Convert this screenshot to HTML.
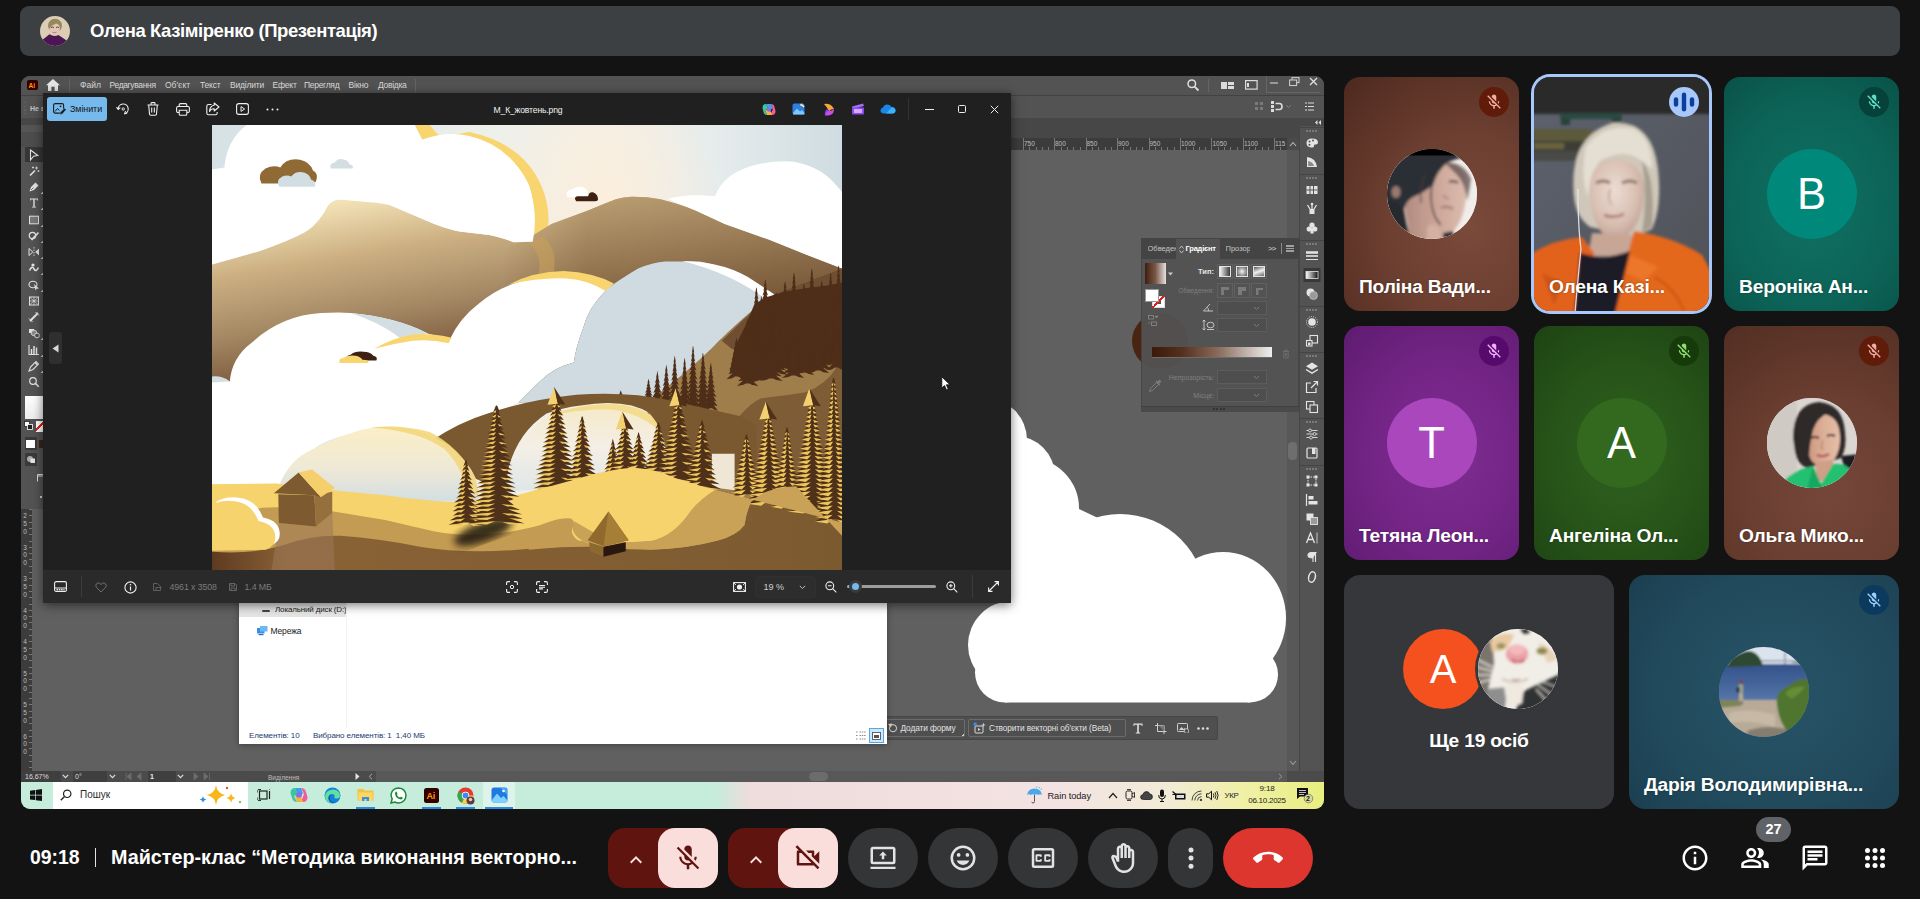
<!DOCTYPE html>
<html lang="uk">
<head>
<meta charset="utf-8">
<title>Meet</title>
<style>
*{box-sizing:border-box;margin:0;padding:0}
html,body{width:1920px;height:899px;overflow:hidden;background:#131314}
body{position:relative;font-family:"Liberation Sans",sans-serif;color:#fff}
.abs{position:absolute}
/* top bar */
#topbar{position:absolute;left:20px;top:6px;width:1880px;height:50px;background:#3c4043;border-radius:9px}
#topbar .ava{position:absolute;left:20px;top:10px;width:30px;height:30px;border-radius:50%;overflow:hidden}
#topbar .ttl{position:absolute;left:70px;top:0;line-height:50px;font-weight:bold;font-size:18.5px;letter-spacing:-0.42px;white-space:nowrap;color:#fff}
/* presentation frame */
#pres{position:absolute;left:21px;top:76px;width:1303px;height:733px;border-radius:9px;overflow:hidden;background:#606060}
/* tiles */
.tile{position:absolute;border-radius:16px;overflow:hidden}
.tile .nm{position:absolute;left:15px;bottom:12px;font-weight:bold;font-size:19.2px;letter-spacing:-0.2px;white-space:nowrap;color:#fff;line-height:24px;text-shadow:0 0 2px rgba(0,0,0,.35)}
.tile .av{position:absolute;left:50%;top:50%;width:90px;height:90px;margin:-45px 0 0 -45px;border-radius:50%;overflow:hidden;text-align:center;line-height:90px;font-size:43.500px;color:#fff}
.mic{position:absolute;right:10px;top:10px;width:30px;height:30px;border-radius:50%}
.mic svg{position:absolute;left:6px;top:6px;width:18px;height:18px}
/* bottom bar */
#bb{position:absolute;left:0;top:815px;width:1920px;height:84px}
.btn{position:absolute;top:13px;height:60px;background:#333537;border-radius:30px}
.btn svg{position:absolute;left:50%;top:50%;width:30px;height:30px;margin:-15px 0 0 -15px}
</style>
</head>
<body>

<!-- TOPBAR -->
<div id="topbar">
  <div class="ava"><svg width="30" height="30" viewBox="0 0 30 30"><defs><filter id="b0"><feGaussianBlur stdDeviation=".45"/></filter></defs><rect width="30" height="30" fill="#dccdb6"/><g filter="url(#b0)"><ellipse cx="15" cy="9.800" rx="7" ry="7" fill="#96885e"/><ellipse cx="14.600" cy="12.800" rx="5.300" ry="6.200" fill="#e2c6b3"/><path d="M9 7.500 Q14 3.500 20.500 8 Q17 7 14 8.500 Q11 9.500 9.500 13 Q8 10 9 7.500Z" fill="#96885e"/><path d="M11 11.500 q1.500 -.8 3 0 M16 11.500 q1.500 -.8 3 0" stroke="#4a3a34" stroke-width=".9" fill="none"/><path d="M12.500 16.200 q2 1 4 0" stroke="#a86a66" stroke-width=".8" fill="none"/><path d="M1 25 L9.500 18.300 Q14 21.500 18.500 19 L28 25.500 L31 31 L-1 31Z" fill="#4b1552"/></g></svg></div>
  <div class="ttl">Олена Казіміренко (Презентація)</div>
</div>

<!-- PRESENTATION -->
<div id="pres">
<div id="pw" style="position:absolute;left:-21px;top:-76px;width:1920px;height:899px;font-size:8.5px;color:#d6d6d6">
<style>
#pw div,#pw svg{position:absolute}
#pw .t{white-space:nowrap;line-height:12px}
</style>
<!-- ILLUSTRATOR chrome -->
<div style="left:21px;top:76px;width:1303px;height:19px;background:#535353"></div>
<div style="left:21px;top:95px;width:1303px;height:1px;background:#424242"></div>
<div style="left:21px;top:96px;width:1303px;height:22px;background:#535353"></div>
<div style="left:21px;top:118px;width:1303px;height:20px;background:#474747"></div>
<div style="left:21px;top:124.500px;width:22px;height:7px;background:#555"></div><div style="left:21px;top:131.500px;width:22px;height:7px;background:#4d4d4d"></div>
<!-- ruler top -->
<div style="left:32px;top:138px;width:1255px;height:12px;background:#3c3c3c"></div>
<!-- canvas -->
<div style="left:32px;top:150px;width:1255px;height:621px;background:#606060"></div>
<!-- Ai logo -->
<div style="left:27px;top:80px;width:11px;height:10px;background:#330000;border-radius:2px"></div>
<div class="t" style="left:28.5px;top:79.5px;font-size:6.5px;font-weight:bold;color:#ff9a00">Ai</div>
<svg style="left:46px;top:79px" width="14" height="12" viewBox="0 0 14 12"><path d="M7 0 L14 6.200 L12 6.200 L12 12 L8.600 12 L8.600 7.800 L5.400 7.800 L5.400 12 L2 12 L2 6.200 L0 6.200Z" fill="#e4e4e4"/></svg>
<div style="left:69px;top:79px;width:1px;height:13px;background:#646464"></div>
<div class="t" style="left:80px;top:79px;color:#dadada">Файл</div>
<div class="t" style="left:109.500px;top:79px;color:#dadada;letter-spacing:-.35px">Редагування</div>
<div class="t" style="left:165px;top:79px;color:#dadada">Об'єкт</div>
<div class="t" style="left:200px;top:79px;color:#dadada;letter-spacing:-.2px">Текст</div>
<div class="t" style="left:230px;top:79px;color:#dadada;letter-spacing:-.2px">Виділити</div>
<div class="t" style="left:272.500px;top:79px;color:#dadada;letter-spacing:-.2px">Ефект</div>
<div class="t" style="left:304px;top:79px;color:#dadada;letter-spacing:-.3px">Перегляд</div>
<div class="t" style="left:348.500px;top:79px;color:#dadada;letter-spacing:-.2px">Вікно</div>
<div class="t" style="left:378px;top:79px;color:#dadada;letter-spacing:-.3px">Довідка</div>
<div style="left:415px;top:79px;width:1px;height:13px;background:#646464"></div>
<!-- top-right of AI -->
<svg style="left:1186px;top:78px" width="14" height="14" viewBox="0 0 14 14"><circle cx="5.800" cy="5.800" r="3.800" fill="none" stroke="#e0e0e0" stroke-width="1.500"/><path d="M8.600 8.600 L12.500 12.500" stroke="#e0e0e0" stroke-width="1.800"/></svg>
<div style="left:1208px;top:79px;width:1px;height:13px;background:#646464"></div>
<svg style="left:1221px;top:81px" width="14" height="9" viewBox="0 0 14 9"><rect x="0" y="1" width="6" height="7" fill="#dcdcdc"/><rect x="7" y="1" width="6" height="3" fill="#dcdcdc"/><rect x="7" y="5" width="6" height="3" fill="#dcdcdc"/></svg>
<svg style="left:1245px;top:80px" width="13" height="10" viewBox="0 0 13 10"><rect x=".6" y=".6" width="11.500" height="8.500" fill="none" stroke="#dcdcdc" stroke-width="1.200"/><rect x="2" y="3" width="2" height="4" fill="#dcdcdc"/></svg>
<div style="left:1266px;top:76px;width:54px;height:17px;border-bottom:1px solid #666;border-left:1px solid #666"></div>
<div style="left:1270px;top:82px;width:8px;height:2px;background:#9a9a9a"></div>
<svg style="left:1289px;top:77px" width="12" height="10" viewBox="0 0 12 10"><rect x="3" y=".6" width="7" height="5" fill="none" stroke="#c8c8c8" stroke-width="1.100"/><rect x=".6" y="3" width="7" height="5.500" fill="#535353" stroke="#c8c8c8" stroke-width="1.100"/></svg>
<svg style="left:1309px;top:77px" width="9" height="9" viewBox="0 0 9 9"><path d="M1 1 L8 8 M8 1 L1 8" stroke="#dedede" stroke-width="1.400"/></svg>
<!-- control bar right icons -->
<svg style="left:1255px;top:102px" width="9" height="9" viewBox="0 0 9 9"><rect x="0" y="0" width="3" height="3" fill="#7a7a7a"/><rect x="5" y="0" width="3" height="3" fill="#7a7a7a"/><rect x="0" y="5" width="3" height="3" fill="#7a7a7a"/><rect x="5" y="5" width="3" height="3" fill="#7a7a7a"/></svg>
<svg style="left:1271px;top:101px" width="22" height="12" viewBox="0 0 22 12"><rect x="0" y="0" width="3" height="3" fill="#dcdcdc"/><rect x="0" y="4" width="3" height="3" fill="#dcdcdc"/><rect x="0" y="8" width="3" height="3" fill="#dcdcdc"/><path d="M4.500 2.500 H8.500 Q11 2.500 11 5.500 Q11 8.500 8.500 8.500 H4.500" fill="none" stroke="#dcdcdc" stroke-width="1.600"/><path d="M15.500 4.500 L17.500 6.500 L19.500 4.500" fill="none" stroke="#8a8a8a" stroke-width="1"/></svg>
<svg style="left:1305px;top:102px" width="9" height="9" viewBox="0 0 9 9"><path d="M0 1 H2 M3 1 H9 M0 4.500 H2 M3 4.500 H9 M0 8 H2 M3 8 H9" stroke="#dcdcdc" stroke-width="1.200"/></svg>
<div class="t" style="left:30px;top:102.500px;font-size:7px;color:#c4c4c4;font-weight:bold">Не в</div>
<div style="left:23.500px;top:101.500px;width:2px;height:13px;background:repeating-linear-gradient(#6a5a6a 0 1.500px,transparent 1.500px 3.600px)"></div>
<!-- left toolbar -->
<div style="left:21px;top:138px;width:22px;height:371px;background:#535353"></div><div style="left:21px;top:138px;width:22px;height:9px;background:#4d4d4d"></div>
<div style="left:21px;top:509px;width:11px;height:262px;background:#3c3c3c"></div>
<div style="left:25px;top:147px;width:18px;height:15px;background:#363636"></div>
<svg style="left:26px;top:147.5px" width="16" height="14" viewBox="-8 -7 16 14"><path d="M-3.500 -5 L3.800 .5 L-.5 1.200 L-3.500 5Z" fill="none" stroke="#e2e2e2" stroke-width="1.100"/></svg>
<svg style="left:26px;top:164.0px" width="16" height="14" viewBox="-8 -7 16 14"><path d="M-4 4.500 L1 -.5" stroke="#e2e2e2" stroke-width="1.600"/><path d="M2.500 -4.500 v3 M1 -3 h3 M4.500 -1 v2 M3.500 0 h2 M-1 -4.500 v2 M-2 -3.500 h2" stroke="#e2e2e2" stroke-width=".8"/></svg>
<svg style="left:26px;top:180.0px" width="16" height="14" viewBox="-8 -7 16 14"><path d="M-4.500 4.500 L-3 0 L1.500 -4.500 L4.500 -1.500 L0 3Z" fill="#e2e2e2"/><path d="M-3 3 L-.5 .5" stroke="#535353" stroke-width=".8"/></svg>
<div style="left:40.500px;top:192.0px;width:2px;height:2px;background:linear-gradient(135deg,transparent 50%,#cfcfcf 50%)"></div>
<svg style="left:26px;top:196.0px" width="16" height="14" viewBox="-8 -7 16 14"><path d="M-4 -4.500 H4 V-2.500 H3.300 V-3.500 H.7 V3.700 H2 V4.500 H-2 V3.700 H-.7 V-3.500 H-3.300 V-2.500 H-4Z" fill="#e2e2e2"/></svg>
<div style="left:40.500px;top:208.0px;width:2px;height:2px;background:linear-gradient(135deg,transparent 50%,#cfcfcf 50%)"></div>
<svg style="left:26px;top:212.5px" width="16" height="14" viewBox="-8 -7 16 14"><rect x="-4.500" y="-3.800" width="9" height="7.600" fill="#777" stroke="#e2e2e2" stroke-width="1"/></svg>
<div style="left:40.500px;top:224.5px;width:2px;height:2px;background:linear-gradient(135deg,transparent 50%,#cfcfcf 50%)"></div>
<svg style="left:26px;top:229.0px" width="16" height="14" viewBox="-8 -7 16 14"><circle cx="-1.500" cy="-.5" r="3.200" fill="none" stroke="#e2e2e2" stroke-width="1.200"/><path d="M-2.500 4 L4.500 -3.500" stroke="#e2e2e2" stroke-width="1.800"/></svg>
<div style="left:40.500px;top:241.0px;width:2px;height:2px;background:linear-gradient(135deg,transparent 50%,#cfcfcf 50%)"></div>
<svg style="left:26px;top:245.0px" width="16" height="14" viewBox="-8 -7 16 14"><path d="M-5 -3.500 L-1.200 0 L-5 3.500Z" fill="none" stroke="#e2e2e2" stroke-width="1"/><path d="M5 -3.500 L1.200 0 L5 3.500Z" fill="#e2e2e2"/><path d="M0 -5 V5" stroke="#e2e2e2" stroke-width=".8" stroke-dasharray="1.500 1"/></svg>
<div style="left:40.500px;top:257.0px;width:2px;height:2px;background:linear-gradient(135deg,transparent 50%,#cfcfcf 50%)"></div>
<svg style="left:26px;top:261.0px" width="16" height="14" viewBox="-8 -7 16 14"><path d="M-4.500 2.500 Q-2 -3 0 1 Q2 4.500 4.500 -.5" fill="none" stroke="#e2e2e2" stroke-width="1.600"/><circle cx="-1" cy="-3" r="1.600" fill="#e2e2e2"/></svg>
<div style="left:40.500px;top:273.0px;width:2px;height:2px;background:linear-gradient(135deg,transparent 50%,#cfcfcf 50%)"></div>
<svg style="left:26px;top:277.5px" width="16" height="14" viewBox="-8 -7 16 14"><ellipse cx="-1" cy="-.5" rx="4" ry="3.200" fill="none" stroke="#e2e2e2" stroke-width="1.100"/><path d="M0 -1 L5 3.500 L2.500 3.700 L1.500 5.500Z" fill="#e2e2e2"/></svg>
<div style="left:40.500px;top:289.5px;width:2px;height:2px;background:linear-gradient(135deg,transparent 50%,#cfcfcf 50%)"></div>
<svg style="left:26px;top:293.5px" width="16" height="14" viewBox="-8 -7 16 14"><rect x="-4.500" y="-4" width="9" height="8" fill="none" stroke="#e2e2e2" stroke-width="1"/><path d="M-4.500 -4 L4.500 4 M-4.500 4 L4.500 -4 M-4.500 0 H4.500 M0 -4 V4" stroke="#e2e2e2" stroke-width=".7"/></svg>
<svg style="left:26px;top:310.0px" width="16" height="14" viewBox="-8 -7 16 14"><path d="M-4 4 L4 -4" stroke="#e2e2e2" stroke-width="2"/><path d="M-5 1.500 L-1.500 5 M1.500 -5 L5 -1.500" stroke="#e2e2e2" stroke-width="1"/></svg>
<svg style="left:26px;top:326.0px" width="16" height="14" viewBox="-8 -7 16 14"><rect x="-5" y="-4" width="5" height="4" fill="#e2e2e2"/><circle cx="0" cy="0" r="2.800" fill="#888" stroke="#e2e2e2" stroke-width=".8"/><circle cx="3" cy="2.500" r="2.400" fill="#535353" stroke="#e2e2e2" stroke-width=".9"/></svg>
<div style="left:40.500px;top:338.0px;width:2px;height:2px;background:linear-gradient(135deg,transparent 50%,#cfcfcf 50%)"></div>
<svg style="left:26px;top:342.5px" width="16" height="14" viewBox="-8 -7 16 14"><path d="M-5 -5 V4.500 H5" fill="none" stroke="#e2e2e2" stroke-width="1.100"/><path d="M-2.500 4 V-1 M0 4 V-4 M2.500 4 V-2.500" stroke="#e2e2e2" stroke-width="1.500"/></svg>
<div style="left:40.500px;top:354.5px;width:2px;height:2px;background:linear-gradient(135deg,transparent 50%,#cfcfcf 50%)"></div>
<svg style="left:26px;top:359.0px" width="16" height="14" viewBox="-8 -7 16 14"><path d="M-5 5 L-3.500 1 L2 -4.500 L4.500 -2 L-1 3.500Z" fill="none" stroke="#e2e2e2" stroke-width="1.100"/><path d="M1 -3.500 L3.500 -1" stroke="#e2e2e2" stroke-width="1.600"/></svg>
<div style="left:40.500px;top:371.0px;width:2px;height:2px;background:linear-gradient(135deg,transparent 50%,#cfcfcf 50%)"></div>
<svg style="left:26px;top:375.0px" width="16" height="14" viewBox="-8 -7 16 14"><circle cx="-1" cy="-1" r="3.300" fill="none" stroke="#e2e2e2" stroke-width="1.200"/><path d="M1.500 1.500 L4.800 4.800" stroke="#e2e2e2" stroke-width="1.600"/></svg>
<!-- toolbar swatches -->
<div style="left:25px;top:396px;width:18px;height:23px;background:linear-gradient(#fff,#ececec)"></div>
<svg style="left:24px;top:421px" width="9" height="9" viewBox="0 0 9 9"><rect x=".5" y=".5" width="5" height="5" fill="#fff" stroke="#222" stroke-width=".8"/><rect x="3.500" y="3.500" width="5" height="5" fill="#222" stroke="#fff" stroke-width=".8"/></svg>
<div style="left:36px;top:421px;width:7px;height:11px;background:linear-gradient(135deg,#fff 0 42%,#e0201c 42% 58%,#fff 58%)"></div>
<div style="left:24.500px;top:437px;width:12.500px;height:13px;background:#3a3a3a;border-radius:1px"></div>
<div style="left:26px;top:439.500px;width:9px;height:8.500px;background:#fff"></div>
<div style="left:38.500px;top:440px;width:4.500px;height:8px;background:#3c2416"></div>
<div style="left:24.500px;top:453px;width:12.500px;height:13px;background:#3a3a3a;border-radius:1px"></div>
<svg style="left:26px;top:455px" width="10" height="9" viewBox="0 0 10 9"><circle cx="4" cy="4" r="3" fill="#aaa"/><rect x="4.500" y="3.500" width="4.500" height="4.500" fill="#e2e2e2"/></svg>
<svg style="left:36.500px;top:473px" width="7" height="9" viewBox="0 0 7 9"><path d="M.5 8.500 V1.500 H7 M.5 3 H7" fill="none" stroke="#dcdcdc" stroke-width="1"/></svg>
<div style="left:40px;top:496px;width:1.500px;height:1.500px;background:#ccc"></div>
<!-- top ruler labels -->
<div id="rul" style="left:1011px;top:138px;width:276px;height:12px;overflow:hidden;font-size:6.500px;color:#bdbdbd">
<div class="t" style="left:13px;top:0">750</div><div class="t" style="left:44px;top:0">800</div><div class="t" style="left:75.500px;top:0">850</div><div class="t" style="left:107px;top:0">900</div><div class="t" style="left:138.500px;top:0">950</div><div class="t" style="left:170px;top:0">1000</div><div class="t" style="left:201.500px;top:0">1050</div><div class="t" style="left:233px;top:0">1100</div><div class="t" style="left:264px;top:0">115</div>
<div style="left:11.500px;top:0;width:270px;height:12px;background:repeating-linear-gradient(90deg,#777 0 1px,transparent 1px 31.400px)"></div>
<div style="left:11.500px;top:9px;width:270px;height:3px;background:repeating-linear-gradient(90deg,#777 0 1px,transparent 1px 6.280px)"></div>
</div>
<!-- left ruler labels -->
<div style="left:21px;top:509px;width:11px;height:262px;overflow:hidden;font-size:6.500px;color:#bdbdbd;line-height:7.800px;text-align:center">
<div style="left:0;top:3px;width:8px">2<br>5<br>0</div><div style="left:0;top:34.500px;width:8px">3<br>0<br>0</div><div style="left:0;top:66px;width:8px">3<br>5<br>0</div><div style="left:0;top:97.500px;width:8px">4<br>0<br>0</div><div style="left:0;top:129px;width:8px">4<br>5<br>0</div><div style="left:0;top:160.500px;width:8px">5<br>0<br>0</div><div style="left:0;top:192px;width:8px">5<br>5<br>0</div><div style="left:0;top:223.500px;width:8px">6<br>0<br>0</div>
<div style="left:8px;top:0;width:3px;height:262px;background:repeating-linear-gradient(#777 0 1px,transparent 1px 6.300px)"></div>
</div>
<!-- vertical scrollbar + right icon strip -->
<div style="left:1287px;top:138px;width:12px;height:633px;background:#585858"></div>
<div style="left:1287px;top:138px;width:12px;height:12px;background:#4a4a4a"></div>
<svg style="left:1289px;top:141px" width="8" height="6" viewBox="0 0 8 6"><path d="M1 5 L4 1.500 L7 5" fill="none" stroke="#bbb" stroke-width="1.100"/></svg>
<svg style="left:1289px;top:760px" width="8" height="6" viewBox="0 0 8 6"><path d="M1 1 L4 4.500 L7 1" fill="none" stroke="#999" stroke-width="1.100"/></svg>
<div style="left:1288px;top:442px;width:9px;height:18px;border-radius:4px;background:#6e6e6e"></div>
<div style="left:1299px;top:118px;width:25px;height:664px;background:#535353;border-left:1px solid #454545"></div>
<div style="left:1299px;top:118px;width:25px;height:8px;background:#474747"></div>
<svg style="left:1315px;top:120px" width="6" height="5" viewBox="0 0 6 5"><path d="M2.500 0 L0 2.500 L2.500 5Z M6 0 L3.500 2.500 L6 5Z" fill="#ddd"/></svg>
<svg width="0" height="0"><defs><linearGradient id="gwb"><stop offset="0" stop-color="#fff"/><stop offset="1" stop-color="#111"/></linearGradient></defs></svg>
<div style="left:1300px;top:127px;width:24px;height:1px;background:#454545"></div><div style="left:1306px;top:130px;width:11px;height:2px;background:repeating-linear-gradient(90deg,#7a7a7a 0 2px,transparent 2px 3px)"></div>
<div style="left:1300px;top:174px;width:24px;height:1px;background:#454545"></div><div style="left:1306px;top:177px;width:11px;height:2px;background:repeating-linear-gradient(90deg,#7a7a7a 0 2px,transparent 2px 3px)"></div>
<div style="left:1300px;top:240px;width:24px;height:1px;background:#454545"></div><div style="left:1306px;top:243px;width:11px;height:2px;background:repeating-linear-gradient(90deg,#7a7a7a 0 2px,transparent 2px 3px)"></div>
<div style="left:1300px;top:306px;width:24px;height:1px;background:#454545"></div><div style="left:1306px;top:309px;width:11px;height:2px;background:repeating-linear-gradient(90deg,#7a7a7a 0 2px,transparent 2px 3px)"></div>
<div style="left:1300px;top:352px;width:24px;height:1px;background:#454545"></div><div style="left:1306px;top:355px;width:11px;height:2px;background:repeating-linear-gradient(90deg,#7a7a7a 0 2px,transparent 2px 3px)"></div>
<div style="left:1300px;top:418px;width:24px;height:1px;background:#454545"></div><div style="left:1306px;top:421px;width:11px;height:2px;background:repeating-linear-gradient(90deg,#7a7a7a 0 2px,transparent 2px 3px)"></div>
<div style="left:1300px;top:465px;width:24px;height:1px;background:#454545"></div><div style="left:1306px;top:468px;width:11px;height:2px;background:repeating-linear-gradient(90deg,#7a7a7a 0 2px,transparent 2px 3px)"></div>
<svg style="left:1303px;top:135px" width="18" height="16" viewBox="-9 -8 18 16"><path d="M-5.500 0 Q-5.500 -4.500 0 -4.500 Q6 -4.500 6 -.5 Q6 2 3 1.500 Q1.500 1.500 2 3 Q2 4.500 -1 4.500 Q-5.500 4 -5.500 0Z" fill="#e4e4e4"/><circle cx="-2.500" cy="-1.500" r="1" fill="#535353"/><circle cx="1" cy="-2.500" r="1" fill="#535353"/><circle cx="-2.500" cy="1.800" r="1" fill="#535353"/></svg>
<svg style="left:1303px;top:154px" width="18" height="16" viewBox="-9 -8 18 16"><path d="M-5 5 V-5 Q4 -4 5 5Z" fill="#e4e4e4"/><path d="M-3.800 4 V-1 Q1 0 2 4Z" fill="#888"/></svg>
<svg style="left:1303px;top:182px" width="18" height="16" viewBox="-9 -8 18 16"><rect x="-5.500" y="-4" width="11" height="8" fill="#e4e4e4"/><path d="M-2 -4 V4 M1.500 -4 V4 M-5.500 0 H5.500" stroke="#535353" stroke-width="1"/></svg>
<svg style="left:1303px;top:201px" width="18" height="16" viewBox="-9 -8 18 16"><path d="M-2.500 0 H2.500 V5 H-2.500Z" fill="#e4e4e4"/><path d="M0 0 V-5.500 M-2 0 L-4.500 -4 M2 0 L4.500 -4" stroke="#e4e4e4" stroke-width="1.300"/><circle cx="0" cy="-5" r="1.300" fill="#e4e4e4"/></svg>
<svg style="left:1303px;top:220px" width="18" height="16" viewBox="-9 -8 18 16"><circle cx="0" cy="-2.800" r="2.600" fill="#e4e4e4"/><circle cx="-2.800" cy="1" r="2.600" fill="#e4e4e4"/><circle cx="2.800" cy="1" r="2.600" fill="#e4e4e4"/><path d="M-.8 0 H.8 L1.800 5.500 H-1.800Z" fill="#e4e4e4"/></svg>
<svg style="left:1303px;top:248px" width="18" height="16" viewBox="-9 -8 18 16"><path d="M-6 -3.500 H6" stroke="#e4e4e4" stroke-width="2.400"/><path d="M-6 0 H6" stroke="#e4e4e4" stroke-width="1.600"/><path d="M-6 3.500 H6" stroke="#e4e4e4" stroke-width="1"/></svg>
<svg style="left:1303px;top:267px" width="18" height="16" viewBox="-9 -8 18 16"><rect x="-8.500" y="-7" width="17" height="14" fill="#383838"/><rect x="-6" y="-3.500" width="12" height="7" fill="url(#gwb)" stroke="#e4e4e4" stroke-width=".8"/></svg>
<svg style="left:1303px;top:286px" width="18" height="16" viewBox="-9 -8 18 16"><circle cx="-1.500" cy="-1.500" r="4" fill="#e4e4e4"/><circle cx="1.500" cy="1.500" r="4" fill="#9a9a9a" stroke="#cfcfcf" stroke-width=".6"/></svg>
<svg style="left:1303px;top:314px" width="18" height="16" viewBox="-9 -8 18 16"><circle cx="0" cy="0" r="3.800" fill="#e4e4e4"/><circle cx="0" cy="0" r="5.500" fill="none" stroke="#e4e4e4" stroke-width=".9" stroke-dasharray="1 1.200"/></svg>
<svg style="left:1303px;top:333px" width="18" height="16" viewBox="-9 -8 18 16"><rect x="-2" y="-5.500" width="7.500" height="7.500" fill="none" stroke="#e4e4e4" stroke-width="1.100"/><rect x="-5.500" y="-.5" width="5.500" height="5.500" fill="#535353" stroke="#e4e4e4" stroke-width="1.100"/><rect x="-4" y="1.500" width="2.500" height="2.500" fill="#e4e4e4"/></svg>
<svg style="left:1303px;top:360px" width="18" height="16" viewBox="-9 -8 18 16"><path d="M0 -5.500 L6 -1.800 L0 1.800 L-6 -1.800Z" fill="#e4e4e4"/><path d="M-6 1.500 L0 5.200 L6 1.500" fill="none" stroke="#e4e4e4" stroke-width="1.400"/></svg>
<svg style="left:1303px;top:379px" width="18" height="16" viewBox="-9 -8 18 16"><path d="M-1 -4 H-5.500 V5.500 H4 V1" fill="none" stroke="#e4e4e4" stroke-width="1.200"/><path d="M-1 1 L5.500 -5.500 M1.500 -5.500 H5.500 V-1.500" fill="none" stroke="#e4e4e4" stroke-width="1.200"/></svg>
<svg style="left:1303px;top:399px" width="18" height="16" viewBox="-9 -8 18 16"><rect x="-5.500" y="-5.500" width="7.500" height="7.500" fill="none" stroke="#e4e4e4" stroke-width="1.100"/><rect x="-2" y="-2" width="7.500" height="7.500" fill="#535353" stroke="#e4e4e4" stroke-width="1.100"/></svg>
<svg style="left:1303px;top:426px" width="18" height="16" viewBox="-9 -8 18 16"><path d="M-5.500 -3.500 H5.500 M-5.500 0 H5.500 M-5.500 3.500 H5.500" stroke="#e4e4e4" stroke-width=".9"/><circle cx="-2" cy="-3.500" r="1.500" fill="#535353" stroke="#e4e4e4" stroke-width=".8"/><circle cx="2.500" cy="0" r="1.500" fill="#535353" stroke="#e4e4e4" stroke-width=".8"/><circle cx="-1" cy="3.500" r="1.500" fill="#535353" stroke="#e4e4e4" stroke-width=".8"/></svg>
<svg style="left:1303px;top:445px" width="18" height="16" viewBox="-9 -8 18 16"><rect x="-5" y="-5" width="10" height="10" rx="1" fill="none" stroke="#e4e4e4" stroke-width="1.200"/><rect x="0" y="-5" width="3.500" height="6" fill="#e4e4e4"/></svg>
<svg style="left:1303px;top:473px" width="18" height="16" viewBox="-9 -8 18 16"><rect x="-4" y="-4" width="8" height="8" fill="none" stroke="#e4e4e4" stroke-width="1" stroke-dasharray="1.500 1"/><path d="M-5.500 -5.500 h3 v3 h-3z M2.500 -5.500 h3 v3 h-3z M-5.500 2.500 h3 v3 h-3z M2.500 2.500 h3 v3 h-3z" fill="#e4e4e4"/></svg>
<svg style="left:1303px;top:492px" width="18" height="16" viewBox="-9 -8 18 16"><path d="M-5.500 -6 V6" stroke="#e4e4e4" stroke-width="1.200"/><rect x="-3.500" y="-4" width="5" height="3.500" fill="#e4e4e4"/><rect x="-3.500" y="1" width="9" height="3.500" fill="#e4e4e4"/></svg>
<svg style="left:1303px;top:511px" width="18" height="16" viewBox="-9 -8 18 16"><rect x="-5.500" y="-5.500" width="7" height="7" fill="#e4e4e4"/><rect x="-1.500" y="-1.500" width="7" height="7" fill="#9a9a9a" stroke="#e4e4e4" stroke-width=".9"/></svg>
<svg style="left:1303px;top:530px" width="18" height="16" viewBox="-9 -8 18 16"><path d="M-5.500 5 L-1.500 -5 L2.500 5 M-4 1.500 H1" fill="none" stroke="#e4e4e4" stroke-width="1.300"/><path d="M5 -5.500 V5.500" stroke="#e4e4e4" stroke-width=".8"/></svg>
<svg style="left:1303px;top:549px" width="18" height="16" viewBox="-9 -8 18 16"><path d="M1 -4.500 V5 M3.500 -4.500 V5 M4.500 -4.500 H-.5 Q-4 -4.500 -4 -1.500 Q-4 1 1 1" fill="#e4e4e4" stroke="#e4e4e4" stroke-width="1.100"/></svg>
<svg style="left:1303px;top:569px" width="18" height="16" viewBox="-9 -8 18 16"><ellipse cx="0" cy="0" rx="3.300" ry="5.300" fill="none" stroke="#e4e4e4" stroke-width="1.500" transform="rotate(14)"/></svg>
<!-- big white cloud on canvas -->
<svg style="left:32px;top:150px" width="1255" height="621" viewBox="32 150 1255 621"><g fill="#fff"><circle cx="985" cy="440" r="42"/><circle cx="1015" cy="476" r="40"/><circle cx="1029" cy="508" r="50"/><circle cx="1120" cy="600" r="86"/><ellipse cx="1223" cy="618" rx="63" ry="66"/><circle cx="1250" cy="674.500" r="28"/><circle cx="1005" cy="672.500" r="30"/><circle cx="1012" cy="645" r="44"/><rect x="1005" y="600" width="245" height="102.500"/><path d="M1005 430 L1040 470 L1079 509 L1098 518 L1120 520 L1192 557 L1262 600 L1262 680 L990 690 L1000 625Z"/></g>
<circle cx="1160" cy="341" r="28" fill="#4a2412"/></svg>
<!-- gradient panel -->
<div style="left:1141px;top:238px;width:158px;height:174px;background:#535353;opacity:.93;border:1px solid #464646"></div>
<div style="left:1141px;top:238px;width:158px;height:21px;background:#444"></div>
<div style="left:1176px;top:239px;width:44px;height:20px;background:#535353"></div>
<div class="t" style="left:1147.500px;top:243px;font-size:7.500px;color:#c4c4c4;width:28px;overflow:hidden">Обведення</div>
<svg style="left:1178.500px;top:244.500px" width="5" height="9" viewBox="0 0 5 9"><path d="M.5 3.500 L2.500 1 L4.500 3.500 M.5 5.500 L2.500 8 L4.500 5.500" fill="none" stroke="#ccc" stroke-width=".9"/></svg>
<div class="t" style="left:1185.500px;top:243px;font-size:7.500px;color:#fff;font-weight:bold;letter-spacing:-.2px">Градієнт</div>
<div class="t" style="left:1225.500px;top:243px;font-size:7.500px;color:#c4c4c4;width:24px;overflow:hidden">Прозорість</div>
<div class="t" style="left:1268px;top:242.500px;font-size:8px;color:#ddd;letter-spacing:-1px">&gt;&gt;</div>
<div style="left:1281px;top:243px;width:1px;height:11px;background:#888"></div>
<svg style="left:1286px;top:245px" width="8" height="8" viewBox="0 0 8 8"><path d="M0 1 H8 M0 3.500 H8 M0 6 H8" stroke="#a0a0a0" stroke-width="1.100" shape-rendering="crispEdges"/></svg>
<div style="left:1145px;top:263px;width:21px;height:21px;background:linear-gradient(90deg,#3e1e0e 0%,#7a5848 50%,#e6e2e0 100%)"></div>
<svg style="left:1168px;top:272px" width="5" height="4" viewBox="0 0 5 4"><path d="M0 .5 H5 L2.500 3.500Z" fill="#ccc"/></svg>
<div style="left:1152px;top:295.500px;width:13px;height:12.500px;background:linear-gradient(135deg,#fff 0 43%,#e0201c 43% 57%,#fff 57%);border:1px solid #ddd"></div>
<div style="left:1156px;top:299.500px;width:5px;height:4.500px;background:#535353"></div>
<div style="left:1152px;top:295.500px;width:13px;height:12.500px;background:linear-gradient(135deg,transparent 0 44%,#e0201c 44% 56%,transparent 56%)"></div>
<div style="left:1145px;top:288.500px;width:13.500px;height:13px;background:#fff;border:.5px solid #999"></div>
<svg style="left:1148px;top:315px" width="11" height="12" viewBox="0 0 11 12"><rect x=".5" y=".5" width="5" height="3.500" fill="none" stroke="#8a8a8a" stroke-width=".8"/><rect x="3.500" y="7" width="5" height="3.500" fill="none" stroke="#8a8a8a" stroke-width=".8"/><path d="M7 1 h3 l-1.500 2z M0 8 h2.500" fill="#8a8a8a" stroke="#8a8a8a" stroke-width=".6"/></svg>
<div class="t" style="left:1180px;top:265.500px;width:34px;text-align:right;font-size:7.500px;color:#e6e6e6;font-weight:bold">Тип:</div>
<div style="left:1217px;top:264px;width:16px;height:15px;border:1px solid #606060"></div><div style="left:1219px;top:266px;width:12px;height:11px;background:linear-gradient(90deg,#f2f2f2,#3a3a3a);border:1px solid #e4e4e4"></div>
<div style="left:1234px;top:264px;width:16px;height:15px;border:1px solid #606060"></div><div style="left:1236px;top:266px;width:12px;height:11px;background:radial-gradient(circle,#f2f2f2,#555);border:1px solid #e4e4e4"></div>
<div style="left:1251px;top:264px;width:16px;height:15px;border:1px solid #606060"></div><div style="left:1253px;top:266px;width:12px;height:11px;background:linear-gradient(160deg,#555,#f2f2f2 50%,#666);border:1px solid #e4e4e4"></div>
<div class="t" style="left:1160px;top:285px;width:54px;text-align:right;font-size:6.500px;color:#7e7e7e">Обведення:</div>
<div style="left:1217px;top:283px;width:16px;height:15px;border:1px solid #606060"></div><div style="left:1234px;top:283px;width:16px;height:15px;border:1px solid #606060"></div><div style="left:1251px;top:283px;width:16px;height:15px;border:1px solid #606060"></div>
<svg style="left:1220px;top:286px" width="44" height="10" viewBox="0 0 44 10"><path d="M1 9 V1 H9 V4 H4 V9Z M18 9 V1 H26 V5 H22 V9Z M36 9 V2 H43 V4 H38.500 V9Z" fill="#7a7a7a"/></svg>
<svg style="left:1203px;top:303px" width="11" height="9" viewBox="0 0 11 9"><path d="M.5 8 H10 M.5 8 L7 1 M5.500 8 Q5.500 5 4 4.300" fill="none" stroke="#cfcfcf" stroke-width=".9"/></svg>
<div style="left:1217px;top:301px;width:50px;height:14px;background:#4e4e4e;border:1px solid #5c5c5c"></div>
<svg style="left:1253px;top:306px" width="7" height="5" viewBox="0 0 7 5"><path d="M1 1 L3.500 3.500 L6 1" fill="none" stroke="#7c7c7c" stroke-width="1"/></svg>
<svg style="left:1202px;top:319px" width="13" height="12" viewBox="0 0 13 12"><path d="M2 1 V11 M.5 2.500 L2 1 L3.500 2.500 M.5 9.500 L2 11 L3.500 9.500 M5 10.500 H12" fill="none" stroke="#cfcfcf" stroke-width=".9"/><ellipse cx="8.500" cy="6" rx="3.500" ry="2.800" fill="none" stroke="#cfcfcf" stroke-width=".9"/></svg>
<div style="left:1217px;top:318px;width:50px;height:14px;background:#4e4e4e;border:1px solid #5c5c5c"></div>
<svg style="left:1253px;top:323px" width="7" height="5" viewBox="0 0 7 5"><path d="M1 1 L3.500 3.500 L6 1" fill="none" stroke="#7c7c7c" stroke-width="1"/></svg>
<div style="left:1152px;top:347px;width:120px;height:10.500px;background:linear-gradient(90deg,#3a1a0a 0%,#55301e 25%,#8a6a5a 55%,#cfc6c0 85%,#eee 100%);border-bottom:1px solid #6a6a6a"></div>
<svg style="left:1282px;top:349px" width="8" height="10" viewBox="0 0 8 10"><path d="M1 2.500 H7 M2.800 2.500 V1 H5.200 V2.500 M1.800 2.500 V9 H6.200 V2.500 M3.300 4 V7.500 M4.700 4 V7.500" fill="none" stroke="#747474" stroke-width=".8"/></svg>
<div class="t" style="left:1160px;top:372px;width:54px;text-align:right;font-size:7px;color:#808080">Непрозорість:</div>
<div style="left:1217px;top:370px;width:50px;height:14px;background:#4e4e4e;border:1px solid #5c5c5c"></div>
<svg style="left:1253px;top:375px" width="7" height="5" viewBox="0 0 7 5"><path d="M1 1 L3.500 3.500 L6 1" fill="none" stroke="#7c7c7c" stroke-width="1"/></svg>
<div class="t" style="left:1160px;top:390px;width:54px;text-align:right;font-size:7px;color:#808080">Місце:</div>
<div style="left:1217px;top:388px;width:50px;height:14px;background:#4e4e4e;border:1px solid #5c5c5c"></div>
<svg style="left:1253px;top:393px" width="7" height="5" viewBox="0 0 7 5"><path d="M1 1 L3.500 3.500 L6 1" fill="none" stroke="#7c7c7c" stroke-width="1"/></svg>
<svg style="left:1148px;top:379px" width="14" height="14" viewBox="0 0 14 14"><path d="M1.500 12.500 L2.500 9.500 L8.500 3.500 L10.500 5.500 L4.500 11.500Z" fill="none" stroke="#7c7c7c" stroke-width="1"/><path d="M8 2 L12 6 M9.500 3.500 L11.500 1.500 L12.500 2.500 L10.500 4.500" stroke="#7c7c7c" stroke-width="1.300" fill="none"/></svg>
<div style="left:1141px;top:406px;width:158px;height:6px;background:#4a4a4a;border-top:1px solid #404040"></div>
<div style="left:1213px;top:408px;width:12px;height:2px;background:repeating-linear-gradient(90deg,#333 0 2px,transparent 2px 3.300px)"></div>
<!-- contextual task bar -->
<div style="left:880px;top:716px;width:338px;height:24px;background:#4f4f4f;border:1px solid #464646;border-radius:2px"></div>
<div style="left:880px;top:719px;width:85px;height:18px;border:1px solid #6c6c6c;border-radius:2px"></div>
<svg style="left:888px;top:723px" width="10" height="10" viewBox="0 0 10 10"><circle cx="5" cy="5.200" r="3.600" fill="none" stroke="#d6d6d6" stroke-width="1"/><path d="M0 1 L4 .5 L3 4.500Z" fill="#d6d6d6"/></svg>
<div class="t" style="left:900.500px;top:722px;font-size:8.300px;color:#e2e2e2;letter-spacing:-.1px">Додати форму</div>
<div style="left:961.500px;top:734px;width:2px;height:2px;background:linear-gradient(135deg,transparent 50%,#cfcfcf 50%)"></div>
<div style="left:967.500px;top:719px;width:158px;height:18px;border:1px solid #6c6c6c;border-radius:2px"></div>
<svg style="left:973px;top:722px" width="13" height="12" viewBox="0 0 13 12"><rect x="2" y="4" width="8" height="7" rx="1" fill="none" stroke="#dcdcdc" stroke-width="1"/><path d="M5 6 L7.500 7.500 L5 9Z" fill="#dcdcdc"/><path d="M10.500 .5 L11 2.500 L13 3 L11 3.500 L10.500 5.500 L10 3.500 L8 3 L10 2.500Z" fill="#dcdcdc"/><circle cx="2.200" cy="2.200" r="1.700" fill="#3b8ff0"/></svg>
<div class="t" style="left:989px;top:722px;font-size:8.300px;color:#e2e2e2;letter-spacing:-.1px">Створити векторні об'єкти (Beta)</div>
<svg style="left:1133px;top:722.500px" width="10" height="11" viewBox="0 0 10 11"><path d="M.5 .5 H9.500 V3 H8.600 V1.800 H5.800 V9.500 H7.200 V10.500 H2.800 V9.500 H4.200 V1.800 H1.400 V3 H.5Z" fill="#e2e2e2"/></svg>
<svg style="left:1155px;top:722.500px" width="12" height="11" viewBox="0 0 12 11"><path d="M2.500 0 V8.500 H11.500 M0 2.500 H9 V11" fill="none" stroke="#cfcfcf" stroke-width="1"/><path d="M3.500 2.500 L9 2.500 L9 8Z" fill="#777"/></svg>
<svg style="left:1176.500px;top:723px" width="12" height="10" viewBox="0 0 12 10"><rect x=".5" y=".5" width="10" height="8" rx=".8" fill="none" stroke="#cfcfcf" stroke-width="1"/><path d="M2 7 L4.500 4 L6.500 6 L8 5 L9 7Z" fill="#cfcfcf"/><circle cx="9.500" cy="8" r="2.300" fill="#4f4f4f" stroke="#cfcfcf" stroke-width=".8"/></svg>
<svg style="left:1197px;top:726.500px" width="12" height="3" viewBox="0 0 12 3"><circle cx="1.500" cy="1.500" r="1.300" fill="#ddd"/><circle cx="6" cy="1.500" r="1.300" fill="#ddd"/><circle cx="10.500" cy="1.500" r="1.300" fill="#ddd"/></svg>
<!-- explorer window -->
<div style="left:239px;top:600px;width:648px;height:144px;background:#fff;box-shadow:0 1px 6px rgba(0,0,0,.35)"></div>
<div style="left:239px;top:603px;width:107px;height:14px;background:#e5e5e5"></div>
<div style="left:346px;top:603px;width:1px;height:125px;background:#f3f3f3"></div>
<div style="left:262px;top:609.500px;width:8px;height:2.500px;background:#444;border-radius:1px"></div>
<div class="t" style="left:275px;top:603.500px;font-size:8px;color:#222;width:71px;overflow:hidden;letter-spacing:-.15px">Локальний диск (D:)</div>
<svg style="left:256px;top:625px" width="12" height="11" viewBox="0 0 12 11"><rect x="1" y="3" width="7.500" height="5.500" fill="#3a8ee6"/><rect x="4" y="1" width="7.500" height="5.500" fill="#6ab7f5"/><rect x="2.500" y="9" width="5" height="1.200" fill="#2d6db8"/></svg>
<div class="t" style="left:270.500px;top:625px;font-size:8.500px;color:#1a1a1a;letter-spacing:-.15px">Мережа</div>
<div class="t" style="left:249px;top:730px;font-size:8px;color:#1e3a6e;letter-spacing:-.1px">Елементів: 10</div>
<div class="t" style="left:313px;top:730px;font-size:8px;color:#1e3a6e;letter-spacing:-.1px">Вибрано елементів: 1&nbsp; 1,40 МБ</div>
<svg style="left:856px;top:731px" width="10" height="9" viewBox="0 0 10 9"><path d="M0 1 H2 M3.500 1 H10 M0 4.500 H2 M3.500 4.500 H10 M0 8 H2 M3.500 8 H10" stroke="#8a8a8a" stroke-width="1" stroke-dasharray="1.500 .8"/></svg>
<div style="left:869px;top:728px;width:15px;height:15px;background:#cce8ff;border:1px solid #5aa7e0"></div>
<svg style="left:872px;top:732px" width="9" height="8" viewBox="0 0 9 8"><rect x=".5" y=".5" width="8" height="7" fill="#fff" stroke="#555" stroke-width=".9"/><rect x="2" y="3" width="5" height="3" fill="#555"/></svg>
<!-- PHOTOS window -->
<div style="left:43px;top:93px;width:968px;height:510px;background:#202020;box-shadow:0 2px 10px rgba(0,0,0,.55)"></div>
<div style="left:43px;top:570px;width:968px;height:33px;background:#2a2a2a"></div>
<div style="left:47px;top:97px;width:60px;height:24px;background:#76b9ed;border-radius:3px"></div>
<svg style="left:53px;top:102.500px" width="14" height="13" viewBox="0 0 14 13"><rect x=".6" y=".6" width="10" height="9.500" rx="1.500" fill="none" stroke="#1b1b1b" stroke-width="1.100"/><path d="M2 8.500 L4.500 5.500 L6.500 7.500" fill="none" stroke="#1b1b1b" stroke-width="1"/><circle cx="7.500" cy="3.300" r=".9" fill="#1b1b1b"/><path d="M6.500 12 L7.200 9.300 L11.500 5 L13.300 6.800 L9 11.200Z" fill="#1b1b1b" stroke="#76b9ed" stroke-width=".7"/></svg>
<div class="t" style="left:70px;top:103px;font-size:9px;color:#161616;letter-spacing:-.1px">Змінити</div>
<svg style="left:116px;top:102px" width="14" height="14" viewBox="0 0 14 14"><path d="M2.200 7 A5 5 0 1 1 8.500 11.800" fill="none" stroke="#f0f0f0" stroke-width="1.100"/><path d="M.5 5.200 L2.200 7.400 L4.300 5.600" fill="none" stroke="#f0f0f0" stroke-width="1.100"/><circle cx="7.200" cy="7" r="1.200" fill="none" stroke="#f0f0f0" stroke-width=".9"/><path d="M9.500 9 L8.500 12 L11.300 11" fill="none" stroke="#f0f0f0" stroke-width="1"/></svg>
<svg style="left:147px;top:102px" width="12" height="14" viewBox="0 0 12 14"><path d="M.5 3 H11.500 M4 3 V1.300 Q4 .6 4.700 .6 H7.300 Q8 .6 8 1.300 V3 M1.700 3 L2.500 12 Q2.600 13.200 3.800 13.200 H8.200 Q9.400 13.200 9.500 12 L10.300 3 M4.700 5.500 V10.500 M7.300 5.500 V10.500" fill="none" stroke="#f0f0f0" stroke-width="1.100"/></svg>
<svg style="left:176px;top:102.500px" width="14" height="13" viewBox="0 0 14 13"><path d="M3.200 3.500 V2 Q3.200 .6 4.600 .6 H9.400 Q10.800 .6 10.800 2 V3.500 M3.200 9.500 H2 Q.6 9.500 .6 8.100 V5 Q.6 3.500 2.100 3.500 H11.900 Q13.400 3.500 13.400 5 V8.100 Q13.400 9.500 12 9.500 H10.800 M3.200 7.200 H10.800 V11 Q10.800 12.300 9.500 12.300 H4.500 Q3.200 12.300 3.200 11Z" fill="none" stroke="#f0f0f0" stroke-width="1.100"/></svg>
<svg style="left:206px;top:102px" width="14" height="14" viewBox="0 0 14 14"><path d="M5.500 2.500 H2.600 Q.8 2.500 .8 4.300 V11 Q.8 12.800 2.600 12.800 H9.400 Q11.200 12.800 11.200 11 V10" fill="none" stroke="#f0f0f0" stroke-width="1.100"/><path d="M8.200 1 L13 5 L8.200 9 V6.800 Q5 6.600 3.500 9.500 Q3.800 4 8.200 3.300Z" fill="none" stroke="#f0f0f0" stroke-width="1.100" stroke-linejoin="round"/></svg>
<svg style="left:236px;top:103px" width="13" height="12" viewBox="0 0 13 12"><rect x=".6" y=".6" width="11.800" height="10.800" rx="2.200" fill="none" stroke="#f0f0f0" stroke-width="1.100"/><path d="M5 3.600 L8.600 6 L5 8.400Z" fill="none" stroke="#f0f0f0" stroke-width="1" stroke-linejoin="round"/></svg>
<svg style="left:266px;top:108px" width="13" height="3" viewBox="0 0 13 3"><circle cx="1.500" cy="1.500" r="1" fill="#f0f0f0"/><circle cx="6.500" cy="1.500" r="1" fill="#f0f0f0"/><circle cx="11.500" cy="1.500" r="1" fill="#f0f0f0"/></svg>
<div class="t" style="left:493.500px;top:103.500px;font-size:8.600px;color:#f2f2f2;letter-spacing:-.15px">М_К_жовтень.png</div>
<!-- app icons -->
<svg style="left:762px;top:102.500px" width="14" height="13" viewBox="0 0 14 13"><path d="M4 1 H9 L11 6 H6Z" fill="#3aa0f0"/><path d="M9 1 Q12 1 12.500 4 L13.500 8 Q13.500 12 10 12 H8 L11 6Z" fill="#f25c9a"/><path d="M10 12 H5 L3 7 H8Z" fill="#f8b13c"/><path d="M5 12 Q2 12 1.500 9 L.5 5 Q.5 1 4 1 L6 6 L3 7Z" fill="#3fc4a0"/><circle cx="7" cy="6.500" r="2.200" fill="#8a6ee8"/></svg>
<svg style="left:792px;top:103px" width="13" height="12" viewBox="0 0 13 12"><rect x=".5" y=".5" width="12" height="11" rx="2" fill="#2f7fe0"/><path d="M1 10 L5 5.500 L8 8.500 L10 7 L12.500 10 V11.500 H1Z" fill="#7ec8ff"/><path d="M9 1 L12 4" stroke="#fff" stroke-width="1.300"/><circle cx="9" cy="2" r="1" fill="#ffd84a"/></svg>
<svg style="left:822px;top:102.500px" width="13" height="13" viewBox="0 0 13 13"><path d="M2 1 Q9 0 12 6 Q9 6 7 8 Q5 4 2 1Z" fill="#f7a63a"/><path d="M3 12.500 Q3 7 7 8 Q10 8 12 6 Q12 12 6 12.500Z" fill="#c74cf0"/><path d="M3 12.500 Q2 8 5 6 L7 8 Q4 8 3 12.500Z" fill="#7a3cf0"/></svg>
<svg style="left:851px;top:103px" width="14" height="12" viewBox="0 0 14 12"><path d="M1 3.500 L12 .5 L13 3 L2 6Z" fill="#a070f0"/><rect x="1" y="4.500" width="12" height="7" rx="1" fill="#8e4cf0"/><rect x="3" y="6" width="8" height="4" fill="#d8a8ff"/></svg>
<svg style="left:880px;top:104px" width="16" height="10" viewBox="0 0 16 10"><path d="M4 9.500 Q.5 9.500 .5 6.500 Q.5 4 3 3.500 Q4 .5 7.500 .5 Q10.500 .5 11.500 3 Q15.500 3 15.500 6.500 Q15.500 9.500 12.500 9.500Z" fill="#1a86e8"/><path d="M6 9.500 L11 4 Q12 3 13 3.200 Q15.500 4 15.500 6.500 Q15.500 9.500 12.500 9.500Z" fill="#3ab0f5"/></svg>
<div style="left:908px;top:98px;width:1px;height:22px;background:#333"></div>
<div style="left:925px;top:108.500px;width:9px;height:1px;background:#eee"></div>
<div style="left:958px;top:105px;width:8px;height:8px;border:1px solid #eee;border-radius:1.500px"></div>
<svg style="left:990px;top:105px" width="9" height="9" viewBox="0 0 9 9"><path d="M.8 .8 L8.200 8.200 M8.200 .8 L.8 8.200" stroke="#eee" stroke-width="1"/></svg>
<!-- prev arrow -->
<div style="left:49px;top:332px;width:13px;height:32px;background:#2f2f2f;border-radius:3px"></div>
<svg style="left:52px;top:343.500px" width="7" height="9" viewBox="0 0 7 9"><path d="M6.500 .5 V8.500 L.5 4.500Z" fill="#d8d8d8"/></svg>
<!-- artwork -->
<div style="left:212px;top:125px;width:630px;height:445px;overflow:hidden;background:#fff">
<svg width="630" height="445" viewBox="0 0 1273 899" preserveAspectRatio="none" style="position:absolute;left:0;top:0;display:block">
<defs>
<linearGradient id="sky" x1="0" y1="0" x2="1" y2="0"><stop offset="0" stop-color="#d6e1e6"/><stop offset=".45" stop-color="#eef0ea"/><stop offset=".62" stop-color="#f4efe4"/><stop offset=".8" stop-color="#e6ecec"/><stop offset="1" stop-color="#cfdce1"/></linearGradient>
<radialGradient id="glow" cx="800" cy="150" r="230" gradientUnits="userSpaceOnUse"><stop offset="0" stop-color="#fbeedd"/><stop offset="1" stop-color="#fbeedd" stop-opacity="0"/></radialGradient>
<linearGradient id="m1" x1="290" y1="150" x2="350" y2="500" gradientUnits="userSpaceOnUse"><stop offset="0" stop-color="#f3e2b6"/><stop offset=".3" stop-color="#cdb183"/><stop offset=".65" stop-color="#a48864"/><stop offset="1" stop-color="#735033"/></linearGradient>
<linearGradient id="m2" x1="860" y1="140" x2="900" y2="420" gradientUnits="userSpaceOnUse"><stop offset="0" stop-color="#b89c70"/><stop offset=".4" stop-color="#9a7c56"/><stop offset="1" stop-color="#6e4d30"/></linearGradient>
<linearGradient id="dome" x1="0" y1="610" x2="0" y2="760" gradientUnits="userSpaceOnUse"><stop offset="0" stop-color="#fbefc6"/><stop offset=".55" stop-color="#efe9d6"/><stop offset="1" stop-color="#d3dee2"/></linearGradient>
<linearGradient id="arch" x1="0" y1="560" x2="0" y2="740" gradientUnits="userSpaceOnUse"><stop offset="0" stop-color="#f6e9c4"/><stop offset=".5" stop-color="#f4efe6"/><stop offset="1" stop-color="#dfe6e8"/></linearGradient>
<linearGradient id="gbot" x1="0" y1="0" x2="1" y2="0"><stop offset="0" stop-color="#5e3a20"/><stop offset=".12" stop-color="#8a6236"/><stop offset="1" stop-color="#7c5a30"/></linearGradient>
<linearGradient id="fadeg" x1="590" y1="0" x2="760" y2="0" gradientUnits="userSpaceOnUse"><stop offset="0" stop-color="#000"/><stop offset="1" stop-color="#fff"/></linearGradient><mask id="fade" maskUnits="userSpaceOnUse" x="0" y="0" width="1273" height="899"><rect width="1273" height="899" fill="url(#fadeg)"/></mask>
<filter id="ab"><feGaussianBlur stdDeviation="7"/></filter>
</defs>
<rect width="1273" height="899" fill="url(#sky)"/>
<rect width="1273" height="899" fill="url(#glow)"/>

<path d="M405 0 L440 0 Q450 14 462 24 L520 14 Q640 40 672 140 Q690 200 668 250 L640 240 Q660 180 640 120 Q600 40 500 22 L425 30 Q412 14 405 0Z" fill="#f8d56f"/>
<path d="M0 282 L95 255 Q160 232 190 215 Q215 200 235 162 Q245 150 262 151 L320 156 Q345 158 360 162 L430 192 Q470 210 500 215 L560 222 Q590 228 610 237 L636 232 Q660 215 686 200 L761 172 Q790 160 816 150 Q835 144 851 145 Q880 145 906 150 Q945 160 976 172 L1036 200 L1126 232 L1201 262 L1273 290 L1273 560 L0 560Z" fill="url(#m1)"/>
<path d="M560 260 L636 232 Q660 215 686 200 L761 172 Q790 160 816 150 Q835 144 851 145 Q880 145 906 150 Q945 160 976 172 L1036 200 L1126 232 L1201 262 L1273 290 L1273 480 L560 480Z" fill="url(#m2)" mask="url(#fade)"/>
<path d="M640 238 L668 226 Q700 250 690 300 L660 300 Q668 262 640 238Z" fill="#c9a25a" opacity=".55"/>
<path d="M0 90 L25 86 Q30 30 70 0 L410 0 L425 30 Q470 12 520 22 Q600 40 640 120 Q660 180 648 236 L610 237 Q590 228 560 222 L500 215 Q470 210 430 192 L360 162 Q345 158 320 156 L262 151 Q245 150 235 162 Q215 200 190 215 Q160 232 95 255 L0 282Z" fill="#fff"/>
<path d="M921 149 Q960 138 1016 144 Q1030 110 1060 95 Q1110 70 1176 74 Q1230 84 1260 120 L1273 135 L1273 290 L1201 262 L1126 232 L1036 200 L976 172 Q945 160 921 149Z" fill="#fff"/>
<path d="M100 118 Q90 100 108 88 Q125 80 138 86 Q150 66 178 70 Q198 74 204 92 Q216 98 210 114 Q205 120 195 118Z" fill="#8f6a34"/>
<path d="M136 125 Q128 112 142 104 Q152 100 160 104 Q170 92 186 96 Q198 100 200 110 Q212 114 208 125Z" fill="#d3dee3"/>
<path d="M240 88 Q236 78 248 76 Q254 66 268 70 Q276 72 278 80 Q288 82 284 88Z" fill="#d3dee3"/>
<path d="M718 146 Q712 132 728 130 Q736 122 750 126 Q760 130 760 140 L764 146Z" fill="#fff"/>
<path d="M736 154 Q730 146 738 144 L760 144 Q762 134 770 136 Q780 140 780 150 Q780 154 774 154Z" fill="#3d2214"/>
<path d="M1134 342 L1273 290 L1273 899 L880 899 L880 560 Q960 500 1011 450 Q1060 400 1134 342Z" fill="#a07e4c"/>
<path d="M1134 342 L1273 290 L1273 478 L1160 470 L1050 452 L1030 436 Q1080 385 1134 342Z" fill="#6f4e31"/>
<path d="M1066 588 Q1090 560 1110 552 Q1170 545 1200 540 Q1240 525 1262 490 L1273 480 L1273 800 L1000 700Z" fill="#7d5c36"/>
<path d="M0 510 Q20 508 36 518 Q40 470 80 440 Q140 385 220 380 Q260 378 280 380 Q370 388 436 421 L480 434 Q500 390 540 360 Q590 318 660 308 Q740 300 796 334 Q760 370 750 410 Q735 450 731 480 Q690 490 660 520 Q640 540 620 560 L560 590 Q500 610 450 640 L380 615 Q300 610 230 640 Q170 670 140 726 L0 726Z" fill="#fff"/>
<path d="M280 380 Q370 388 436 421 L380 431 Q345 402 280 380Z" fill="#d3dee3"/>
<path d="M0 508 Q20 506 36 518 L0 520Z" fill="#d3dee3"/>
<path d="M328 452 Q360 432 400 424 Q440 419 484 430 L478 441 Q440 432 405 436 Q365 442 328 452Z" fill="#f8d56f"/>
<path d="M600 322 Q650 296 711 295 Q770 298 812 320 L796 336 Q760 312 716 310 Q660 308 600 322Z" fill="#f8d56f"/>
<path d="M796 334 Q811 320 861 290 Q890 278 916 276 L986 276 Q1010 280 1036 290 Q1060 300 1086 315 L1134 342 Q1100 368 1086 380 Q1040 420 1011 450 Q960 500 880 560 L620 560 Q640 540 660 520 Q690 490 731 480 Q735 450 750 410 Q760 370 796 334Z" fill="#cfdbe1"/>
<path d="M950 275 Q1040 276 1100 318 L1136 342 L1122 354 Q1050 300 950 275Z" fill="#fff"/>
<path d="M272 476 Q268 466 280 464 Q290 456 306 458 Q320 458 326 466 Q336 468 332 476Z" fill="#3d2214"/>
<path d="M258 481 Q254 472 266 470 Q276 464 290 466 Q300 468 304 474 Q318 474 316 481Z" fill="#f8d56f"/>
<path d="M1046 500 L1056 450 L1078 405 L1096 362 L1120 348 L1160 336 L1200 330 L1240 325 L1273 318 L1273 490 L1240 480 L1200 500 L1150 490 L1120 512 L1090 520 L1070 500Z" fill="#4e2e19"/>
<path d="M1060.0 430.0 L1061.5 435.4 L1060.7 433.4 L1063.6 445.1 L1061.8 443.2 L1066.1 454.9 L1062.8 452.9 L1068.5 464.6 L1063.8 462.7 L1070.7 474.4 L1064.9 472.4 L1072.3 484.1 L1065.9 482.2 L1076.2 493.9 L1066.9 491.9 L1077.0 503.6 L1068.0 501.7 L1081.3 513.4 L1069.0 511.4 L1063.2 508.0 L1056.8 508.0 L1051.0 511.4 L1039.6 513.4 L1052.0 501.7 L1043.3 503.6 L1053.1 491.9 L1044.8 493.9 L1054.1 482.2 L1047.7 484.1 L1055.1 472.4 L1049.9 474.4 L1056.2 462.7 L1052.1 464.6 L1057.2 452.9 L1053.8 454.9 L1058.2 443.2 L1056.0 445.1 L1059.3 433.4 L1058.4 435.4Z" fill="#4e2e19"/>
<path d="M1082.0 392.0 L1083.7 397.1 L1082.8 395.2 L1084.9 406.4 L1083.4 404.5 L1086.3 415.7 L1084.0 413.8 L1087.5 425.0 L1084.6 423.1 L1089.5 434.2 L1085.2 432.4 L1090.7 443.5 L1085.9 441.7 L1091.8 452.8 L1086.5 451.0 L1092.6 462.1 L1087.1 460.2 L1094.2 471.4 L1087.7 469.5 L1095.9 480.7 L1088.3 478.8 L1097.7 490.0 L1089.0 488.1 L1098.4 499.2 L1089.6 497.4 L1100.8 508.5 L1090.2 506.7 L1101.8 517.8 L1090.8 516.0 L1104.2 527.1 L1091.5 525.2 L1085.4 522.0 L1078.6 522.0 L1072.5 525.2 L1060.9 527.1 L1073.2 516.0 L1063.1 517.8 L1073.8 506.7 L1063.0 508.5 L1074.4 497.4 L1065.3 499.2 L1075.0 488.1 L1067.0 490.0 L1075.7 478.8 L1067.5 480.7 L1076.3 469.5 L1070.1 471.4 L1076.9 460.2 L1070.6 462.1 L1077.5 451.0 L1071.8 452.8 L1078.1 441.7 L1073.8 443.5 L1078.8 432.4 L1075.0 434.2 L1079.4 423.1 L1076.5 425.0 L1080.0 413.8 L1077.3 415.7 L1080.6 404.5 L1078.7 406.4 L1081.2 395.2 L1080.3 397.1Z" fill="#4e2e19"/>
<path d="M1100.0 328.0 L1101.5 333.2 L1100.7 331.3 L1102.7 342.7 L1101.3 340.8 L1104.2 352.1 L1101.8 350.2 L1105.3 361.6 L1102.4 359.7 L1106.7 371.1 L1102.9 369.2 L1107.8 380.5 L1103.5 378.6 L1108.7 390.0 L1104.0 388.1 L1110.3 399.5 L1104.6 397.6 L1111.3 408.9 L1105.1 407.0 L1113.5 418.4 L1105.7 416.5 L1114.2 427.9 L1106.2 426.0 L1115.5 437.3 L1106.8 435.4 L1117.5 446.8 L1107.3 444.9 L1117.0 456.3 L1107.9 454.4 L1119.2 465.7 L1108.4 463.8 L1119.9 475.2 L1109.0 473.3 L1103.2 470.0 L1096.8 470.0 L1091.0 473.3 L1081.4 475.2 L1091.6 463.8 L1081.5 465.7 L1092.1 454.4 L1081.6 456.3 L1092.7 444.9 L1083.3 446.8 L1093.2 435.4 L1085.9 437.3 L1093.8 426.0 L1086.2 427.9 L1094.3 416.5 L1086.7 418.4 L1094.9 407.0 L1088.4 408.9 L1095.4 397.6 L1089.5 399.5 L1096.0 388.1 L1090.5 390.0 L1096.5 378.6 L1092.0 380.5 L1097.1 369.2 L1093.9 371.1 L1097.6 359.7 L1095.0 361.6 L1098.2 350.2 L1096.0 352.1 L1098.7 340.8 L1097.0 342.7 L1099.3 331.3 L1098.3 333.2Z" fill="#4e2e19"/>
<path d="M1110.0 345.0 L1111.3 350.2 L1110.6 348.3 L1112.9 359.8 L1111.3 357.9 L1114.0 369.3 L1111.9 367.4 L1115.9 378.9 L1112.5 377.0 L1117.0 388.4 L1113.2 386.5 L1119.0 398.0 L1113.8 396.1 L1120.4 407.5 L1114.5 405.6 L1121.2 417.1 L1115.1 415.2 L1123.5 426.6 L1115.7 424.7 L1123.4 436.2 L1116.4 434.2 L1125.0 445.7 L1117.0 443.8 L1127.0 455.2 L1117.7 453.3 L1112.7 450.0 L1107.3 450.0 L1102.3 453.3 L1093.7 455.2 L1103.0 443.8 L1095.2 445.7 L1103.6 434.2 L1094.9 436.2 L1104.3 424.7 L1097.5 426.6 L1104.9 415.2 L1099.1 417.1 L1105.5 405.6 L1099.6 407.5 L1106.2 396.1 L1101.5 398.0 L1106.8 386.5 L1103.4 388.4 L1107.5 377.0 L1104.5 378.9 L1108.1 367.4 L1106.0 369.3 L1108.7 357.9 L1107.4 359.8 L1109.4 348.3 L1108.7 350.2Z" fill="#4e2e19"/>
<path d="M1118.0 312.0 L1119.5 317.0 L1118.7 315.2 L1120.7 326.2 L1119.2 324.3 L1122.1 335.3 L1119.8 333.5 L1123.4 344.5 L1120.4 342.6 L1124.6 353.6 L1120.9 351.8 L1125.2 362.7 L1121.5 360.9 L1127.4 371.9 L1122.1 370.1 L1128.7 381.0 L1122.6 379.2 L1129.3 390.2 L1123.2 388.3 L1131.0 399.3 L1123.7 397.5 L1131.1 408.5 L1124.3 406.6 L1132.5 417.6 L1124.9 415.8 L1133.4 426.7 L1125.4 424.9 L1134.8 435.9 L1126.0 434.1 L1136.6 445.0 L1126.5 443.2 L1121.0 440.0 L1115.0 440.0 L1109.5 443.2 L1100.1 445.0 L1110.0 434.1 L1101.6 435.9 L1110.6 424.9 L1101.9 426.7 L1111.1 415.8 L1103.4 417.6 L1111.7 406.6 L1104.9 408.5 L1112.3 397.5 L1106.0 399.3 L1112.8 388.3 L1106.7 390.2 L1113.4 379.2 L1107.2 381.0 L1113.9 370.1 L1108.4 371.9 L1114.5 360.9 L1110.0 362.7 L1115.1 351.8 L1111.5 353.6 L1115.6 342.6 L1112.4 344.5 L1116.2 333.5 L1114.1 335.3 L1116.8 324.3 L1115.4 326.2 L1117.3 315.2 L1116.5 317.0Z" fill="#4e2e19"/>
<path d="M1140.0 338.0 L1141.9 342.9 L1140.8 341.1 L1142.7 351.9 L1141.3 350.1 L1143.9 360.9 L1141.8 359.1 L1144.8 369.9 L1142.3 368.1 L1146.7 378.9 L1142.8 377.1 L1147.4 387.9 L1143.3 386.1 L1148.0 396.9 L1143.8 395.1 L1149.3 405.9 L1144.3 404.1 L1150.2 414.9 L1144.8 413.1 L1152.7 423.9 L1145.3 422.1 L1152.3 432.9 L1145.9 431.1 L1153.1 441.9 L1146.4 440.1 L1156.3 450.9 L1146.9 449.1 L1156.9 459.9 L1147.4 458.1 L1157.2 468.9 L1147.9 467.1 L1159.4 477.9 L1148.4 476.1 L1160.6 486.9 L1148.9 485.1 L1160.0 495.9 L1149.4 494.1 L1163.6 504.9 L1149.9 503.1 L1143.5 500.0 L1136.5 500.0 L1130.1 503.1 L1117.0 504.9 L1130.6 494.1 L1119.7 495.9 L1131.1 485.1 L1120.2 486.9 L1131.6 476.1 L1122.3 477.9 L1132.1 467.1 L1123.1 468.9 L1132.6 458.1 L1122.7 459.9 L1133.1 449.1 L1124.7 450.9 L1133.6 440.1 L1125.8 441.9 L1134.1 431.1 L1126.9 432.9 L1134.7 422.1 L1129.0 423.9 L1135.2 413.1 L1128.7 414.9 L1135.7 404.1 L1130.6 405.9 L1136.2 395.1 L1132.0 396.9 L1136.7 386.1 L1132.7 387.9 L1137.2 377.1 L1133.4 378.9 L1137.7 368.1 L1135.0 369.9 L1138.2 359.1 L1136.1 360.9 L1138.7 350.1 L1137.1 351.9 L1139.2 341.1 L1138.4 342.9Z" fill="#4e2e19"/>
<path d="M1158.0 316.0 L1159.8 321.0 L1158.8 319.2 L1160.9 330.1 L1159.2 328.3 L1161.8 339.2 L1159.7 337.4 L1162.6 348.3 L1160.2 346.5 L1163.8 357.5 L1160.7 355.6 L1165.3 366.6 L1161.2 364.7 L1166.1 375.7 L1161.7 373.9 L1167.9 384.8 L1162.1 383.0 L1168.1 393.9 L1162.6 392.1 L1168.9 403.0 L1163.1 401.2 L1169.9 412.1 L1163.6 410.3 L1172.3 421.2 L1164.1 419.4 L1172.5 430.3 L1164.6 428.5 L1174.3 439.5 L1165.0 437.6 L1175.1 448.6 L1165.5 446.7 L1176.5 457.7 L1166.0 455.9 L1176.8 466.8 L1166.5 465.0 L1178.8 475.9 L1167.0 474.1 L1179.9 485.0 L1167.5 483.2 L1161.4 480.0 L1154.6 480.0 L1148.5 483.2 L1137.5 485.0 L1149.0 474.1 L1139.0 475.9 L1149.5 465.0 L1138.4 466.8 L1150.0 455.9 L1139.1 457.7 L1150.5 446.7 L1142.3 448.6 L1151.0 437.6 L1142.0 439.5 L1151.4 428.5 L1142.7 430.3 L1151.9 419.4 L1144.3 421.2 L1152.4 410.3 L1146.2 412.1 L1152.9 401.2 L1147.1 403.0 L1153.4 392.1 L1147.0 393.9 L1153.9 383.0 L1148.2 384.8 L1154.3 373.9 L1149.3 375.7 L1154.8 364.7 L1151.2 366.6 L1155.3 355.6 L1152.4 357.5 L1155.8 346.5 L1153.2 348.3 L1156.3 337.4 L1154.3 339.2 L1156.8 328.3 L1155.1 330.1 L1157.2 319.2 L1156.2 321.0Z" fill="#4e2e19"/>
<path d="M1176.0 298.0 L1177.6 303.0 L1176.7 301.2 L1178.7 312.0 L1177.2 310.2 L1179.4 321.1 L1177.6 319.3 L1180.3 330.1 L1178.0 328.3 L1181.7 339.2 L1178.5 337.4 L1182.8 348.2 L1178.9 346.4 L1183.6 357.3 L1179.3 355.5 L1184.4 366.3 L1179.8 364.5 L1184.7 375.4 L1180.2 373.6 L1186.5 384.5 L1180.6 382.6 L1188.0 393.5 L1181.1 391.7 L1188.9 402.6 L1181.5 400.7 L1188.6 411.6 L1181.9 409.8 L1189.7 420.7 L1182.4 418.9 L1191.4 429.7 L1182.8 427.9 L1191.9 438.8 L1183.3 437.0 L1194.1 447.8 L1183.7 446.0 L1193.9 456.9 L1184.1 455.1 L1196.2 465.9 L1184.6 464.1 L1197.3 475.0 L1185.0 473.2 L1179.2 470.0 L1172.8 470.0 L1167.0 473.2 L1156.2 475.0 L1167.4 464.1 L1156.7 465.9 L1167.9 455.1 L1158.3 456.9 L1168.3 446.0 L1159.9 447.8 L1168.7 437.0 L1160.5 438.8 L1169.2 427.9 L1161.4 429.7 L1169.6 418.9 L1162.3 420.7 L1170.1 409.8 L1162.1 411.6 L1170.5 400.7 L1163.9 402.6 L1170.9 391.7 L1164.7 393.5 L1171.4 382.6 L1165.0 384.5 L1171.8 373.6 L1167.2 375.4 L1172.2 364.5 L1167.8 366.3 L1172.7 355.5 L1168.1 357.3 L1173.1 346.4 L1169.9 348.2 L1173.5 337.4 L1170.2 339.2 L1174.0 328.3 L1171.7 330.1 L1174.4 319.3 L1172.3 321.1 L1174.8 310.2 L1173.5 312.0 L1175.3 301.2 L1174.3 303.0Z" fill="#4e2e19"/>
<path d="M1196.0 320.0 L1197.8 324.9 L1196.8 323.1 L1198.6 333.9 L1197.2 332.1 L1199.6 342.9 L1197.7 341.1 L1201.0 351.9 L1198.2 350.1 L1201.8 360.9 L1198.6 359.1 L1202.9 369.9 L1199.1 368.1 L1203.9 378.9 L1199.5 377.1 L1205.2 387.9 L1200.0 386.1 L1205.9 396.9 L1200.4 395.1 L1206.5 405.9 L1200.9 404.1 L1207.9 414.9 L1201.3 413.1 L1209.4 423.9 L1201.8 422.1 L1209.8 432.9 L1202.3 431.1 L1210.9 441.9 L1202.7 440.1 L1212.4 450.9 L1203.2 449.1 L1213.0 459.9 L1203.6 458.1 L1215.1 468.9 L1204.1 467.1 L1216.0 477.9 L1204.5 476.1 L1215.3 486.9 L1205.0 485.1 L1218.4 495.9 L1205.4 494.1 L1216.8 504.9 L1205.9 503.1 L1199.5 500.0 L1192.5 500.0 L1186.1 503.1 L1172.9 504.9 L1186.6 494.1 L1174.8 495.9 L1187.0 485.1 L1174.7 486.9 L1187.5 476.1 L1176.5 477.9 L1187.9 467.1 L1178.1 468.9 L1188.4 458.1 L1179.2 459.9 L1188.8 449.1 L1180.0 450.9 L1189.3 440.1 L1180.8 441.9 L1189.7 431.1 L1181.2 432.9 L1190.2 422.1 L1183.0 423.9 L1190.7 413.1 L1183.6 414.9 L1191.1 404.1 L1185.5 405.9 L1191.6 395.1 L1186.7 396.9 L1192.0 386.1 L1187.1 387.9 L1192.5 377.1 L1188.4 378.9 L1192.9 368.1 L1188.9 369.9 L1193.4 359.1 L1190.5 360.9 L1193.8 350.1 L1191.6 351.9 L1194.3 341.1 L1192.2 342.9 L1194.8 332.1 L1193.2 333.9 L1195.2 323.1 L1194.2 324.9Z" fill="#4e2e19"/>
<path d="M1212.0 290.0 L1213.6 294.9 L1212.7 293.1 L1214.4 303.9 L1213.1 302.1 L1215.5 312.9 L1213.5 311.1 L1216.6 321.9 L1214.0 320.1 L1217.5 330.9 L1214.4 329.1 L1217.9 339.9 L1214.8 338.1 L1219.6 348.9 L1215.2 347.1 L1220.6 357.9 L1215.6 356.1 L1220.9 366.9 L1216.0 365.1 L1222.4 375.9 L1216.4 374.1 L1222.7 384.9 L1216.9 383.1 L1223.4 393.9 L1217.3 392.1 L1224.3 402.9 L1217.7 401.1 L1224.6 411.9 L1218.1 410.1 L1226.4 420.9 L1218.5 419.1 L1227.0 429.9 L1218.9 428.1 L1228.4 438.9 L1219.3 437.1 L1230.5 447.9 L1219.8 446.1 L1231.4 456.9 L1220.2 455.1 L1230.4 465.9 L1220.6 464.1 L1232.8 474.9 L1221.0 473.1 L1215.2 470.0 L1208.8 470.0 L1203.0 473.1 L1193.4 474.9 L1203.4 464.1 L1194.1 465.9 L1203.8 455.1 L1193.1 456.9 L1204.2 446.1 L1195.9 447.9 L1204.7 437.1 L1195.4 438.9 L1205.1 428.1 L1197.7 429.9 L1205.5 419.1 L1197.4 420.9 L1205.9 410.1 L1198.0 411.9 L1206.3 401.1 L1199.9 402.9 L1206.7 392.1 L1200.3 393.9 L1207.1 383.1 L1201.7 384.9 L1207.6 374.1 L1201.4 375.9 L1208.0 365.1 L1203.2 366.9 L1208.4 356.1 L1204.3 357.9 L1208.8 347.1 L1204.5 348.9 L1209.2 338.1 L1205.7 339.9 L1209.6 329.1 L1207.0 330.9 L1210.0 320.1 L1207.5 321.9 L1210.5 311.1 L1208.8 312.9 L1210.9 302.1 L1209.6 303.9 L1211.3 293.1 L1210.5 294.9Z" fill="#4e2e19"/>
<path d="M1232.0 314.0 L1233.6 319.1 L1232.8 317.2 L1234.9 328.4 L1233.2 326.5 L1235.6 337.6 L1233.7 335.8 L1237.0 346.9 L1234.1 345.0 L1237.9 356.1 L1234.6 354.3 L1238.3 365.4 L1235.0 363.6 L1239.7 374.7 L1235.5 372.8 L1241.4 383.9 L1236.0 382.1 L1242.3 393.2 L1236.4 391.3 L1243.4 402.5 L1236.9 400.6 L1244.5 411.7 L1237.3 409.9 L1244.6 421.0 L1237.8 419.1 L1246.8 430.3 L1238.2 428.4 L1246.1 439.5 L1238.7 437.7 L1247.3 448.8 L1239.2 446.9 L1248.1 458.0 L1239.6 456.2 L1249.1 467.3 L1240.1 465.5 L1250.4 476.6 L1240.5 474.7 L1251.4 485.8 L1241.0 484.0 L1252.0 495.1 L1241.5 493.2 L1235.4 490.0 L1228.6 490.0 L1222.5 493.2 L1211.0 495.1 L1223.0 484.0 L1211.2 485.8 L1223.5 474.7 L1213.6 476.6 L1223.9 465.5 L1215.3 467.3 L1224.4 456.2 L1216.1 458.0 L1224.8 446.9 L1216.0 448.8 L1225.3 437.7 L1217.6 439.5 L1225.8 428.4 L1218.0 430.3 L1226.2 419.1 L1219.2 421.0 L1226.7 409.9 L1220.9 411.7 L1227.1 400.6 L1221.8 402.5 L1227.6 391.3 L1222.0 393.2 L1228.0 382.1 L1223.8 383.9 L1228.5 372.8 L1224.0 374.7 L1229.0 363.6 L1225.7 365.4 L1229.4 354.3 L1226.2 356.1 L1229.9 345.0 L1227.5 346.9 L1230.3 335.8 L1228.1 337.6 L1230.8 326.5 L1229.3 328.4 L1231.2 317.2 L1230.4 319.1Z" fill="#4e2e19"/>
<path d="M1250.0 298.0 L1251.5 303.0 L1250.7 301.2 L1252.3 312.1 L1251.1 310.3 L1253.5 321.2 L1251.5 319.4 L1254.3 330.3 L1252.0 328.5 L1255.0 339.4 L1252.4 337.6 L1256.1 348.5 L1252.8 346.7 L1257.5 357.6 L1253.2 355.8 L1258.0 366.7 L1253.6 364.9 L1259.6 375.8 L1254.0 374.0 L1260.4 384.9 L1254.4 383.1 L1261.0 394.0 L1254.9 392.2 L1261.5 403.1 L1255.3 401.3 L1261.9 412.2 L1255.7 410.4 L1264.0 421.3 L1256.1 419.5 L1263.7 430.4 L1256.5 428.6 L1266.2 439.5 L1256.9 437.7 L1266.7 448.6 L1257.3 446.8 L1266.6 457.7 L1257.8 455.9 L1268.0 466.8 L1258.2 465.0 L1268.9 475.9 L1258.6 474.1 L1271.4 485.0 L1259.0 483.2 L1253.2 480.0 L1246.8 480.0 L1241.0 483.2 L1230.7 485.0 L1241.4 474.1 L1231.9 475.9 L1241.8 465.0 L1232.4 466.8 L1242.2 455.9 L1233.3 457.7 L1242.7 446.8 L1232.8 448.6 L1243.1 437.7 L1235.6 439.5 L1243.5 428.6 L1236.1 430.4 L1243.9 419.5 L1237.3 421.3 L1244.3 410.4 L1238.2 412.2 L1244.7 401.3 L1238.4 403.1 L1245.1 392.2 L1238.9 394.0 L1245.6 383.1 L1240.4 384.9 L1246.0 374.0 L1240.8 375.8 L1246.4 364.9 L1242.1 366.7 L1246.8 355.8 L1242.9 357.6 L1247.2 346.7 L1243.5 348.5 L1247.6 337.6 L1244.4 339.4 L1248.0 328.5 L1245.8 330.3 L1248.5 319.4 L1246.4 321.2 L1248.9 310.3 L1247.6 312.1 L1249.3 301.2 L1248.4 303.0Z" fill="#4e2e19"/>
<path d="M1266.0 284.0 L1267.6 289.1 L1266.7 287.3 L1268.7 298.4 L1267.1 296.6 L1269.4 307.7 L1267.5 305.9 L1270.3 317.0 L1268.0 315.2 L1271.3 326.3 L1268.4 324.5 L1272.2 335.6 L1268.8 333.8 L1272.9 344.9 L1269.2 343.1 L1273.9 354.2 L1269.6 352.4 L1274.3 363.5 L1270.0 361.7 L1275.5 372.8 L1270.4 371.0 L1276.8 382.1 L1270.9 380.3 L1278.0 391.4 L1271.3 389.6 L1279.4 400.7 L1271.7 398.9 L1279.2 410.0 L1272.1 408.2 L1279.7 419.3 L1272.5 417.5 L1281.7 428.6 L1272.9 426.8 L1283.1 437.9 L1273.3 436.1 L1283.6 447.2 L1273.8 445.4 L1285.0 456.5 L1274.2 454.7 L1285.1 465.8 L1274.6 464.0 L1287.0 475.1 L1275.0 473.3 L1269.2 470.0 L1262.8 470.0 L1257.0 473.3 L1246.0 475.1 L1257.4 464.0 L1248.0 465.8 L1257.8 454.7 L1247.2 456.5 L1258.2 445.4 L1247.7 447.2 L1258.7 436.1 L1250.8 437.9 L1259.1 426.8 L1250.1 428.6 L1259.5 417.5 L1250.5 419.3 L1259.9 408.2 L1252.7 410.0 L1260.3 398.9 L1253.0 400.7 L1260.7 389.6 L1253.8 391.4 L1261.1 380.3 L1255.1 382.1 L1261.6 371.0 L1256.4 372.8 L1262.0 361.7 L1257.7 363.5 L1262.4 352.4 L1258.5 354.2 L1262.8 343.1 L1259.4 344.9 L1263.2 333.8 L1260.1 335.6 L1263.6 324.5 L1260.7 326.3 L1264.0 315.2 L1262.0 317.0 L1264.5 305.9 L1262.7 307.7 L1264.9 296.6 L1263.6 298.4 L1265.3 287.3 L1264.3 289.1Z" fill="#4e2e19"/>
<path d="M1130.0 420.0 L1131.9 425.1 L1130.8 423.2 L1134.2 434.3 L1131.8 432.4 L1136.2 443.5 L1132.7 441.6 L1137.6 452.7 L1133.7 450.8 L1140.1 461.9 L1134.6 460.0 L1143.0 471.1 L1135.6 469.2 L1144.8 480.3 L1136.5 478.4 L1147.1 489.5 L1137.5 487.6 L1147.4 498.7 L1138.4 496.8 L1151.7 507.9 L1139.4 506.0 L1153.1 517.1 L1140.3 515.2 L1133.7 512.0 L1126.3 512.0 L1119.7 515.2 L1107.0 517.1 L1120.6 506.0 L1108.2 507.9 L1121.6 496.8 L1111.3 498.7 L1122.5 487.6 L1113.0 489.5 L1123.5 478.4 L1115.3 480.3 L1124.4 469.2 L1118.3 471.1 L1125.4 460.0 L1120.3 461.9 L1126.3 450.8 L1122.1 452.7 L1127.3 441.6 L1123.8 443.5 L1128.2 432.4 L1126.0 434.3 L1129.2 423.2 L1128.1 425.1Z" fill="#4e2e19"/>
<path d="M1175.0 430.0 L1176.7 435.2 L1175.8 433.3 L1179.3 444.7 L1177.0 442.8 L1181.9 454.2 L1178.2 452.3 L1184.3 463.7 L1179.4 461.8 L1188.3 473.2 L1180.6 471.3 L1189.8 482.7 L1181.8 480.8 L1193.2 492.2 L1183.0 490.3 L1195.7 501.7 L1184.2 499.8 L1196.5 511.2 L1185.3 509.3 L1178.7 506.0 L1171.3 506.0 L1164.7 509.3 L1151.5 511.2 L1165.8 499.8 L1153.8 501.7 L1167.0 490.3 L1157.3 492.2 L1168.2 480.8 L1159.9 482.7 L1169.4 471.3 L1162.1 473.2 L1170.6 461.8 L1164.9 463.7 L1171.8 452.3 L1168.3 454.2 L1173.0 442.8 L1170.4 444.7 L1174.2 433.3 L1173.1 435.2Z" fill="#4e2e19"/>
<path d="M1225.0 420.0 L1226.8 425.2 L1225.8 423.3 L1229.4 434.7 L1227.0 432.8 L1231.6 444.2 L1228.2 442.3 L1234.4 453.7 L1229.4 451.8 L1237.8 463.2 L1230.6 461.3 L1239.6 472.7 L1231.8 470.8 L1242.6 482.2 L1233.0 480.3 L1244.2 491.7 L1234.2 489.8 L1247.0 501.2 L1235.3 499.3 L1228.7 496.0 L1221.3 496.0 L1214.7 499.3 L1200.6 501.2 L1215.8 489.8 L1204.7 491.7 L1217.0 480.3 L1207.2 482.2 L1218.2 470.8 L1209.5 472.7 L1219.4 461.3 L1212.3 463.2 L1220.6 451.8 L1215.9 453.7 L1221.8 442.3 L1217.8 444.2 L1223.0 432.8 L1220.4 434.7 L1224.2 423.3 L1223.3 425.2Z" fill="#4e2e19"/>
<path d="M1262.0 410.0 L1263.7 415.5 L1262.7 413.5 L1265.9 425.5 L1263.8 423.5 L1268.6 435.5 L1264.8 433.5 L1270.2 445.5 L1265.8 443.5 L1273.5 455.5 L1266.9 453.5 L1275.3 465.5 L1267.9 463.5 L1277.5 475.5 L1268.9 473.5 L1278.7 485.5 L1270.0 483.5 L1282.0 495.5 L1271.0 493.5 L1265.2 490.0 L1258.8 490.0 L1253.0 493.5 L1241.0 495.5 L1254.0 483.5 L1243.1 485.5 L1255.1 473.5 L1247.4 475.5 L1256.1 463.5 L1249.5 465.5 L1257.1 453.5 L1251.7 455.5 L1258.2 443.5 L1253.6 445.5 L1259.2 433.5 L1255.5 435.5 L1260.2 423.5 L1258.4 425.5 L1261.3 413.5 L1260.3 415.5Z" fill="#4e2e19"/>
<path d="M882.0 512.0 L882.8 515.5 L882.4 514.2 L884.5 521.8 L883.0 520.6 L885.6 528.1 L883.7 526.9 L887.4 534.5 L884.4 533.2 L888.7 540.8 L885.1 539.6 L890.3 547.1 L885.8 545.9 L892.5 553.5 L886.5 552.2 L883.6 550.0 L880.4 550.0 L877.5 552.2 L872.3 553.5 L878.2 545.9 L874.0 547.1 L878.9 539.6 L875.1 540.8 L879.6 533.2 L877.0 534.5 L880.3 526.9 L878.1 528.1 L881.0 520.6 L879.8 521.8 L881.6 514.2 L881.2 515.5Z" fill="#4e2e19"/>
<path d="M900.0 496.0 L901.0 501.5 L900.4 499.5 L902.6 511.5 L901.3 509.5 L904.8 521.5 L902.1 519.5 L906.3 531.5 L902.9 529.5 L908.2 541.5 L903.7 539.5 L910.3 551.5 L904.6 549.5 L911.9 561.5 L905.4 559.5 L901.9 556.0 L898.1 556.0 L894.6 559.5 L888.3 561.5 L895.4 549.5 L889.1 551.5 L896.3 539.5 L891.8 541.5 L897.1 529.5 L893.1 531.5 L897.9 519.5 L895.1 521.5 L898.7 509.5 L897.1 511.5 L899.6 499.5 L899.1 501.5Z" fill="#4e2e19"/>
<path d="M918.0 484.0 L919.0 489.2 L918.5 487.3 L920.7 498.7 L919.1 496.8 L922.3 508.2 L919.8 506.3 L923.3 517.7 L920.5 515.8 L924.7 527.2 L921.2 525.3 L927.1 536.7 L921.8 534.8 L928.5 546.2 L922.5 544.3 L930.2 555.7 L923.2 553.8 L931.1 565.2 L923.9 563.3 L920.1 560.0 L915.9 560.0 L912.1 563.3 L904.1 565.2 L912.8 553.8 L906.3 555.7 L913.5 544.3 L907.4 546.2 L914.2 534.8 L909.6 536.7 L914.8 525.3 L911.0 527.2 L915.5 515.8 L912.7 517.7 L916.2 506.3 L914.1 508.2 L916.9 496.8 L915.6 498.7 L917.5 487.3 L917.0 489.2Z" fill="#4e2e19"/>
<path d="M935.0 466.0 L936.0 470.9 L935.5 469.1 L937.3 479.9 L936.0 478.1 L938.5 488.9 L936.6 487.1 L939.3 497.9 L937.1 496.1 L940.5 506.9 L937.6 505.1 L941.8 516.0 L938.1 514.1 L943.4 525.0 L938.7 523.1 L944.0 534.0 L939.2 532.1 L945.2 543.0 L939.7 541.1 L946.5 552.0 L940.2 550.1 L947.2 561.0 L940.8 559.1 L949.9 570.0 L941.3 568.1 L937.2 565.0 L932.8 565.0 L928.7 568.1 L921.6 570.0 L929.2 559.1 L922.8 561.0 L929.8 550.1 L923.2 552.0 L930.3 541.1 L924.3 543.0 L930.8 532.1 L925.0 534.0 L931.3 523.1 L927.1 525.0 L931.9 514.1 L928.1 516.0 L932.4 505.1 L928.8 506.9 L932.9 496.1 L930.5 497.9 L933.4 487.1 L931.4 488.9 L934.0 478.1 L932.6 479.9 L934.5 469.1 L933.8 470.9Z" fill="#4e2e19"/>
<path d="M955.0 470.0 L956.1 475.4 L955.5 473.4 L957.6 485.2 L956.1 483.2 L958.5 495.0 L956.7 493.0 L959.7 504.8 L957.2 502.8 L960.9 514.6 L957.8 512.6 L962.3 524.4 L958.4 522.4 L964.4 534.2 L959.0 532.2 L965.0 544.0 L959.6 542.0 L966.5 553.8 L960.1 551.8 L967.4 563.6 L960.7 561.6 L968.5 573.4 L961.3 571.4 L957.2 568.0 L952.8 568.0 L948.7 571.4 L941.9 573.4 L949.3 561.6 L942.5 563.6 L949.9 551.8 L943.7 553.8 L950.4 542.0 L944.5 544.0 L951.0 532.2 L946.1 534.2 L951.6 522.4 L947.7 524.4 L952.2 512.6 L948.9 514.6 L952.8 502.8 L950.2 504.8 L953.3 493.0 L951.3 495.0 L953.9 483.2 L952.4 485.2 L954.5 473.4 L953.9 475.4Z" fill="#4e2e19"/>
<path d="M972.0 446.0 L973.2 450.9 L972.6 449.1 L974.4 459.9 L973.0 458.1 L975.2 468.9 L973.5 467.1 L976.3 477.9 L974.0 476.1 L977.4 486.9 L974.5 485.1 L978.9 495.9 L974.9 494.1 L979.0 504.9 L975.4 503.1 L980.9 514.0 L975.9 512.1 L981.7 523.0 L976.4 521.1 L981.9 532.0 L976.8 530.1 L984.5 541.0 L977.3 539.1 L985.5 550.0 L977.8 548.1 L985.4 559.0 L978.3 557.1 L986.2 568.0 L978.7 566.1 L988.4 577.0 L979.2 575.1 L974.6 572.0 L969.4 572.0 L964.8 575.1 L955.9 577.0 L965.3 566.1 L957.9 568.0 L965.7 557.1 L957.1 559.0 L966.2 548.1 L958.5 550.0 L966.7 539.1 L960.4 541.0 L967.2 530.1 L961.1 532.0 L967.6 521.1 L961.7 523.0 L968.1 512.1 L964.0 514.0 L968.6 503.1 L964.0 504.9 L969.1 494.1 L965.0 495.9 L969.5 485.1 L966.6 486.9 L970.0 476.1 L967.7 477.9 L970.5 467.1 L968.4 468.9 L971.0 458.1 L969.7 459.9 L971.4 449.1 L970.6 450.9Z" fill="#4e2e19"/>
<path d="M992.0 460.0 L993.4 465.3 L992.6 463.4 L994.8 474.9 L993.2 472.9 L996.0 484.4 L993.8 482.5 L997.5 494.0 L994.4 492.1 L999.0 503.6 L995.0 501.7 L999.6 513.2 L995.5 511.3 L1000.8 522.8 L996.1 520.9 L1002.8 532.4 L996.7 530.4 L1003.0 541.9 L997.3 540.0 L1005.3 551.5 L997.9 549.6 L1005.8 561.1 L998.5 559.2 L1006.5 570.7 L999.1 568.8 L1008.9 580.3 L999.6 578.4 L994.7 575.0 L989.3 575.0 L984.4 578.4 L975.5 580.3 L984.9 568.8 L976.1 570.7 L985.5 559.2 L977.8 561.1 L986.1 549.6 L978.9 551.5 L986.7 540.0 L980.9 541.9 L987.3 530.4 L981.3 532.4 L987.9 520.9 L983.3 522.8 L988.5 511.3 L984.0 513.2 L989.0 501.7 L985.7 503.6 L989.6 492.1 L987.1 494.0 L990.2 482.5 L988.1 484.4 L990.8 472.9 L989.3 474.9 L991.4 463.4 L990.5 465.3Z" fill="#4e2e19"/>
<path d="M1008.0 480.0 L1009.2 485.1 L1008.5 483.2 L1010.6 494.3 L1009.2 492.4 L1011.8 503.5 L1009.8 501.6 L1013.5 512.7 L1010.4 510.8 L1014.2 521.9 L1011.0 520.0 L1016.3 531.1 L1011.6 529.2 L1017.1 540.3 L1012.3 538.4 L1019.6 549.5 L1012.9 547.6 L1019.4 558.7 L1013.5 556.8 L1021.5 567.9 L1014.1 566.0 L1022.3 577.1 L1014.8 575.2 L1010.4 572.0 L1005.6 572.0 L1001.2 575.2 L992.6 577.1 L1001.9 566.0 L994.7 567.9 L1002.5 556.8 L996.3 558.7 L1003.1 547.6 L996.9 549.5 L1003.7 538.4 L998.6 540.3 L1004.4 529.2 L999.9 531.1 L1005.0 520.0 L1001.5 521.9 L1005.6 510.8 L1002.3 512.7 L1006.2 501.6 L1004.2 503.5 L1006.8 492.4 L1005.3 494.3 L1007.5 483.2 L1006.7 485.1Z" fill="#4e2e19"/>
<path d="M826.0 536.0 L826.5 537.1 L826.2 536.7 L827.3 539.1 L826.6 538.7 L828.3 541.1 L827.0 540.7 L829.1 543.1 L827.5 542.7 L830.3 545.1 L827.9 544.7 L831.4 547.1 L828.3 546.7 L831.7 549.1 L828.7 548.7 L827.0 548.0 L825.0 548.0 L823.3 548.7 L820.0 549.1 L823.7 546.7 L821.1 547.1 L824.1 544.7 L822.0 545.1 L824.5 542.7 L822.6 543.1 L825.0 540.7 L823.5 541.1 L825.4 538.7 L824.6 539.1 L825.8 536.7 L825.5 537.1Z" fill="#4e2e19"/>
<path d="M440 640 Q500 600 560 582 Q640 555 736 545 Q800 540 861 546 Q910 552 956 563 Q1010 575 1066 588 Q1090 598 1100 610 L1100 700 L926 700 Q926 640 886 583 Q850 560 790 562 Q720 566 676 583 Q620 620 600 690 L590 740 L500 700 Q470 660 440 640Z" fill="#7a5830"/>
<path d="M600 700 Q612 640 676 590 Q720 568 790 564 Q850 562 886 586 Q920 630 926 720 L600 740Z" fill="url(#arch)"/>
<path d="M676 590 Q720 568 790 564 Q850 562 886 586 Q900 600 910 625 Q870 580 800 574 Q730 574 676 590Z" fill="#f3dc8e"/>
<path d="M1010 664 L1056 664 L1056 738 L1010 732Z" fill="#efe6d6"/>
<path d="M135 730 Q150 690 180 668 Q225 640 300 616 Q340 606 380 610 Q440 622 480 648 Q520 683 532 712 L540 760 L135 760Z" fill="url(#dome)"/>
<path d="M320 611 Q380 604 440 620 Q500 650 532 712 L540 750 L515 740 Q505 690 470 655 Q420 618 320 611Z" fill="#f3d67c" opacity=".9"/>
<path d="M0 726 L130 724 L245 738 L350 748 Q420 758 475 761 Q560 762 636 743 L726 718 Q800 696 851 692 Q900 696 936 713 L1016 738 L1136 768 L1273 803 L1273 899 L0 899Z" fill="#f7d36d"/>
<path d="M1016 738 Q980 760 960 790 Q930 830 890 840 Q840 846 800 840 L760 850 L1273 899 L1273 803 L1136 768Z" fill="#c9a157"/>
<path d="M100 773 Q170 770 245 781 Q300 790 350 798 Q400 810 450 821 Q520 834 600 822 Q660 812 711 794 Q735 790 731 800 Q720 830 760 845 L800 850 L800 899 L0 899 L0 800Z" fill="#c39b52"/>
<path d="M0 862 Q80 868 140 850 Q200 828 260 830 Q340 836 420 852 Q520 868 640 856 Q700 852 760 852 Q800 856 886 858 Q960 856 1020 840 Q1060 830 1076 808 Q1080 780 1090 760 Q1120 732 1180 730 L1273 760 L1273 899 L0 899Z" fill="url(#gbot)"/>
<path d="M136 804 L210 811 L243 784 L248 899 L120 899Z" fill="#9a7858" opacity=".55"/>
<path d="M0 768 Q20 756 46 760 Q80 764 94 800 Q128 806 128 834 Q128 852 108 856 L0 858Z" fill="#fff" transform="translate(9 -7)"/>
<path d="M0 768 Q20 756 46 760 Q80 764 94 800 Q128 806 128 834 Q128 852 108 858 L0 860Z" fill="#f7d36d"/>
<path d="M134 746 L207 748 L210 811 L135 804Z" fill="#7d5a30"/><path d="M207 748 L243 741 L243 784 L210 811Z" fill="#96703c"/><path d="M125 744 L175 702 L220 752 L207 748Z" fill="#7d5a30"/><path d="M175 702 L202 696 L248 733 L220 752Z" fill="#f4cf6c"/>
<ellipse cx="548" cy="822" rx="62" ry="20" fill="#1e120a" opacity=".85" filter="url(#ab)" transform="rotate(-20 548 822)"/>
<path d="M513.0 676.0 L515.6 681.0 L514.2 679.2 L517.9 690.1 L515.2 688.2 L520.1 699.1 L516.1 697.3 L521.9 708.2 L517.1 706.4 L525.0 717.3 L518.1 715.5 L527.3 726.3 L519.1 724.5 L527.7 735.4 L520.0 733.6 L531.7 744.5 L521.0 742.7 L533.9 753.6 L522.0 751.7 L534.4 762.6 L523.0 760.8 L536.5 771.7 L523.9 769.9 L538.0 780.8 L524.9 779.0 L542.5 789.8 L525.9 788.0 L543.9 798.9 L526.8 797.1 L547.1 808.0 L527.8 806.2 L518.3 803.0 L507.7 803.0 L498.2 806.2 L478.0 808.0 L499.2 797.1 L480.2 798.9 L500.1 788.0 L486.3 789.8 L501.1 779.0 L486.0 780.8 L502.1 769.9 L488.5 771.7 L503.0 760.8 L489.3 762.6 L504.0 751.7 L493.5 753.6 L505.0 742.7 L496.5 744.5 L506.0 733.6 L496.2 735.4 L506.9 724.5 L498.7 726.3 L507.9 715.5 L501.5 717.3 L508.9 706.4 L504.4 708.2 L509.9 697.3 L505.6 699.1 L510.8 688.2 L507.9 690.1 L511.8 679.2 L510.4 681.0Z" fill="#4f3018"/><path d="M508.0 690.1 L512.8 685.5 L511.3 692.3Z M505.8 699.1 L512.7 694.6 L510.6 701.4Z M520.0 699.6 L514.4 696.0 L516.1 701.0Z M503.5 708.2 L512.5 703.7 L509.8 710.5Z M501.3 717.3 L512.4 712.7 L509.0 719.5Z M524.3 717.7 L515.3 714.1 L518.1 719.2Z M499.0 726.3 L512.3 721.8 L508.3 728.6Z M496.8 735.4 L512.2 730.9 L507.5 737.7Z M528.6 735.9 L516.1 732.2 L520.0 737.3Z M494.5 744.5 L512.1 740.0 L506.8 746.8Z M492.2 753.6 L512.0 749.0 L506.0 755.8Z M533.0 754.0 L517.0 750.4 L522.0 755.5Z M490.0 762.6 L511.9 758.1 L505.3 764.9Z M487.7 771.7 L511.8 767.2 L504.5 774.0Z M537.3 772.2 L517.9 768.5 L523.9 773.6Z M485.5 780.8 L511.7 776.2 L503.7 783.0Z M483.2 789.8 L511.6 785.3 L503.0 792.1Z M541.6 790.3 L518.7 786.7 L525.9 791.8Z M481.0 798.9 L511.5 794.4 L502.2 801.2Z M478.7 808.0 L511.4 803.5 L501.5 810.3Z M545.9 808.4 L519.6 804.8 L527.8 809.9Z" fill="#ecc55c"/>
<path d="M575.0 566.0 L579.4 571.0 L577.0 569.1 L581.5 580.0 L577.9 578.1 L582.9 589.0 L578.8 587.1 L585.2 598.0 L579.7 596.1 L587.6 607.0 L580.6 605.1 L588.9 616.0 L581.5 614.1 L592.5 625.0 L582.4 623.1 L593.4 634.0 L583.3 632.1 L594.0 643.0 L584.2 641.1 L597.8 652.0 L585.1 650.1 L598.4 661.0 L586.0 659.1 L602.5 670.0 L586.8 668.1 L605.2 679.0 L587.7 677.1 L606.4 688.0 L588.6 686.1 L607.4 697.0 L589.5 695.1 L608.2 706.0 L590.4 704.1 L608.6 715.0 L591.3 713.1 L613.1 724.0 L592.2 722.1 L613.8 733.0 L593.1 731.1 L615.0 742.0 L594.0 740.1 L621.7 751.0 L594.9 749.1 L619.0 760.0 L595.8 758.1 L621.6 769.0 L596.7 767.1 L623.8 778.0 L597.6 776.1 L627.0 787.0 L598.5 785.1 L628.6 796.0 L599.4 794.1 L631.7 805.0 L600.3 803.1 L584.0 800.0 L566.0 800.0 L549.7 803.1 L517.0 805.0 L550.6 794.1 L522.4 796.0 L551.5 785.1 L523.8 787.0 L552.4 776.1 L522.6 778.0 L553.3 767.1 L526.6 769.0 L554.2 758.1 L531.0 760.0 L555.1 749.1 L531.3 751.0 L556.0 740.1 L531.7 742.0 L556.9 731.1 L533.9 733.0 L557.8 722.1 L535.9 724.0 L558.7 713.1 L538.2 715.0 L559.6 704.1 L542.3 706.0 L560.5 695.1 L544.6 697.0 L561.4 686.1 L546.5 688.0 L562.3 677.1 L547.9 679.0 L563.2 668.1 L549.5 670.0 L564.0 659.1 L550.3 661.0 L564.9 650.1 L552.7 652.0 L565.8 641.1 L555.9 643.0 L566.7 632.1 L556.3 634.0 L567.6 623.1 L557.4 625.0 L568.5 614.1 L561.2 616.0 L569.4 605.1 L561.9 607.0 L570.3 596.1 L564.2 598.0 L571.2 587.1 L566.7 589.0 L572.1 578.1 L568.1 580.0 L573.0 569.1 L570.2 571.0Z" fill="#4f3018"/><path d="M568.3 580.0 L574.7 575.5 L572.7 582.2Z M566.2 589.0 L574.6 584.5 L572.0 591.2Z M583.5 589.4 L576.7 585.8 L578.8 590.8Z M564.1 598.0 L574.5 593.5 L571.3 600.2Z M562.1 607.0 L574.4 602.5 L570.6 609.2Z M587.4 607.4 L577.5 603.8 L580.6 608.8Z M560.0 616.0 L574.3 611.5 L570.0 618.2Z M557.9 625.0 L574.2 620.5 L569.3 627.2Z M591.4 625.4 L578.3 621.8 L582.4 626.8Z M555.9 634.0 L574.1 629.5 L568.6 636.2Z M553.8 643.0 L574.0 638.5 L567.9 645.2Z M595.4 643.4 L579.1 639.8 L584.2 644.8Z M551.7 652.0 L573.9 647.5 L567.2 654.2Z M549.7 661.0 L573.8 656.5 L566.5 663.2Z M599.3 661.4 L579.9 657.8 L586.0 662.8Z M547.6 670.0 L573.7 665.5 L565.8 672.2Z M545.5 679.0 L573.6 674.5 L565.1 681.2Z M603.3 679.4 L580.7 675.8 L587.7 680.8Z M543.5 688.0 L573.5 683.5 L564.4 690.2Z M541.4 697.0 L573.4 692.5 L563.7 699.2Z M607.3 697.4 L581.5 693.8 L589.5 698.8Z M539.4 706.0 L573.3 701.5 L563.0 708.2Z M537.3 715.0 L573.2 710.5 L562.3 717.2Z M611.3 715.4 L582.3 711.8 L591.3 716.8Z M535.2 724.0 L573.1 719.5 L561.6 726.2Z M533.2 733.0 L573.0 728.5 L560.9 735.2Z M615.2 733.4 L583.0 729.8 L593.1 734.8Z M531.1 742.0 L572.9 737.5 L560.2 744.2Z M529.0 751.0 L572.8 746.5 L559.5 753.2Z M619.2 751.4 L583.8 747.8 L594.9 752.8Z M527.0 760.0 L572.7 755.5 L558.8 762.2Z M524.9 769.0 L572.6 764.5 L558.1 771.2Z M623.2 769.4 L584.6 765.8 L596.7 770.8Z M522.8 778.0 L572.5 773.5 L557.4 780.2Z M520.8 787.0 L572.4 782.5 L556.7 789.2Z M627.1 787.4 L585.4 783.8 L598.5 788.8Z M518.7 796.0 L572.3 791.5 L556.1 798.2Z M516.6 805.0 L572.2 800.5 L555.4 807.2Z M631.1 805.4 L586.2 801.8 L600.3 806.8Z" fill="#ecc55c"/>
<path d="M696.0 545.0 L699.8 550.1 L697.8 548.2 L702.7 559.2 L698.9 557.4 L704.0 568.4 L699.9 566.6 L706.4 577.6 L700.9 575.8 L709.9 586.8 L701.9 585.0 L710.8 596.0 L702.9 594.2 L714.2 605.2 L703.9 603.4 L715.8 614.4 L704.9 612.6 L718.1 623.6 L705.9 621.7 L720.3 632.8 L706.9 630.9 L720.6 642.0 L707.9 640.1 L724.6 651.1 L709.0 649.3 L726.3 660.3 L710.0 658.5 L728.8 669.5 L711.0 667.7 L729.9 678.7 L712.0 676.9 L733.3 687.9 L713.0 686.1 L735.4 697.1 L714.0 695.3 L741.4 706.3 L715.0 704.5 L739.8 715.5 L716.0 713.6 L745.4 724.7 L717.0 722.8 L746.9 733.9 L718.0 732.0 L746.7 743.1 L719.1 741.2 L704.2 738.0 L687.8 738.0 L672.9 741.2 L643.0 743.1 L674.0 732.0 L649.9 733.9 L675.0 722.8 L649.3 724.7 L676.0 713.6 L654.8 715.5 L677.0 704.5 L654.9 706.3 L678.0 695.3 L653.7 697.1 L679.0 686.1 L658.8 687.9 L680.0 676.9 L661.6 678.7 L681.0 667.7 L665.1 669.5 L682.0 658.5 L666.9 660.3 L683.0 649.3 L666.6 651.1 L684.1 640.1 L669.0 642.0 L685.1 630.9 L672.1 632.8 L686.1 621.7 L673.2 623.6 L687.1 612.6 L675.2 614.4 L688.1 603.4 L679.3 605.2 L689.1 594.2 L681.7 596.0 L690.1 585.0 L683.2 586.8 L691.1 575.8 L684.9 577.6 L692.1 566.6 L688.0 568.4 L693.1 557.4 L689.2 559.2 L694.2 548.2 L691.8 550.1Z" fill="#4f3018"/><path d="M689.4 559.2 L695.7 554.6 L693.8 561.8Z M687.1 568.4 L695.6 563.8 L693.0 571.0Z M704.6 568.9 L697.7 565.2 L699.9 570.5Z M684.7 577.6 L695.5 573.0 L692.2 580.2Z M682.4 586.8 L695.3 582.2 L691.4 589.3Z M709.1 587.3 L698.6 583.6 L701.9 588.9Z M680.1 596.0 L695.2 591.4 L690.6 598.5Z M677.7 605.2 L695.1 600.6 L689.9 607.7Z M713.6 605.7 L699.5 602.0 L703.9 607.3Z M675.4 614.4 L695.0 609.8 L689.1 616.9Z M673.1 623.6 L694.9 619.0 L688.3 626.1Z M718.1 624.0 L700.4 620.4 L705.9 625.7Z M670.7 632.8 L694.8 628.2 L687.5 635.3Z M668.4 642.0 L694.7 637.4 L686.7 644.5Z M722.5 642.4 L701.3 638.7 L707.9 644.1Z M666.1 651.1 L694.6 646.6 L685.9 653.7Z M663.7 660.3 L694.4 655.7 L685.1 662.9Z M727.0 660.8 L702.2 657.1 L710.0 662.5Z M661.4 669.5 L694.3 664.9 L684.4 672.1Z M659.1 678.7 L694.2 674.1 L683.6 681.2Z M731.5 679.2 L703.1 675.5 L712.0 680.8Z M656.7 687.9 L694.1 683.3 L682.8 690.4Z M654.4 697.1 L694.0 692.5 L682.0 699.6Z M736.0 697.6 L704.0 693.9 L714.0 699.2Z M652.0 706.3 L693.9 701.7 L681.2 708.8Z M649.7 715.5 L693.8 710.9 L680.4 718.0Z M740.5 715.9 L704.9 712.3 L716.0 717.6Z M647.4 724.7 L693.7 720.1 L679.6 727.2Z M645.0 733.9 L693.6 729.3 L678.9 736.4Z M745.0 734.3 L705.8 730.6 L718.0 736.0Z M642.7 743.1 L693.4 738.5 L678.1 745.6Z" fill="#ecc55c"/><path d="M678 565 L691 529 L699 563Z" fill="#f3d070"/><path d="M691 529 L714 565 L699 563 Z" fill="#4f3018"/>
<path d="M748.0 588.0 L750.9 593.2 L749.2 591.3 L752.8 602.6 L750.2 600.7 L755.0 612.0 L751.3 610.2 L757.5 621.5 L752.3 619.6 L759.0 630.9 L753.3 629.0 L762.4 640.3 L754.3 638.4 L764.9 649.8 L755.3 647.9 L765.3 659.2 L756.3 657.3 L770.0 668.6 L757.3 666.7 L769.3 678.0 L758.3 676.2 L772.9 687.5 L759.3 685.6 L774.6 696.9 L760.3 695.0 L777.3 706.3 L761.4 704.4 L777.7 715.8 L762.4 713.9 L780.8 725.2 L763.4 723.3 L753.5 720.0 L742.5 720.0 L732.6 723.3 L712.5 725.2 L733.6 713.9 L714.5 715.8 L734.6 704.4 L718.9 706.3 L735.7 695.0 L722.5 696.9 L736.7 685.6 L724.2 687.5 L737.7 676.2 L724.1 678.0 L738.7 666.7 L728.6 668.6 L739.7 657.3 L729.2 659.2 L740.7 647.9 L732.5 649.8 L741.7 638.4 L733.9 640.3 L742.7 629.0 L736.7 630.9 L743.7 619.6 L738.4 621.5 L744.7 610.2 L740.8 612.0 L745.8 600.7 L742.9 602.6 L746.8 591.3 L745.2 593.2Z" fill="#4f3018"/><path d="M742.8 602.6 L747.8 597.9 L746.3 605.2Z M740.5 612.0 L747.6 607.3 L745.5 614.6Z M755.2 612.5 L749.4 608.7 L751.3 614.2Z M738.2 621.5 L747.5 616.8 L744.7 624.1Z M735.8 630.9 L747.4 626.2 L743.9 633.5Z M759.7 631.4 L750.3 627.6 L753.3 633.1Z M733.5 640.3 L747.3 635.6 L743.1 642.9Z M731.2 649.8 L747.2 645.0 L742.3 652.4Z M764.2 650.2 L751.2 646.5 L755.3 651.9Z M728.8 659.2 L747.1 654.5 L741.5 661.8Z M726.5 668.6 L747.0 663.9 L740.8 671.2Z M768.7 669.1 L752.1 665.3 L757.3 670.8Z M724.1 678.0 L746.9 673.3 L740.0 680.6Z M721.8 687.5 L746.7 682.8 L739.2 690.1Z M773.2 687.9 L753.0 684.2 L759.3 689.6Z M719.5 696.9 L746.6 692.2 L738.4 699.5Z M717.1 706.3 L746.5 701.6 L737.6 708.9Z M777.7 706.8 L753.9 703.0 L761.4 708.5Z M714.8 715.8 L746.4 711.0 L736.8 718.4Z M712.5 725.2 L746.3 720.5 L736.0 727.8Z M782.2 725.7 L754.8 721.9 L763.4 727.4Z" fill="#ecc55c"/>
<path d="M810.0 634.0 L811.6 639.2 L810.7 637.3 L814.2 648.6 L812.0 646.7 L817.0 658.0 L813.2 656.2 L819.2 667.5 L814.4 665.6 L822.6 676.9 L815.7 675.0 L825.6 686.3 L816.9 684.4 L828.3 695.8 L818.1 693.9 L831.6 705.2 L819.3 703.3 L813.3 700.0 L806.7 700.0 L800.7 703.3 L788.9 705.2 L801.9 693.9 L792.9 695.8 L803.1 684.4 L794.5 686.3 L804.3 675.0 L797.1 676.9 L805.6 665.6 L799.9 667.5 L806.8 656.2 L803.4 658.0 L808.0 646.7 L805.9 648.6 L809.3 637.3 L808.3 639.2Z" fill="#4f3018"/><path d="M805.4 648.6 L809.8 643.9 L808.5 651.2Z M802.6 658.0 L809.6 653.3 L807.5 660.6Z M817.1 658.5 L811.4 654.7 L813.2 660.2Z M799.8 667.5 L809.5 662.8 L806.6 670.1Z M796.9 676.9 L809.4 672.2 L805.6 679.5Z M822.6 677.4 L812.5 673.6 L815.7 679.1Z M794.1 686.3 L809.2 681.6 L804.6 688.9Z M791.3 695.8 L809.1 691.0 L803.7 698.4Z M828.0 696.2 L813.6 692.5 L818.1 697.9Z M788.4 705.2 L809.0 700.5 L802.7 707.8Z" fill="#ecc55c"/>
<path d="M834.0 595.0 L836.3 600.0 L835.1 598.2 L839.0 609.2 L836.2 607.4 L841.1 618.4 L837.4 616.6 L843.8 627.6 L838.5 625.8 L846.9 636.8 L839.7 634.9 L849.7 646.0 L840.8 644.1 L851.6 655.1 L842.0 653.3 L855.5 664.3 L843.1 662.5 L856.2 673.5 L844.3 671.7 L858.4 682.7 L845.4 680.9 L860.0 691.9 L846.6 690.0 L863.6 701.0 L847.7 699.2 L838.9 696.0 L829.1 696.0 L820.3 699.2 L802.1 701.0 L821.4 690.0 L807.4 691.9 L822.6 680.9 L809.6 682.7 L823.7 671.7 L811.8 673.5 L824.9 662.5 L814.7 664.3 L826.0 653.3 L815.0 655.1 L827.2 644.1 L818.0 646.0 L828.3 634.9 L822.1 636.8 L829.5 625.8 L823.4 627.6 L830.6 616.6 L826.3 618.4 L831.8 607.4 L829.4 609.2 L832.9 598.2 L831.7 600.0Z" fill="#4f3018"/><path d="M828.8 609.2 L833.8 604.6 L832.3 611.8Z M826.2 618.4 L833.6 613.8 L831.4 620.9Z M841.5 618.9 L835.5 615.2 L837.4 620.5Z M823.5 627.6 L833.5 623.0 L830.5 630.1Z M820.9 636.8 L833.4 632.2 L829.6 639.3Z M846.6 637.2 L836.5 633.6 L839.7 638.9Z M818.2 646.0 L833.2 641.4 L828.7 648.5Z M815.5 655.1 L833.1 650.6 L827.8 657.7Z M851.7 655.6 L837.5 651.9 L842.0 657.3Z M812.9 664.3 L833.0 659.7 L826.9 666.8Z M810.2 673.5 L832.9 668.9 L826.0 676.0Z M856.8 674.0 L838.6 670.3 L844.3 675.6Z M807.6 682.7 L832.7 678.1 L825.1 685.2Z M804.9 691.9 L832.6 687.3 L824.2 694.4Z M861.9 692.3 L839.6 688.7 L846.6 694.0Z M802.3 701.0 L832.5 696.5 L823.3 703.6Z" fill="#ecc55c"/><path d="M816 615 L829 579 L837 613Z" fill="#f3d070"/><path d="M829 579 L852 615 L837 613 Z" fill="#4f3018"/>
<path d="M862.0 620.0 L863.8 625.2 L862.9 623.3 L866.5 634.7 L864.1 632.8 L869.8 644.2 L865.4 642.3 L872.5 653.7 L866.7 651.8 L875.9 663.2 L867.9 661.3 L877.5 672.7 L869.2 670.8 L880.9 682.2 L870.5 680.3 L883.6 691.7 L871.7 689.8 L886.2 701.2 L873.0 699.3 L865.9 696.0 L858.1 696.0 L851.0 699.3 L837.2 701.2 L852.3 689.8 L840.1 691.7 L853.5 680.3 L843.2 682.2 L854.8 670.8 L847.0 672.7 L856.1 661.3 L848.5 663.2 L857.3 651.8 L851.0 653.7 L858.6 642.3 L854.5 644.2 L859.9 632.8 L857.3 634.7 L861.1 623.3 L860.0 625.2Z" fill="#4f3018"/><path d="M857.1 634.7 L861.8 630.0 L860.3 637.3Z M854.1 644.2 L861.6 639.5 L859.4 646.8Z M869.6 644.7 L863.5 640.9 L865.4 646.4Z M851.2 653.7 L861.5 649.0 L858.4 656.3Z M848.3 663.2 L861.3 658.5 L857.4 665.8Z M875.2 663.7 L864.6 659.9 L867.9 665.4Z M845.4 672.7 L861.2 668.0 L856.4 675.3Z M842.5 682.2 L861.1 677.5 L855.4 684.8Z M880.8 682.7 L865.8 678.9 L870.5 684.4Z M839.5 691.7 L860.9 687.0 L854.4 694.3Z M836.6 701.2 L860.8 696.5 L853.5 703.8Z M886.4 701.7 L866.9 697.9 L873.0 703.4Z" fill="#ecc55c"/>
<path d="M902.0 600.0 L904.7 605.0 L903.2 603.2 L907.6 614.1 L904.5 612.3 L909.9 623.2 L905.8 621.4 L913.6 632.3 L907.1 630.5 L916.2 641.4 L908.4 639.5 L917.8 650.5 L909.7 648.6 L922.5 659.5 L910.9 657.7 L924.3 668.6 L912.2 666.8 L926.6 677.7 L913.5 675.9 L932.4 686.8 L914.8 685.0 L932.9 695.9 L916.1 694.1 L938.2 705.0 L917.4 703.2 L907.5 700.0 L896.5 700.0 L886.6 703.2 L867.3 705.0 L887.9 694.1 L869.4 695.9 L889.2 685.0 L873.7 686.8 L890.5 675.9 L877.3 677.7 L891.8 666.8 L879.7 668.6 L893.1 657.7 L881.8 659.5 L894.3 648.6 L885.8 650.5 L895.6 639.5 L888.7 641.4 L896.9 630.5 L891.0 632.3 L898.2 621.4 L893.2 623.2 L899.5 612.3 L896.2 614.1 L900.8 603.2 L899.3 605.0Z" fill="#4f3018"/><path d="M896.2 614.1 L901.7 609.5 L900.0 616.6Z M893.2 623.2 L901.6 618.6 L899.0 625.7Z M910.4 623.6 L903.7 620.0 L905.8 625.3Z M890.2 632.3 L901.4 627.7 L898.0 634.8Z M887.3 641.4 L901.3 636.8 L897.0 643.9Z M916.2 641.8 L904.8 638.2 L908.4 643.5Z M884.3 650.5 L901.1 645.9 L896.0 653.0Z M881.3 659.5 L901.0 655.0 L895.0 662.0Z M921.9 660.0 L906.0 656.4 L910.9 661.6Z M878.4 668.6 L900.9 664.1 L894.0 671.1Z M875.4 677.7 L900.7 673.2 L893.0 680.2Z M927.6 678.2 L907.1 674.5 L913.5 679.8Z M872.4 686.8 L900.6 682.3 L892.0 689.3Z M869.4 695.9 L900.4 691.4 L891.0 698.4Z M933.3 696.4 L908.3 692.7 L916.1 698.0Z M866.5 705.0 L900.3 700.5 L890.0 707.5Z" fill="#ecc55c"/>
<path d="M942.0 548.0 L945.3 553.1 L943.6 551.3 L947.6 562.5 L944.7 560.6 L949.8 571.8 L945.7 569.9 L952.1 581.1 L946.7 579.3 L955.8 590.5 L947.8 588.6 L956.9 599.8 L948.8 597.9 L959.5 609.1 L949.9 607.3 L961.1 618.5 L950.9 616.6 L962.6 627.8 L951.9 625.9 L966.6 637.1 L953.0 635.3 L970.0 646.5 L954.0 644.6 L972.1 655.8 L955.0 653.9 L974.6 665.1 L956.1 663.3 L976.8 674.5 L957.1 672.6 L978.1 683.8 L958.2 681.9 L978.0 693.1 L959.2 691.3 L980.0 702.5 L960.2 700.6 L987.7 711.8 L961.3 709.9 L990.1 721.1 L962.3 719.3 L949.2 716.0 L934.8 716.0 L921.7 719.3 L894.8 721.1 L922.7 709.9 L898.1 711.8 L923.8 700.6 L904.3 702.5 L924.8 691.3 L906.0 693.1 L925.8 681.9 L904.6 683.8 L926.9 672.6 L906.6 674.5 L927.9 663.3 L908.6 665.1 L929.0 653.9 L910.9 655.8 L930.0 644.6 L914.4 646.5 L931.0 635.3 L919.1 637.1 L932.1 625.9 L920.8 627.8 L933.1 616.6 L921.0 618.5 L934.1 607.3 L923.5 609.1 L935.2 597.9 L927.8 599.8 L936.2 588.6 L928.7 590.5 L937.3 579.3 L931.4 581.1 L938.3 569.9 L934.4 571.8 L939.3 560.6 L936.1 562.5 L940.4 551.3 L938.5 553.1Z" fill="#4f3018"/><path d="M935.8 562.5 L941.7 557.8 L939.9 565.0Z M933.4 571.8 L941.6 567.1 L939.1 574.4Z M950.2 572.3 L943.6 568.5 L945.7 573.9Z M931.0 581.1 L941.5 576.5 L938.3 583.7Z M928.6 590.5 L941.4 585.8 L937.5 593.0Z M954.8 590.9 L944.6 587.2 L947.8 592.6Z M926.2 599.8 L941.2 595.1 L936.7 602.4Z M923.8 609.1 L941.1 604.5 L935.9 611.7Z M959.5 609.6 L945.5 605.9 L949.9 611.3Z M921.4 618.5 L941.0 613.8 L935.1 621.0Z M919.0 627.8 L940.9 623.1 L934.3 630.4Z M964.1 628.3 L946.4 624.5 L951.9 629.9Z M916.6 637.1 L940.8 632.5 L933.5 639.7Z M914.2 646.5 L940.7 641.8 L932.7 649.0Z M968.7 646.9 L947.3 643.2 L954.0 648.6Z M911.9 655.8 L940.6 651.1 L931.9 658.4Z M909.5 665.1 L940.4 660.5 L931.0 667.7Z M973.3 665.6 L948.3 661.9 L956.1 667.3Z M907.1 674.5 L940.3 669.8 L930.2 677.0Z M904.7 683.8 L940.2 679.1 L929.4 686.4Z M977.9 684.3 L949.2 680.5 L958.2 685.9Z M902.3 693.1 L940.1 688.5 L928.6 695.7Z M899.9 702.5 L940.0 697.8 L927.8 705.0Z M982.5 702.9 L950.1 699.2 L960.2 704.6Z M897.5 711.8 L939.9 707.1 L927.0 714.4Z M895.1 721.1 L939.7 716.5 L926.2 723.7Z M987.1 721.6 L951.0 717.9 L962.3 723.3Z" fill="#ecc55c"/><path d="M924 568 L937 532 L945 566Z" fill="#f3d070"/><path d="M937 532 L960 568 L945 566 Z" fill="#4f3018"/>
<path d="M990.0 596.0 L993.0 601.3 L991.3 599.4 L995.4 610.8 L992.4 608.9 L997.4 620.4 L993.5 618.5 L1000.7 630.0 L994.6 628.1 L1003.4 639.6 L995.6 637.6 L1005.2 649.1 L996.7 647.2 L1008.5 658.7 L997.8 656.8 L1010.4 668.3 L998.9 666.4 L1011.7 677.8 L1000.0 675.9 L1013.1 687.4 L1001.1 685.5 L1015.5 697.0 L1002.1 695.1 L1018.3 706.5 L1003.2 704.6 L1019.7 716.1 L1004.3 714.2 L1026.1 725.7 L1005.4 723.8 L1028.3 735.3 L1006.5 733.4 L995.9 730.0 L984.1 730.0 L973.5 733.4 L953.6 735.3 L974.6 723.8 L957.6 725.7 L975.7 714.2 L956.3 716.1 L976.8 704.6 L960.7 706.5 L977.9 695.1 L962.5 697.0 L978.9 685.5 L965.2 687.4 L980.0 675.9 L969.1 677.8 L981.1 666.4 L969.0 668.3 L982.2 656.8 L973.3 658.7 L983.3 647.2 L974.6 649.1 L984.4 637.6 L977.5 639.6 L985.4 628.1 L979.3 630.0 L986.5 618.5 L981.9 620.4 L987.6 608.9 L984.6 610.8 L988.7 599.4 L986.9 601.3Z" fill="#4f3018"/><path d="M984.5 610.8 L989.7 606.0 L988.1 613.5Z M982.0 620.4 L989.6 615.6 L987.3 623.0Z M997.7 620.9 L991.5 617.1 L993.5 622.6Z M979.5 630.0 L989.5 625.2 L986.4 632.6Z M976.9 639.6 L989.4 634.8 L985.6 642.2Z M1002.5 640.0 L992.5 636.2 L995.6 641.8Z M974.4 649.1 L989.3 644.3 L984.8 651.8Z M971.9 658.7 L989.1 653.9 L983.9 661.3Z M1007.4 659.2 L993.5 655.3 L997.8 660.9Z M969.4 668.3 L989.0 663.5 L983.1 670.9Z M966.9 677.8 L988.9 673.0 L982.2 680.5Z M1012.2 678.3 L994.4 674.5 L1000.0 680.0Z M964.4 687.4 L988.8 682.6 L981.4 690.0Z M961.9 697.0 L988.7 692.2 L980.6 699.6Z M1017.0 697.5 L995.4 693.6 L1002.1 699.2Z M959.4 706.5 L988.5 701.8 L979.7 709.2Z M956.9 716.1 L988.4 711.3 L978.9 718.8Z M1021.8 716.6 L996.4 712.8 L1004.3 718.3Z M954.4 725.7 L988.3 720.9 L978.0 728.3Z M951.9 735.3 L988.2 730.5 L977.2 737.9Z M1026.6 735.7 L997.3 731.9 L1006.5 737.5Z" fill="#ecc55c"/>
<path d="M1080.0 624.0 L1082.5 629.2 L1081.1 627.3 L1084.7 638.5 L1082.2 636.7 L1086.9 647.9 L1083.2 646.1 L1089.8 657.3 L1084.2 655.4 L1091.7 666.7 L1085.2 664.8 L1093.6 676.1 L1086.2 674.2 L1097.1 685.5 L1087.2 683.6 L1097.5 694.9 L1088.2 693.0 L1101.4 704.2 L1089.2 702.4 L1103.6 713.6 L1090.2 711.7 L1103.9 723.0 L1091.2 721.1 L1107.5 732.4 L1092.3 730.5 L1109.1 741.8 L1093.3 739.9 L1110.6 751.2 L1094.3 749.3 L1085.1 746.0 L1074.9 746.0 L1065.7 749.3 L1049.1 751.2 L1066.7 739.9 L1051.3 741.8 L1067.7 730.5 L1052.3 732.4 L1068.8 721.1 L1055.4 723.0 L1069.8 711.7 L1057.4 713.6 L1070.8 702.4 L1058.9 704.2 L1071.8 693.0 L1062.9 694.9 L1072.8 683.6 L1062.9 685.5 L1073.8 674.2 L1066.1 676.1 L1074.8 664.8 L1068.7 666.7 L1075.8 655.4 L1070.7 657.3 L1076.8 646.1 L1072.4 647.9 L1077.8 636.7 L1075.4 638.5 L1078.9 627.3 L1077.6 629.2Z" fill="#4f3018"/><path d="M1075.0 638.5 L1079.8 633.9 L1078.3 642.8Z M1084.8 639.0 L1081.0 635.3 L1082.2 642.0Z M1072.7 647.9 L1079.6 643.2 L1077.5 652.2Z M1087.0 648.4 L1081.4 644.6 L1083.2 651.4Z M1070.4 657.3 L1079.5 652.6 L1076.8 661.5Z M1089.3 657.8 L1081.9 654.0 L1084.2 660.8Z M1068.0 666.7 L1079.4 662.0 L1076.0 670.9Z M1091.5 667.2 L1082.3 663.4 L1085.2 670.2Z M1065.7 676.1 L1079.3 671.4 L1075.2 680.3Z M1093.8 676.6 L1082.8 672.8 L1086.2 679.6Z M1063.4 685.5 L1079.2 680.8 L1074.4 689.7Z M1096.0 685.9 L1083.2 682.2 L1087.2 688.9Z M1061.0 694.9 L1079.1 690.2 L1073.6 699.1Z M1098.3 695.3 L1083.7 691.6 L1088.2 698.3Z M1058.7 704.2 L1079.0 699.5 L1072.8 708.5Z M1100.5 704.7 L1084.1 701.0 L1089.2 707.7Z M1056.3 713.6 L1078.9 708.9 L1072.0 717.8Z M1102.7 714.1 L1084.5 710.3 L1090.2 717.1Z M1054.0 723.0 L1078.8 718.3 L1071.3 727.2Z M1105.0 723.5 L1085.0 719.7 L1091.2 726.5Z M1051.7 732.4 L1078.6 727.7 L1070.5 736.6Z M1107.2 732.9 L1085.4 729.1 L1092.3 735.9Z M1049.3 741.8 L1078.5 737.1 L1069.7 746.0Z M1109.5 742.2 L1085.9 738.5 L1093.3 745.2Z M1047.0 751.2 L1078.4 746.5 L1068.9 755.4Z M1111.7 751.6 L1086.3 747.9 L1094.3 754.6Z" fill="#ecc55c"/>
<path d="M1124.0 575.0 L1127.2 580.1 L1125.5 578.2 L1129.0 589.3 L1126.4 587.5 L1131.0 598.6 L1127.2 596.7 L1133.0 607.8 L1128.1 606.0 L1135.0 617.1 L1128.9 615.2 L1136.9 626.3 L1129.8 624.5 L1139.4 635.6 L1130.6 633.7 L1140.6 644.8 L1131.5 643.0 L1142.0 654.1 L1132.4 652.2 L1143.1 663.3 L1133.2 661.5 L1146.5 672.6 L1134.1 670.7 L1149.5 681.8 L1134.9 680.0 L1148.4 691.1 L1135.8 689.2 L1153.5 700.3 L1136.7 698.5 L1152.3 709.6 L1137.5 707.7 L1155.2 718.8 L1138.4 717.0 L1158.3 728.1 L1139.2 726.2 L1159.8 737.3 L1140.1 735.5 L1163.1 746.6 L1140.9 744.7 L1166.0 755.8 L1141.8 754.0 L1163.2 765.1 L1142.7 763.2 L1130.6 760.0 L1117.4 760.0 L1105.3 763.2 L1079.9 765.1 L1106.2 754.0 L1082.5 755.8 L1107.1 744.7 L1087.1 746.6 L1107.9 735.5 L1089.7 737.3 L1108.8 726.2 L1091.7 728.1 L1109.6 717.0 L1094.1 718.8 L1110.5 707.7 L1093.2 709.6 L1111.3 698.5 L1097.9 700.3 L1112.2 689.2 L1099.3 691.1 L1113.1 680.0 L1098.0 681.8 L1113.9 670.7 L1101.1 672.6 L1114.8 661.5 L1103.0 663.3 L1115.6 652.2 L1105.7 654.1 L1116.5 643.0 L1106.5 644.8 L1117.4 633.7 L1110.2 635.6 L1118.2 624.5 L1111.0 626.3 L1119.1 615.2 L1113.3 617.1 L1119.9 606.0 L1115.5 607.8 L1120.8 596.7 L1117.0 598.6 L1121.6 587.5 L1118.9 589.3 L1122.5 578.2 L1120.5 580.1Z" fill="#4f3018"/><path d="M1118.6 589.3 L1123.7 584.7 L1122.2 593.5Z M1129.2 589.8 L1125.0 586.1 L1126.4 592.8Z M1116.6 598.6 L1123.6 594.0 L1121.5 602.8Z M1131.1 599.0 L1125.4 595.4 L1127.2 602.0Z M1114.6 607.8 L1123.5 603.2 L1120.8 612.0Z M1133.0 608.3 L1125.8 604.6 L1128.1 611.3Z M1112.6 617.1 L1123.5 612.5 L1120.2 621.2Z M1135.0 617.5 L1126.2 613.9 L1128.9 620.5Z M1110.6 626.3 L1123.4 621.7 L1119.5 630.5Z M1136.9 626.8 L1126.6 623.1 L1129.8 629.8Z M1108.6 635.6 L1123.3 631.0 L1118.8 639.8Z M1138.8 636.0 L1127.0 632.4 L1130.6 639.0Z M1106.7 644.8 L1123.2 640.2 L1118.2 649.0Z M1140.7 645.3 L1127.3 641.6 L1131.5 648.3Z M1104.7 654.1 L1123.1 649.5 L1117.5 658.2Z M1142.6 654.5 L1127.7 650.9 L1132.4 657.5Z M1102.7 663.3 L1123.0 658.7 L1116.8 667.5Z M1144.5 663.8 L1128.1 660.1 L1133.2 666.8Z M1100.7 672.6 L1122.9 668.0 L1116.2 676.8Z M1146.4 673.0 L1128.5 669.4 L1134.1 676.0Z M1098.7 681.8 L1122.8 677.2 L1115.5 686.0Z M1148.3 682.3 L1128.9 678.6 L1134.9 685.3Z M1096.7 691.1 L1122.7 686.5 L1114.8 695.2Z M1150.2 691.5 L1129.2 687.9 L1135.8 694.5Z M1094.8 700.3 L1122.6 695.7 L1114.2 704.5Z M1152.1 700.8 L1129.6 697.1 L1136.7 703.8Z M1092.8 709.6 L1122.5 705.0 L1113.5 713.8Z M1154.0 710.0 L1130.0 706.4 L1137.5 713.0Z M1090.8 718.8 L1122.4 714.2 L1112.8 723.0Z M1155.9 719.3 L1130.4 715.6 L1138.4 722.3Z M1088.8 728.1 L1122.3 723.5 L1112.2 732.2Z M1157.8 728.5 L1130.8 724.9 L1139.2 731.5Z M1086.8 737.3 L1122.2 732.7 L1111.5 741.5Z M1159.8 737.8 L1131.2 734.1 L1140.1 740.8Z M1084.8 746.6 L1122.1 742.0 L1110.8 750.8Z M1161.7 747.0 L1131.5 743.4 L1140.9 750.0Z M1082.8 755.8 L1122.0 751.2 L1110.1 760.0Z M1163.6 756.3 L1131.9 752.6 L1141.8 759.3Z M1080.9 765.1 L1121.9 760.5 L1109.5 769.2Z M1165.5 765.5 L1132.3 761.9 L1142.7 768.5Z" fill="#ecc55c"/><path d="M1106 595 L1119 559 L1127 593Z" fill="#f3d070"/><path d="M1119 559 L1142 595 L1127 593 Z" fill="#4f3018"/>
<path d="M1162.0 610.0 L1164.4 615.0 L1163.1 613.2 L1166.1 624.2 L1163.9 622.4 L1167.9 633.4 L1164.7 631.6 L1169.7 642.6 L1165.5 640.7 L1171.9 651.8 L1166.2 649.9 L1173.3 660.9 L1167.0 659.1 L1174.2 670.1 L1167.8 668.3 L1177.0 679.3 L1168.5 677.4 L1178.2 688.5 L1169.3 686.6 L1178.8 697.6 L1170.1 695.8 L1182.7 706.8 L1170.9 705.0 L1184.0 716.0 L1171.6 714.2 L1184.2 725.2 L1172.4 723.3 L1187.6 734.3 L1173.2 732.5 L1190.2 743.5 L1174.0 741.7 L1191.7 752.7 L1174.7 750.9 L1192.5 761.9 L1175.5 760.0 L1191.9 771.0 L1176.3 769.2 L1167.1 766.0 L1156.9 766.0 L1147.7 769.2 L1129.7 771.0 L1148.5 760.0 L1130.0 761.9 L1149.3 750.9 L1131.9 752.7 L1150.0 741.7 L1135.8 743.5 L1150.8 732.5 L1135.7 734.3 L1151.6 723.3 L1140.2 725.2 L1152.4 714.2 L1141.8 716.0 L1153.1 705.0 L1141.3 706.8 L1153.9 695.8 L1143.3 697.6 L1154.7 686.6 L1146.1 688.5 L1155.5 677.4 L1148.1 679.3 L1156.2 668.3 L1149.2 670.1 L1157.0 659.1 L1150.8 660.9 L1157.8 649.9 L1152.6 651.8 L1158.5 640.7 L1153.9 642.6 L1159.3 631.6 L1156.2 633.4 L1160.1 622.4 L1157.5 624.2 L1160.9 613.2 L1159.6 615.0Z" fill="#4f3018"/><path d="M1157.6 624.2 L1161.8 619.6 L1160.5 628.4Z M1166.3 624.7 L1162.9 621.0 L1163.9 627.6Z M1155.8 633.4 L1161.7 628.8 L1159.9 637.5Z M1168.0 633.9 L1163.2 630.2 L1164.7 636.8Z M1154.0 642.6 L1161.6 638.0 L1159.3 646.7Z M1169.7 643.0 L1163.5 639.4 L1165.5 646.0Z M1152.2 651.8 L1161.5 647.2 L1158.7 655.9Z M1171.4 652.2 L1163.9 648.5 L1166.2 655.1Z M1150.4 660.9 L1161.4 656.3 L1158.1 665.1Z M1173.1 661.4 L1164.2 657.7 L1167.0 664.3Z M1148.6 670.1 L1161.4 665.5 L1157.5 674.2Z M1174.8 670.6 L1164.6 666.9 L1167.8 673.5Z M1146.9 679.3 L1161.3 674.7 L1156.9 683.4Z M1176.6 679.7 L1164.9 676.1 L1168.5 682.7Z M1145.1 688.5 L1161.2 683.9 L1156.3 692.6Z M1178.3 688.9 L1165.3 685.2 L1169.3 691.9Z M1143.3 697.6 L1161.1 693.0 L1155.7 701.8Z M1180.0 698.1 L1165.6 694.4 L1170.1 701.0Z M1141.5 706.8 L1161.0 702.2 L1155.1 710.9Z M1181.7 707.3 L1165.9 703.6 L1170.9 710.2Z M1139.7 716.0 L1160.9 711.4 L1154.5 720.1Z M1183.4 716.4 L1166.3 712.8 L1171.6 719.4Z M1137.9 725.2 L1160.8 720.6 L1153.9 729.3Z M1185.1 725.6 L1166.6 722.0 L1172.4 728.6Z M1136.2 734.3 L1160.8 729.8 L1153.3 738.5Z M1186.9 734.8 L1167.0 731.1 L1173.2 737.7Z M1134.4 743.5 L1160.7 738.9 L1152.7 747.6Z M1188.6 744.0 L1167.3 740.3 L1174.0 746.9Z M1132.6 752.7 L1160.6 748.1 L1152.1 756.8Z M1190.3 753.2 L1167.7 749.5 L1174.7 756.1Z M1130.8 761.9 L1160.5 757.3 L1151.5 766.0Z M1192.0 762.3 L1168.0 758.7 L1175.5 765.3Z M1129.0 771.0 L1160.4 766.5 L1150.9 775.2Z M1193.7 771.5 L1168.3 767.8 L1176.3 774.4Z" fill="#ecc55c"/>
<path d="M1212.0 548.0 L1216.0 553.0 L1213.7 551.2 L1217.2 562.1 L1214.5 560.3 L1218.8 571.3 L1215.3 569.4 L1221.3 580.4 L1216.1 578.6 L1222.9 589.5 L1216.9 587.7 L1223.9 598.6 L1217.7 596.8 L1226.3 607.7 L1218.4 605.9 L1227.6 616.9 L1219.2 615.0 L1229.4 626.0 L1220.0 624.2 L1233.0 635.1 L1220.8 633.3 L1232.0 644.2 L1221.6 642.4 L1236.7 653.3 L1222.4 651.5 L1235.5 662.5 L1223.2 660.6 L1236.6 671.6 L1224.0 669.8 L1239.3 680.7 L1224.7 678.9 L1242.8 689.8 L1225.5 688.0 L1243.5 698.9 L1226.3 697.1 L1247.2 708.1 L1227.1 706.2 L1249.1 717.2 L1227.9 715.4 L1250.5 726.3 L1228.7 724.5 L1250.1 735.4 L1229.5 733.6 L1254.9 744.5 L1230.3 742.7 L1253.2 753.7 L1231.0 751.8 L1255.8 762.8 L1231.8 761.0 L1258.8 771.9 L1232.6 770.1 L1256.5 781.0 L1233.4 779.2 L1219.6 776.0 L1204.4 776.0 L1190.6 779.2 L1166.0 781.0 L1191.4 770.1 L1167.5 771.9 L1192.2 761.0 L1167.8 762.8 L1193.0 751.8 L1167.5 753.7 L1193.7 742.7 L1169.7 744.5 L1194.5 733.6 L1173.1 735.4 L1195.3 724.5 L1173.7 726.3 L1196.1 715.4 L1175.8 717.2 L1196.9 706.2 L1176.2 708.1 L1197.7 697.1 L1181.7 698.9 L1198.5 688.0 L1183.8 689.8 L1199.3 678.9 L1183.7 680.7 L1200.0 669.8 L1185.6 671.6 L1200.8 660.6 L1188.4 662.5 L1201.6 651.5 L1189.0 653.3 L1202.4 642.4 L1190.3 644.2 L1203.2 633.3 L1191.2 635.1 L1204.0 624.2 L1194.6 626.0 L1204.8 615.0 L1196.7 616.9 L1205.6 605.9 L1196.8 607.7 L1206.3 596.8 L1200.3 598.6 L1207.1 587.7 L1201.5 589.5 L1207.9 578.6 L1202.7 580.4 L1208.7 569.4 L1204.8 571.3 L1209.5 560.3 L1206.0 562.1 L1210.3 551.2 L1208.0 553.0Z" fill="#4f3018"/><path d="M1206.2 562.1 L1211.7 557.6 L1210.1 566.2Z M1217.6 562.6 L1213.1 558.9 L1214.5 565.5Z M1204.4 571.3 L1211.6 566.7 L1209.4 575.4Z M1219.3 571.7 L1213.5 568.1 L1215.3 574.6Z M1202.6 580.4 L1211.5 575.8 L1208.8 584.5Z M1221.1 580.8 L1213.8 577.2 L1216.1 583.8Z M1200.8 589.5 L1211.5 584.9 L1208.2 593.6Z M1222.8 590.0 L1214.2 586.3 L1216.9 592.9Z M1198.9 598.6 L1211.4 594.1 L1207.6 602.7Z M1224.6 599.1 L1214.5 595.4 L1217.7 602.0Z M1197.1 607.7 L1211.3 603.2 L1207.0 611.8Z M1226.3 608.2 L1214.9 604.5 L1218.4 611.1Z M1195.3 616.9 L1211.2 612.3 L1206.4 621.0Z M1228.1 617.3 L1215.2 613.7 L1219.2 620.2Z M1193.5 626.0 L1211.1 621.4 L1205.8 630.1Z M1229.8 626.4 L1215.6 622.8 L1220.0 629.4Z M1191.7 635.1 L1211.0 630.5 L1205.2 639.2Z M1231.6 635.6 L1215.9 631.9 L1220.8 638.5Z M1189.8 644.2 L1210.9 639.7 L1204.5 648.3Z M1233.3 644.7 L1216.3 641.0 L1221.6 647.6Z M1188.0 653.3 L1210.8 648.8 L1203.9 657.4Z M1235.1 653.8 L1216.6 650.1 L1222.4 656.7Z M1186.2 662.5 L1210.8 657.9 L1203.3 666.6Z M1236.8 662.9 L1217.0 659.3 L1223.2 665.8Z M1184.4 671.6 L1210.7 667.0 L1202.7 675.7Z M1238.6 672.0 L1217.3 668.4 L1224.0 675.0Z M1182.5 680.7 L1210.6 676.1 L1202.1 684.8Z M1240.3 681.2 L1217.7 677.5 L1224.7 684.1Z M1180.7 689.8 L1210.5 685.3 L1201.5 693.9Z M1242.1 690.3 L1218.0 686.6 L1225.5 693.2Z M1178.9 698.9 L1210.4 694.4 L1200.9 703.0Z M1243.8 699.4 L1218.4 695.7 L1226.3 702.3Z M1177.1 708.1 L1210.3 703.5 L1200.2 712.2Z M1245.6 708.5 L1218.7 704.9 L1227.1 711.4Z M1175.3 717.2 L1210.2 712.6 L1199.6 721.3Z M1247.3 717.6 L1219.1 714.0 L1227.9 720.6Z M1173.4 726.3 L1210.1 721.7 L1199.0 730.4Z M1249.1 726.8 L1219.4 723.1 L1228.7 729.7Z M1171.6 735.4 L1210.1 730.9 L1198.4 739.5Z M1250.8 735.9 L1219.8 732.2 L1229.5 738.8Z M1169.8 744.5 L1210.0 740.0 L1197.8 748.6Z M1252.6 745.0 L1220.1 741.3 L1230.3 747.9Z M1168.0 753.7 L1209.9 749.1 L1197.2 757.8Z M1254.3 754.1 L1220.5 750.5 L1231.0 757.0Z M1166.2 762.8 L1209.8 758.2 L1196.6 766.9Z M1256.1 763.2 L1220.8 759.6 L1231.8 766.2Z M1164.3 771.9 L1209.7 767.3 L1196.0 776.0Z M1257.8 772.4 L1221.2 768.7 L1232.6 775.3Z M1162.5 781.0 L1209.6 776.5 L1195.3 785.1Z M1259.6 781.5 L1221.5 777.8 L1233.4 784.4Z" fill="#ecc55c"/><path d="M1194 568 L1207 532 L1215 566Z" fill="#f3d070"/><path d="M1207 532 L1230 568 L1215 566 Z" fill="#4f3018"/>
<path d="M1256.0 510.0 L1258.8 515.1 L1257.3 513.2 L1260.0 524.3 L1257.8 522.5 L1260.9 533.5 L1258.3 531.7 L1262.4 542.8 L1258.8 540.9 L1263.0 552.0 L1259.3 550.1 L1264.5 561.2 L1259.8 559.4 L1265.4 570.4 L1260.3 568.6 L1266.6 579.7 L1260.7 577.8 L1266.8 588.9 L1261.2 587.0 L1269.6 598.1 L1261.7 596.3 L1269.0 607.3 L1262.2 605.5 L1269.9 616.6 L1262.7 614.7 L1271.8 625.8 L1263.2 623.9 L1272.6 635.0 L1263.7 633.2 L1275.0 644.2 L1264.2 642.4 L1275.7 653.5 L1264.6 651.6 L1274.9 662.7 L1265.1 660.8 L1276.6 671.9 L1265.6 670.1 L1277.8 681.1 L1266.1 679.3 L1280.7 690.4 L1266.6 688.5 L1281.7 699.6 L1267.1 697.7 L1282.2 708.8 L1267.6 707.0 L1284.1 718.0 L1268.1 716.2 L1282.9 727.3 L1268.6 725.4 L1285.3 736.5 L1269.0 734.6 L1288.1 745.7 L1269.5 743.9 L1286.8 754.9 L1270.0 753.1 L1290.3 764.2 L1270.5 762.3 L1291.6 773.4 L1271.0 771.6 L1291.4 782.6 L1271.5 780.8 L1294.0 791.8 L1272.0 790.0 L1290.2 801.1 L1272.5 799.2 L1261.9 796.0 L1250.1 796.0 L1239.5 799.2 L1218.3 801.1 L1240.0 790.0 L1221.5 791.8 L1240.5 780.8 L1222.9 782.6 L1241.0 771.6 L1224.7 773.4 L1241.5 762.3 L1223.2 764.2 L1242.0 753.1 L1225.4 754.9 L1242.5 743.9 L1224.1 745.7 L1243.0 734.6 L1229.0 736.5 L1243.4 725.4 L1228.0 727.3 L1243.9 716.2 L1228.9 718.0 L1244.4 707.0 L1228.8 708.8 L1244.9 697.7 L1233.0 699.6 L1245.4 688.5 L1231.2 690.4 L1245.9 679.3 L1234.0 681.1 L1246.4 670.1 L1233.4 671.9 L1246.9 660.8 L1234.3 662.7 L1247.4 651.6 L1235.9 653.5 L1247.8 642.4 L1238.9 644.2 L1248.3 633.2 L1239.8 635.0 L1248.8 623.9 L1240.0 625.8 L1249.3 614.7 L1241.5 616.6 L1249.8 605.5 L1241.3 607.3 L1250.3 596.3 L1244.0 598.1 L1250.8 587.0 L1244.2 588.9 L1251.3 577.8 L1245.0 579.7 L1251.7 568.6 L1246.6 570.4 L1252.2 559.4 L1247.4 561.2 L1252.7 550.1 L1248.9 552.0 L1253.2 540.9 L1250.0 542.8 L1253.7 531.7 L1250.9 533.5 L1254.2 522.5 L1252.2 524.3 L1254.7 513.2 L1253.1 515.1Z" fill="#4f3018"/><path d="M1251.8 524.3 L1255.8 519.7 L1254.6 528.5Z M1260.0 524.8 L1256.8 521.1 L1257.8 527.7Z M1250.7 533.5 L1255.7 528.9 L1254.2 537.7Z M1261.1 534.0 L1257.0 530.3 L1258.3 536.9Z M1249.6 542.8 L1255.7 538.1 L1253.8 546.9Z M1262.2 543.2 L1257.2 539.5 L1258.8 546.2Z M1248.4 552.0 L1255.6 547.4 L1253.5 556.1Z M1263.3 552.4 L1257.5 548.7 L1259.3 555.4Z M1247.3 561.2 L1255.6 556.6 L1253.1 565.4Z M1264.4 561.7 L1257.7 558.0 L1259.8 564.6Z M1246.2 570.4 L1255.5 565.8 L1252.7 574.6Z M1265.4 570.9 L1257.9 567.2 L1260.3 573.8Z M1245.0 579.7 L1255.5 575.0 L1252.3 583.8Z M1266.5 580.1 L1258.1 576.4 L1260.7 583.1Z M1243.9 588.9 L1255.4 584.3 L1251.9 593.0Z M1267.6 589.3 L1258.3 585.7 L1261.2 592.3Z M1242.8 598.1 L1255.4 593.5 L1251.6 602.3Z M1268.7 598.6 L1258.5 594.9 L1261.7 601.5Z M1241.7 607.3 L1255.3 602.7 L1251.2 611.5Z M1269.8 607.8 L1258.8 604.1 L1262.2 610.7Z M1240.5 616.6 L1255.3 611.9 L1250.8 620.7Z M1270.9 617.0 L1259.0 613.3 L1262.7 620.0Z M1239.4 625.8 L1255.2 621.2 L1250.4 629.9Z M1272.0 626.2 L1259.2 622.6 L1263.2 629.2Z M1238.3 635.0 L1255.1 630.4 L1250.0 639.2Z M1273.0 635.5 L1259.4 631.8 L1263.7 638.4Z M1237.1 644.2 L1255.1 639.6 L1249.7 648.4Z M1274.1 644.7 L1259.6 641.0 L1264.2 647.6Z M1236.0 653.5 L1255.0 648.8 L1249.3 657.6Z M1275.2 653.9 L1259.8 650.2 L1264.6 656.9Z M1234.9 662.7 L1255.0 658.1 L1248.9 666.8Z M1276.3 663.1 L1260.1 659.5 L1265.1 666.1Z M1233.8 671.9 L1254.9 667.3 L1248.5 676.1Z M1277.4 672.4 L1260.3 668.7 L1265.6 675.3Z M1232.6 681.1 L1254.9 676.5 L1248.1 685.3Z M1278.5 681.6 L1260.5 677.9 L1266.1 684.6Z M1231.5 690.4 L1254.8 685.8 L1247.8 694.5Z M1279.6 690.8 L1260.7 687.1 L1266.6 693.8Z M1230.4 699.6 L1254.8 695.0 L1247.4 703.7Z M1280.7 700.1 L1260.9 696.4 L1267.1 703.0Z M1229.2 708.8 L1254.7 704.2 L1247.0 713.0Z M1281.7 709.3 L1261.1 705.6 L1267.6 712.2Z M1228.1 718.0 L1254.7 713.4 L1246.6 722.2Z M1282.8 718.5 L1261.4 714.8 L1268.1 721.5Z M1227.0 727.3 L1254.6 722.7 L1246.2 731.4Z M1283.9 727.7 L1261.6 724.0 L1268.6 730.7Z M1225.8 736.5 L1254.6 731.9 L1245.9 740.6Z M1285.0 737.0 L1261.8 733.3 L1269.0 739.9Z M1224.7 745.7 L1254.5 741.1 L1245.5 749.9Z M1286.1 746.2 L1262.0 742.5 L1269.5 749.1Z M1223.6 754.9 L1254.4 750.3 L1245.1 759.1Z M1287.2 755.4 L1262.2 751.7 L1270.0 758.4Z M1222.5 764.2 L1254.4 759.6 L1244.7 768.3Z M1288.3 764.6 L1262.5 760.9 L1270.5 767.6Z M1221.3 773.4 L1254.3 768.8 L1244.3 777.5Z M1289.3 773.9 L1262.7 770.2 L1271.0 776.8Z M1220.2 782.6 L1254.3 778.0 L1244.0 786.8Z M1290.4 783.1 L1262.9 779.4 L1271.5 786.0Z M1219.1 791.8 L1254.2 787.2 L1243.6 796.0Z M1291.5 792.3 L1263.1 788.6 L1272.0 795.3Z M1217.9 801.1 L1254.2 796.5 L1243.2 805.2Z M1292.6 801.5 L1263.3 797.8 L1272.5 804.5Z" fill="#ecc55c"/>
<path d="M600 760 L636 743 L726 718 Q800 696 851 692 Q900 696 936 713 L1016 738 Q980 760 960 790 Q930 830 890 840 L700 840Z" fill="#f7d36d"/>
<path d="M1016 738 L1136 768 L1273 803 L1273 830 L1180 730 Q1120 732 1090 760 Q1080 780 1076 808 Q1060 830 1020 840 Q960 856 886 858 L800 850 L760 845 Q720 830 731 800 L800 840 Q840 846 890 840 Q930 830 960 790 Q980 760 1016 738Z" fill="#c9a157"/>
<path d="M636 820 Q700 790 725 795 Q735 800 728 815 Q722 835 760 848 L640 858Z" fill="#c39b52"/>
<path d="M759 839 L801 781 L842 839 L791 851Z" fill="#8f6a2c"/><path d="M801 781 L842 839 L791 851Z" fill="#a67e36"/><path d="M762 843 L791 852 L791 872 L764 861Z" fill="#8a6a30"/><path d="M791 852 L836 843 L836 861 L791 872Z" fill="#2a1810"/>
</svg></div>
<!-- bottom bar -->
<svg style="left:54px;top:581px" width="13" height="11" viewBox="0 0 13 11"><rect x=".6" y=".6" width="11.800" height="9.800" rx="1.500" fill="none" stroke="#f0f0f0" stroke-width="1.100"/><path d="M.6 7 H12.400" stroke="#f0f0f0" stroke-width="1"/><path d="M2.500 8.700 H10.500" stroke="#f0f0f0" stroke-width="1.200" stroke-dasharray="1.500 .8"/></svg>
<div style="left:81px;top:576px;width:1px;height:21px;background:#3c3c3c"></div>
<svg style="left:94.500px;top:581.500px" width="12" height="11" viewBox="0 0 12 11"><path d="M6 10 L1.500 5.500 Q.2 3.800 1.300 2 Q2.800 .3 4.700 1.300 L6 2.500 L7.300 1.300 Q9.200 .3 10.700 2 Q11.800 3.800 10.500 5.500Z" fill="none" stroke="#707070" stroke-width="1"/></svg>
<svg style="left:124px;top:580.500px" width="13" height="13" viewBox="0 0 13 13"><circle cx="6.500" cy="6.500" r="5.600" fill="none" stroke="#f0f0f0" stroke-width="1.100"/><path d="M6.500 5.500 V9.500" stroke="#f0f0f0" stroke-width="1.200"/><circle cx="6.500" cy="3.700" r=".8" fill="#f0f0f0"/></svg>
<svg style="left:153px;top:583px" width="9" height="8" viewBox="0 0 9 8"><path d="M.5 7.500 V.5 H4.500 L7.500 3.500 V7.500Z M3 7 V4.500 H8.500" fill="none" stroke="#5e5e5e" stroke-width="1"/></svg>
<div class="t" style="left:169.500px;top:581px;font-size:8.800px;color:#7b7b7b;letter-spacing:-.1px">4961 x 3508</div>
<svg style="left:228.500px;top:583px" width="8" height="8" viewBox="0 0 8 8"><path d="M.5 .5 H6 L7.500 2 V7.500 H.5Z M2 .5 V3 H5.500 V.5 M2 7.500 V5 H6 V7.500" fill="none" stroke="#6a6a6a" stroke-width=".9"/></svg>
<div class="t" style="left:244.500px;top:581px;font-size:8.800px;color:#7b7b7b;letter-spacing:-.1px">1.4 МБ</div>
<svg style="left:505.500px;top:580.500px" width="12" height="12" viewBox="0 0 12 12"><path d="M.6 4 V2 Q.6 .6 2 .6 H4 M8 .6 H10 Q11.400 .6 11.400 2 V4 M11.400 8 V10 Q11.400 11.400 10 11.400 H8 M4 11.400 H2 Q.6 11.400 .6 10 V8" fill="none" stroke="#f0f0f0" stroke-width="1.100"/><circle cx="6" cy="6" r="1.700" fill="none" stroke="#f0f0f0" stroke-width="1"/></svg>
<svg style="left:535.500px;top:580.500px" width="12" height="12" viewBox="0 0 12 12"><path d="M.6 4 V2 Q.6 .6 2 .6 H4 M8 .6 H10 Q11.400 .6 11.400 2 V4 M11.400 8 V10 Q11.400 11.400 10 11.400 H8 M4 11.400 H2 Q.6 11.400 .6 10 V8 M3 4.500 H9 M3 6.200 H9 M3 7.900 H7" fill="none" stroke="#f0f0f0" stroke-width="1.100"/></svg>
<svg style="left:733px;top:582px" width="13" height="10" viewBox="0 0 13 10"><rect x=".6" y=".6" width="11.800" height="8.800" fill="none" stroke="#f0f0f0" stroke-width="1.100"/><circle cx="6.500" cy="5" r="2.600" fill="#f0f0f0"/><path d="M1 1 L3 3 M12 1 L10 3 M1 9 L3 7 M12 9 L10 7" stroke="#f0f0f0" stroke-width=".9"/></svg>
<div style="left:755px;top:576px;width:61px;height:21.500px;background:#2d2d2d;border-radius:3px;border:1px solid #303030"></div>
<div class="t" style="left:763.500px;top:580.500px;font-size:9px;color:#cfcfcf">19 %</div>
<svg style="left:799px;top:585px" width="7" height="5" viewBox="0 0 7 5"><path d="M.8 .8 L3.500 3.600 L6.200 .8" fill="none" stroke="#bdbdbd" stroke-width="1"/></svg>
<svg style="left:825px;top:581px" width="12" height="12" viewBox="0 0 12 12"><circle cx="4.800" cy="4.800" r="3.900" fill="none" stroke="#f0f0f0" stroke-width="1.100"/><path d="M7.700 7.700 L11.300 11.300 M3 4.800 H6.600" stroke="#f0f0f0" stroke-width="1.100"/></svg>
<div style="left:848px;top:585px;width:88px;height:3px;background:#9d9d9d;border-radius:1.500px"></div>
<div style="left:847px;top:585px;width:6px;height:3px;background:#76b9ed;border-radius:1.500px"></div>
<div style="left:849px;top:580px;width:13px;height:13px;border-radius:50%;background:#3a3a3a"></div>
<div style="left:852px;top:583px;width:7px;height:7px;border-radius:50%;background:#76b9ed"></div>
<svg style="left:946px;top:581px" width="12" height="12" viewBox="0 0 12 12"><circle cx="4.800" cy="4.800" r="3.900" fill="none" stroke="#f0f0f0" stroke-width="1.100"/><path d="M7.700 7.700 L11.300 11.300 M3 4.800 H6.600 M4.800 3 V6.600" stroke="#f0f0f0" stroke-width="1.100"/></svg>
<div style="left:972px;top:575px;width:1px;height:23px;background:#3c3c3c"></div>
<svg style="left:987.500px;top:581px" width="11" height="11" viewBox="0 0 11 11"><path d="M1 10 L10 1 M6.500 .6 H10.400 V4.500 M.6 6.500 V10.400 H4.500" fill="none" stroke="#f0f0f0" stroke-width="1.100"/></svg>
<!-- mouse cursor -->
<svg style="left:941px;top:376px" width="10" height="15" viewBox="0 0 10 15"><path d="M.8 .8 V12 L3.500 9.500 L5.500 14 L7.300 13.200 L5.300 8.800 H9Z" fill="#fff" stroke="#111" stroke-width=".8"/></svg>
<!-- AI status bar -->
<div style="left:21px;top:771px;width:1303px;height:11px;background:#4b4b4b"></div>
<div style="left:21px;top:771px;width:40px;height:11px;background:#3f3f3f"></div>
<div class="t" style="left:25px;top:771px;font-size:7px;color:#ddd;line-height:11px">16,67%</div>
<svg style="left:62px;top:774px" width="7" height="5" viewBox="0 0 7 5"><path d="M.8 .8 L3.500 3.600 L6.200 .8" fill="none" stroke="#ddd" stroke-width="1.200"/></svg>
<div style="left:73px;top:771px;width:34px;height:11px;background:#3f3f3f"></div>
<div class="t" style="left:75px;top:771px;font-size:7px;color:#ddd;line-height:11px">0°</div>
<svg style="left:109px;top:774px" width="7" height="5" viewBox="0 0 7 5"><path d="M.8 .8 L3.500 3.600 L6.200 .8" fill="none" stroke="#ddd" stroke-width="1.200"/></svg>
<svg style="left:125px;top:773px" width="24" height="7" viewBox="0 0 24 7"><path d="M1 0 V7 M6 0 V7 L2 3.500Z M16 0 V7 L12 3.500Z" fill="#6d6d6d" stroke="#6d6d6d" stroke-width=".8"/></svg>
<div style="left:148px;top:771px;width:28px;height:11px;background:#3f3f3f"></div>
<div class="t" style="left:150px;top:771px;font-size:7px;color:#eee;line-height:11px;font-weight:bold">1</div>
<svg style="left:177px;top:774px" width="7" height="5" viewBox="0 0 7 5"><path d="M.8 .8 L3.500 3.600 L6.200 .8" fill="none" stroke="#ddd" stroke-width="1.200"/></svg>
<svg style="left:192px;top:773px" width="24" height="7" viewBox="0 0 24 7"><path d="M2 0 V7 L6 3.500Z M12 0 V7 L16 3.500Z M17.500 0 V7" fill="#6d6d6d" stroke="#6d6d6d" stroke-width=".8"/></svg>
<div class="t" style="left:268px;top:771.500px;font-size:6.500px;color:#bdbdbd;line-height:11px">Виділення</div>
<svg style="left:355px;top:772.500px" width="5" height="7" viewBox="0 0 5 7"><path d="M.5 0 V7 L4.500 3.500Z" fill="#e4e4e4"/></svg>
<svg style="left:368px;top:772.500px" width="5" height="7" viewBox="0 0 5 7"><path d="M4 .8 L1.200 3.500 L4 6.200" fill="none" stroke="#aaa" stroke-width="1"/></svg>
<div style="left:376px;top:771px;width:911px;height:11px;background:#585858"></div>
<div style="left:809px;top:772px;width:19px;height:9px;border-radius:4.500px;background:#6c6c6c"></div>
<svg style="left:1278px;top:772.500px" width="5" height="7" viewBox="0 0 5 7"><path d="M1 .8 L3.800 3.500 L1 6.200" fill="none" stroke="#999" stroke-width="1"/></svg>
<!-- WINDOWS taskbar -->
<div style="left:21px;top:782px;width:1303px;height:28px;background:linear-gradient(90deg,#c6ecdc 0%,#c6ecdc 53.300%,#efdcdc 56%,#f3e3e2 80%,#f2ebd6 88%,#f0f0a8 93.500%,#e9ee80 100%)"></div>
<svg style="left:30px;top:789px" width="12" height="12" viewBox="0 0 12 12"><path d="M0 1.700 L5 1 V5.700 H0Z M5.700 .9 L12 0 V5.700 H5.700Z M0 6.400 H5 V11.100 L0 10.400Z M5.700 6.400 H12 V12 L5.700 11.200Z" fill="#111"/></svg>
<div style="left:53px;top:782px;width:195px;height:27px;background:#fff"></div>
<svg style="left:60px;top:789px" width="12" height="12" viewBox="0 0 12 12"><circle cx="7.200" cy="4.800" r="3.700" fill="none" stroke="#222" stroke-width="1.200"/><path d="M4.500 7.500 L.8 11.200" stroke="#222" stroke-width="1.300"/></svg>
<div class="t" style="left:80px;top:789px;font-size:10px;color:#2a2a2a">Пошук</div>
<svg style="left:198px;top:784px" width="46" height="22" viewBox="0 0 46 22"><path d="M18 1 Q19 9 27 11 Q19 13 18 21 Q17 13 9 11 Q17 9 18 1Z" fill="#f7b71d"/><path d="M33 9 Q33.500 13 37.500 14 Q33.500 15 33 19 Q32.500 15 28.500 14 Q32.500 13 33 9Z" fill="#f7b71d"/><path d="M5 12 Q5.400 15 8.500 15.500 Q5.400 16 5 19 Q4.600 16 1.500 15.500 Q4.600 15 5 12Z" fill="#2b8fe8"/><circle cx="29" cy="4" r="1.200" fill="#e8502a"/><circle cx="42" cy="18" r="1.200" fill="#8bc34a"/></svg>
<svg style="left:257px;top:789px" width="14" height="12" viewBox="0 0 14 12"><rect x="2.500" y="2" width="7.500" height="8" fill="none" stroke="#222" stroke-width="1.200"/><path d="M0 1 V3.500 M0 8.500 V11 M12.500 2 V10 M12.500 .5 V1" stroke="#222" stroke-width="1.200"/><path d="M1 .6 H4 M1 11.400 H4" stroke="#222" stroke-width="1"/></svg>
<svg style="left:290px;top:787px" width="18" height="16" viewBox="0 0 18 16"><path d="M5 1 H11 L13 7 H7Z" fill="#3aa0f0"/><path d="M11 1 Q15 1 16 5 L17.500 10 Q17.500 15 13 15 H11 L14 7Z" fill="#f25c9a"/><path d="M13 15 H7 L5 9 H11Z" fill="#f8b13c"/><path d="M7 15 Q3 15 2 11 L.5 6 Q.5 1 5 1 L8 8 L4 9Z" fill="#3fc4a0"/><ellipse cx="9" cy="8" rx="3" ry="2.800" fill="#8a6ee8"/></svg>
<svg style="left:323.500px;top:787px" width="17" height="17" viewBox="0 0 17 17"><circle cx="8.500" cy="8.500" r="8" fill="#1480d8"/><path d="M1 10 Q1 3 9 2.500 Q16 3 16 9 Q16 11.500 12.500 11.500 Q10 11.500 10.500 9.500 Q11 7 8 7 Q4 7.500 4.500 12 Q5 15 9 16.200 Q2 16 1 10Z" fill="#5de0a0"/><path d="M4.500 12 Q4 8 8 7 Q5 8.500 6 12.500 Q7 15.500 11 15.800 Q6 17 4.500 12Z" fill="#0c59a8"/></svg>
<svg style="left:357px;top:788px" width="17" height="14" viewBox="0 0 17 14"><path d="M.5 2 Q.5 1 1.500 1 H6 L7.500 2.500 H15.500 Q16.500 2.500 16.500 3.500 V12 Q16.500 13 15.500 13 H1.500 Q.5 13 .5 12Z" fill="#f8c13a"/><rect x="1.500" y="4.500" width="14" height="8.500" fill="#fbd866"/><rect x="5" y="9" width="7" height="4" fill="#3a8ee6"/><rect x="7.500" y="11" width="2" height="2" fill="#fbd866"/></svg>
<div style="left:356px;top:806.500px;width:19px;height:2px;background:#2a8ae0"></div>
<svg style="left:390px;top:787px" width="17" height="17" viewBox="0 0 17 17"><path d="M1 16 L2.200 11.800 Q.8 9.500 1.200 7 Q2.200 1.500 8.500 1 Q15.500 1.500 16 8.500 Q15.500 15.500 8.500 16 Q6.500 16 4.800 15Z" fill="#fff" stroke="#1a8a3a" stroke-width="1.500"/><path d="M5.500 5 Q6.500 4 7 5.500 L7.500 7 Q7 8 7 8 Q8 10 10 10.500 Q10.800 9.500 11.300 9.800 L12.800 10.700 Q12.800 12.500 10.800 12.500 Q5.500 11.500 5 6.500 Q5 5.500 5.500 5Z" fill="#1a8a3a"/></svg>
<div style="left:424px;top:788px;width:15px;height:14.500px;background:#330000;border-radius:2.500px"></div>
<div class="t" style="left:426.500px;top:789.500px;font-size:9px;font-weight:bold;color:#ff9a00;letter-spacing:-.3px">Ai</div>
<div style="left:422px;top:806.500px;width:19px;height:2px;background:#2a8ae0"></div>
<svg style="left:457px;top:787px" width="18" height="18" viewBox="0 0 18 18"><circle cx="8.500" cy="8.500" r="8" fill="#e33b2e"/><path d="M8.500 8.500 L1.600 4.500 A8 8 0 0 0 5 15.700Z" fill="#2da94f"/><path d="M8.500 8.500 L5 15.700 A8 8 0 0 0 16.500 8.500Z" fill="#fdd23a"/><circle cx="8.500" cy="8.500" r="3.700" fill="#fff"/><circle cx="8.500" cy="8.500" r="2.900" fill="#4285f4"/><circle cx="13.500" cy="13.500" r="4" fill="#5c3a4a"/><circle cx="13.500" cy="12.500" r="1.800" fill="#e6c9a8"/></svg>
<div style="left:456px;top:806.500px;width:19px;height:2px;background:#2a8ae0"></div>
<div style="left:483px;top:782px;width:32px;height:27px;background:#def4ea"></div>
<svg style="left:490.500px;top:787px" width="17" height="16" viewBox="0 0 17 16"><rect x=".5" y=".5" width="16" height="15" rx="2.500" fill="#1f7ae0"/><path d="M.5 13.500 L6 6.500 L10 11 L12.500 9 L16.500 13.500 Q16.500 15.500 14 15.500 H3 Q.5 15.500 .5 13.500Z" fill="#7fd0ff"/><path d="M9.500 1 L16 7.500 V3 Q16 1 14 1Z" fill="#48a6ff"/><circle cx="12.500" cy="4" r="1.300" fill="#fff"/></svg>
<div style="left:485px;top:806.500px;width:28px;height:2px;background:#2a8ae0"></div>
<!-- tray -->
<svg style="left:1026px;top:786px" width="17" height="18" viewBox="0 0 17 18"><path d="M1 9 Q2 2.500 8.500 2.500 Q15 2.500 16 9 Q14 7.500 12.300 9 Q10.500 7.500 8.500 9 Q6.500 7.500 4.700 9 Q3 7.500 1 9Z" fill="#4aa8e8"/><path d="M8.500 9 V15.500 Q8.500 17 7 17 Q5.800 17 5.800 15.800" fill="none" stroke="#555" stroke-width="1"/><path d="M11 .5 L10.500 1.800 M13.500 1 L13 2.300 M15.500 2.500 L15 3.800" stroke="#4aa8e8" stroke-width=".9"/></svg>
<div class="t" style="left:1047.500px;top:789.500px;font-size:9.300px;color:#1c1c1c;letter-spacing:-.1px">Rain today</div>
<svg style="left:1108px;top:792px" width="10" height="7" viewBox="0 0 10 7"><path d="M1 6 L5 1.500 L9 6" fill="none" stroke="#222" stroke-width="1.200"/></svg>
<svg style="left:1125px;top:789px" width="10" height="12" viewBox="0 0 10 12"><rect x="1" y="2" width="6" height="8" rx="1.500" fill="none" stroke="#222" stroke-width="1"/><path d="M7 5 L9.500 3.500 V8.500 L7 7 M2 .6 H6 M2 11.400 H6" stroke="#222" stroke-width=".9" fill="none"/></svg>
<svg style="left:1140px;top:790.500px" width="13" height="9" viewBox="0 0 13 9"><path d="M3.500 8.500 Q.6 8.500 .6 6 Q.6 4 2.800 3.500 Q3.800 .6 6.500 .6 Q9 .6 9.800 3 Q12.400 3 12.400 5.800 Q12.400 8.500 10 8.500Z" fill="#444" stroke="#222" stroke-width=".8"/></svg>
<svg style="left:1157.500px;top:788.500px" width="8" height="13" viewBox="0 0 8 13"><rect x="2" y=".5" width="4" height="7.500" rx="2" fill="#111"/><path d="M.6 6 Q.6 10 4 10 Q7.400 10 7.400 6 M4 10 V12.500 M2 12.500 H6" fill="none" stroke="#111" stroke-width="1"/></svg>
<svg style="left:1172px;top:790.500px" width="14" height="10" viewBox="0 0 14 10"><rect x="3" y="2.500" width="10.500" height="6" fill="#111"/><rect x="4.500" y="4" width="7.500" height="3" fill="#ddd"/><path d="M.5 .5 L4.500 4 M.5 3.500 L3 3.500" stroke="#111" stroke-width="1.200"/></svg>
<svg style="left:1190.500px;top:790px" width="12" height="11" viewBox="0 0 12 11"><path d="M1 10.500 A9.500 9.500 0 0 1 10.500 1 M3.800 10.500 A6.700 6.700 0 0 1 10.500 3.800 M6.600 10.500 A3.900 3.900 0 0 1 10.500 6.600" fill="none" stroke="#444" stroke-width="1"/><circle cx="10" cy="10" r="1.200" fill="#444"/></svg>
<svg style="left:1205.500px;top:789.500px" width="13" height="11" viewBox="0 0 13 11"><path d="M.6 3.800 H2.800 L5.500 1.200 V9.800 L2.800 7.200 H.6Z" fill="none" stroke="#111" stroke-width="1"/><path d="M7.300 3.500 Q8.500 5.500 7.300 7.500 M9 2.200 Q11 5.500 9 8.800 M10.800 1 Q13.400 5.500 10.800 10" fill="none" stroke="#111" stroke-width=".9"/></svg>
<div class="t" style="left:1224.500px;top:790px;font-size:7.800px;color:#1c1c1c;letter-spacing:-.2px">УКР</div>
<div class="t" style="left:1248px;top:782.500px;width:38px;text-align:center;font-size:8px;color:#1c1c1c;letter-spacing:-.2px">9:18</div>
<div class="t" style="left:1238px;top:794.500px;width:58px;text-align:center;font-size:8px;color:#1c1c1c;letter-spacing:-.25px">06.10.2025</div>
<svg style="left:1296px;top:787px" width="18" height="17" viewBox="0 0 18 17"><path d="M1 1 H12 V9.500 H4 L1 12Z" fill="#111"/><path d="M3 3.500 H10 M3 5.500 H10 M3 7.500 H8" stroke="#eee" stroke-width=".8"/><circle cx="12.500" cy="11.500" r="4.300" fill="#d8dc9a" stroke="#555" stroke-width=".6"/></svg>
<div class="t" style="left:1306px;top:793px;font-size:7px;color:#111;font-weight:bold">2</div>
</div>

</div>

<!-- TILES -->
<svg width="0" height="0" style="position:absolute"><defs>
<symbol id="micoff" viewBox="0 0 24 24"><path d="M19 11h-1.7c0 .74-.16 1.43-.43 2.05l1.23 1.23c.56-.98.9-2.09.9-3.28zm-4.02.17c0-.06.02-.11.02-.17V5c0-1.66-1.34-3-3-3S9 3.34 9 5v.18l5.98 5.990zM4.270 3L3 4.270l6.010 6.010V11c0 1.660 1.330 3 2.990 3 .22 0 .44-.03.65-.08l1.660 1.660c-.71.33-1.500.52-2.310.52-2.760 0-5.300-2.100-5.300-5.100H5c0 3.410 2.720 6.230 6 6.720V21h2v-3.280c.91-.13 1.770-.45 2.540-.9L19.730 21 21 19.730 4.270 3z"/></symbol>
</defs></svg>

<!-- row 1 -->
<div class="tile" style="left:1344px;top:77px;width:175px;height:234px;background:radial-gradient(ellipse 120% 100% at 72% 64%,#7a4a3b 0%,#6c3f31 40%,#532c21 80%,#45231a 100%)">
  <div class="av" style="background:#e9e4e0"><svg width="90" height="90" viewBox="0 0 90 90"><defs><filter id="b1"><feGaussianBlur stdDeviation="1.500"/></filter><linearGradient id="pf" x1="0" y1="0" x2="1" y2="0"><stop offset="0" stop-color="#b08a7e"/><stop offset=".6" stop-color="#cfaa9c"/><stop offset="1" stop-color="#dcbcae"/></linearGradient></defs><rect width="90" height="90" fill="#f1edea"/><g filter="url(#b1)"><path d="M18 60 Q14 30 40 14 Q66 6 78 26 Q82 50 74 70 Q66 88 50 94 L24 94Z" fill="url(#pf)"/><path d="M-4 -4 L94 -4 L94 10 Q74 6 60 14 Q50 22 46 36 Q36 44 26 48 Q19 52 17 60 L-4 72Z" fill="#2b2f34"/><path d="M58 14 Q76 12 84 30 Q82 44 80 52 Q78 34 70 26 Q64 20 58 14Z" fill="#5d4d4c" opacity=".75"/><path d="M-4 50 Q10 52 17 60 Q19 74 23 88 L6 84 Q-4 70 -4 50Z" fill="#272b2d"/><ellipse cx="9" cy="43" rx="4.500" ry="6" fill="#9a7a70"/><path d="M40 78 Q46 72 52 80 L56 96 L40 96Z" fill="#d4b0a2"/><path d="M56 84 L66 82 L68 96 L56 96Z" fill="#2a2c30"/><path d="M46 30 Q42 48 46 62 Q48 70 54 76" stroke="#3a2d2f" stroke-width="1.400" fill="none"/><path d="M38 26 Q32 40 34 54" stroke="#4a3a3a" stroke-width="1.200" fill="none"/><path d="M62 33 q5 -2 9 1" stroke="#5a4644" stroke-width="2.200" fill="none"/><path d="M56 46 q2 4 6 3" stroke="#b08a80" stroke-width="2" fill="none"/><path d="M54 59 q6 -3 12 1" stroke="#a87878" stroke-width="2.400" fill="none"/></g><rect x="18" y="-2" width="54" height="8.500" fill="#000"/></svg></div>
  <div class="mic" style="background:#601c08"><svg viewBox="0 0 24 24" fill="#f4ada3"><use href="#micoff"/></svg></div>
  <div class="nm">Поліна Вади...</div>
</div>

<div class="abs" style="left:1531px;top:74px;width:181px;height:240px;border-radius:19px;background:#a8c7fa"></div>
<div class="tile" id="vid" style="left:1534px;top:77px;width:175px;height:234px;background:#5d626d">
<svg style="position:absolute;left:0;top:0" width="175" height="234" viewBox="0 0 175 234"><defs><filter id="vb" x="-5%" y="-5%" width="110%" height="110%"><feGaussianBlur stdDeviation="1.700"/></filter><linearGradient id="vw" x1="0" y1="0" x2="1" y2="1"><stop offset="0" stop-color="#5d626e"/><stop offset="1" stop-color="#505258"/></linearGradient><radialGradient id="vf" cx=".45" cy=".4" r=".7"><stop offset="0" stop-color="#ecdcd4"/><stop offset=".6" stop-color="#d9bfb2"/><stop offset="1" stop-color="#b8978a"/></radialGradient></defs>
<rect width="175" height="234" fill="url(#vw)"/>
<g filter="url(#vb)">
<rect x="-5" y="-5" width="185" height="42" fill="#2a292b"/>
<rect x="26" y="36" width="62" height="6" fill="#2c4a40"/><rect x="27" y="42" width="9" height="6" fill="#27413a"/><rect x="78" y="42" width="9" height="5" fill="#27413a"/>
<rect x="-5" y="52" width="64" height="12" fill="#5c5a3a"/><rect x="-5" y="64" width="58" height="10" fill="#3c3c34"/><rect x="-5" y="74" width="52" height="10" fill="#4a4a46"/><rect x="0" y="66" width="30" height="6" fill="#6a6440"/>
<path d="M40 120 Q34 60 78 46 Q118 42 124 92 Q128 130 118 152 L100 160 L56 150 Q42 140 40 120Z" fill="#cfc8ba"/>
<path d="M52 70 Q70 46 100 52 Q118 62 118 92 L108 84 Q90 70 66 84 Q56 96 54 120 Q46 100 52 70Z" fill="#e4dfd2"/>
<path d="M108 84 Q122 100 118 150 L108 156 Q114 120 108 84Z" fill="#a89f90"/>
<path d="M56 112 Q56 84 82 82 Q108 84 110 112 Q110 140 96 156 Q82 166 68 156 Q56 140 56 112Z" fill="url(#vf)"/>
<path d="M62 106 q8 -4 14 0 M88 106 q8 -4 15 0" stroke="#8a7268" stroke-width="3" fill="none"/>
<path d="M70 138 q10 4 20 -1" stroke="#b0807a" stroke-width="3" fill="none"/>
<path d="M76 112 q-3 12 2 16" stroke="#c9a99c" stroke-width="2" fill="none"/>
<path d="M58 156 L100 158 L104 180 L54 180Z" fill="#c8a696"/>
<path d="M-5 178 Q20 162 48 160 L60 176 L50 240 L-5 240Z" fill="#e2621f"/>
<path d="M100 154 Q140 160 168 178 L180 200 L180 240 L76 240 L94 176Z" fill="#e4671f"/>
<path d="M46 176 Q70 184 96 174 L80 240 L40 240Z" fill="#1b1c26"/>
<path d="M8 196 L30 206 L20 228Z" fill="#c4500f" opacity=".7"/><path d="M96 178 L124 190 L110 204 L92 196Z" fill="#ee7a30" opacity=".8"/>
<path d="M120 200 Q140 210 150 234" stroke="#c9540f" stroke-width="3" fill="none" opacity=".7"/>
</g>
<path d="M44 112 Q44 150 47 172 Q44 200 41 236" stroke="#e8e8ec" stroke-width="1.300" fill="none" opacity=".9"/>
</svg>

  <div class="mic" style="background:#a8c7fa"><svg style="left:0;top:0;width:30px;height:30px" viewBox="0 0 30 30"><rect x="4.800" y="10.200" width="4.400" height="9.600" rx="2.200" fill="#0b3f9e"/><rect x="12.800" y="5.500" width="4.400" height="19" rx="2.200" fill="#0b3f9e"/><rect x="20.800" y="10.200" width="4.400" height="9.600" rx="2.200" fill="#0b3f9e"/></svg></div>
  <div class="nm">Олена Казі...</div>
</div>

<div class="tile" style="left:1724px;top:77px;width:175px;height:234px;background:radial-gradient(ellipse 110% 100% at 50% 55%,#0f7264 0%,#0c6256 45%,#084a41 85%,#063f38 100%)">
  <div class="av" style="background:#00897b">В</div>
  <div class="mic" style="background:#06423a"><svg viewBox="0 0 24 24" fill="#5ee0c6"><use href="#micoff"/></svg></div>
  <div class="nm">Вероніка Ан...</div>
</div>

<!-- row 2 -->
<div class="tile" style="left:1344px;top:326px;width:175px;height:234px;background:radial-gradient(ellipse 105% 95% at 58% 55%,#7f2c91 0%,#732586 40%,#5e1b70 80%,#501560 100%)">
  <div class="av" style="background:#ab47bc">Т</div>
  <div class="mic" style="background:#560a6b"><svg viewBox="0 0 24 24" fill="#f0b0ff"><use href="#micoff"/></svg></div>
  <div class="nm">Тетяна Леон...</div>
</div>

<div class="tile" style="left:1534px;top:326px;width:175px;height:234px;background:radial-gradient(ellipse 105% 95% at 52% 55%,#2f6120 0%,#275419 40%,#1c4112 80%,#17380f 100%)">
  <div class="av" style="background:#33691e">А</div>
  <div class="mic" style="background:#173a0a"><svg viewBox="0 0 24 24" fill="#8fe070"><use href="#micoff"/></svg></div>
  <div class="nm">Ангеліна Ол...</div>
</div>

<div class="tile" style="left:1724px;top:326px;width:175px;height:234px;background:radial-gradient(ellipse 120% 100% at 60% 70%,#74473a 0%,#6a3e30 40%,#553024 80%,#4b281d 100%)">
  <div class="av" style="background:#d9d3ce"><svg width="90" height="90" viewBox="0 0 90 90"><defs><filter id="b2"><feGaussianBlur stdDeviation="1.200"/></filter><linearGradient id="of" x1="0" y1="0" x2="1" y2="0"><stop offset="0" stop-color="#c9937c"/><stop offset=".5" stop-color="#dcae96"/><stop offset="1" stop-color="#e6bea8"/></linearGradient></defs><rect width="90" height="90" fill="#dbd6d1"/><g filter="url(#b2)"><rect x="-4" y="-4" width="34" height="98" fill="#d0cac4"/><path d="M74 58 L94 56 L94 72 L78 72Z" fill="#1c1d20"/><path d="M26 40 Q26 6 52 4 Q76 6 78 34 Q80 50 74 60 L62 64 L40 70 Q30 66 28 54Z" fill="#2e2929"/><path d="M38 34 Q40 16 56 16 Q72 18 73 38 Q74 56 62 68 Q52 72 44 62 Q38 50 38 34Z" fill="url(#of)"/><path d="M34 36 Q38 10 62 14 Q50 20 46 32 Q42 48 42 62 Q34 54 34 36Z" fill="#2e2929"/><path d="M48 64 L66 62 L68 80 L50 84Z" fill="#cf9f88"/><path d="M16 84 Q26 72 46 68 L54 86 L66 66 Q78 64 86 74 L92 94 L10 94Z" fill="#20c070"/><path d="M46 68 L56 92 L40 92Z" fill="#18a860"/><path d="M44 40 q4 -2 8 0 M60 38 q4 -2 8 0" stroke="#4a3430" stroke-width="2" fill="none"/><path d="M50 57 q6 3 12 -1" stroke="#b0605c" stroke-width="2.600" fill="none"/><path d="M56 42 q-3 8 0 10" stroke="#c08a74" stroke-width="1.600" fill="none"/></g></svg></div>
  <div class="mic" style="background:#601c08"><svg viewBox="0 0 24 24" fill="#f4ada3"><use href="#micoff"/></svg></div>
  <div class="nm">Ольга Мико...</div>
</div>

<!-- row 3 -->
<div class="tile" style="left:1344px;top:575px;width:270px;height:234px;background:#36373a">
  <div class="abs" style="left:59px;top:54px;width:80px;height:80px;border-radius:50%;background:#f4511e;text-align:center;line-height:80px;font-size:40px;color:#fff">А</div>
  <div class="abs" style="left:131px;top:51px;width:86px;height:86px;border-radius:50%;background:#36373a"></div>
  <div class="abs" style="left:134px;top:54px;width:80px;height:80px;border-radius:50%;overflow:hidden;background:#e8e2dc"><svg width="80" height="80" viewBox="0 0 80 80"><defs><filter id="b3"><feGaussianBlur stdDeviation="1.500"/></filter></defs><rect width="80" height="80" fill="#f1ede7"/><g filter="url(#b3)"><path d="M-4 14 L14 8 L16 34 L10 60 L24 84 L-4 84Z" fill="#7a746c"/><path d="M-2 30 L14 38 M-2 38 L14 42 M-2 46 L14 46 M0 54 L14 50" stroke="#e6e2dc" stroke-width="1.500"/><path d="M10 60 L30 58 L26 84 L4 84Z" fill="#8e8e8e"/><path d="M46 62 L84 44 L84 84 L36 84Z" fill="#2f3133"/><path d="M62 52 L84 60 M60 56 L80 70 M58 60 L74 78" stroke="#d8d4ce" stroke-width="1.300"/><path d="M12 12 Q22 2 36 6 L30 18 Q20 24 14 22Z" fill="#e9c9a2"/><path d="M42 0 Q50 -2 52 4 L46 5Z" fill="#2a2622"/><path d="M60 14 Q72 16 80 30 L70 34 Q64 24 60 14Z" fill="#e6d3b6"/><ellipse cx="39" cy="25" rx="11" ry="9.500" fill="#eaa0a6"/><ellipse cx="39" cy="21" rx="8" ry="5" fill="#f3b9bd"/><path d="M34 30 q2 4 5 2 M46 30 q-2 4 -6 2" stroke="#c0606c" stroke-width="2.200" fill="none"/><ellipse cx="23" cy="17" rx="4.500" ry="3" fill="#9a9458"/><ellipse cx="64" cy="22" rx="5.500" ry="3.500" fill="#8f8a50"/><path d="M26 58 Q34 46 46 56 L44 74 L30 80Z" fill="#efe9e0"/><path d="M24 50 Q36 56 50 50" stroke="#cfc6bc" stroke-width="2" fill="none"/><path d="M34 50 q3 3 7 0" stroke="#b89a94" stroke-width="1.600" fill="none"/></g></svg></div>
  <div class="abs" style="left:0;width:270px;top:154px;text-align:center;font-weight:bold;font-size:19.2px;letter-spacing:-0.2px;line-height:24px">Ще 19 осіб</div>
</div>

<div class="tile" style="left:1629px;top:575px;width:270px;height:234px;background:radial-gradient(ellipse 100% 110% at 55% 50%,#285467 0%,#214a5c 45%,#18394a 85%,#14303f 100%)">
  <div class="av" style="background:#7a93b3"><svg width="90" height="90" viewBox="0 0 90 90"><defs><filter id="b4"><feGaussianBlur stdDeviation=".9"/></filter><linearGradient id="dw" x1="0" y1="17" x2="0" y2="54" gradientUnits="userSpaceOnUse"><stop offset="0" stop-color="#34538a"/><stop offset=".5" stop-color="#43639a"/><stop offset="1" stop-color="#5877a8"/></linearGradient></defs><rect width="90" height="90" fill="#45659b"/><g filter="url(#b4)"><rect x="-2" y="-2" width="94" height="19" fill="#dbe3ec"/><rect x="-2" y="17" width="94" height="37" fill="url(#dw)"/><rect x="42" y="13" width="50" height="1.800" fill="#9aa6b6"/><rect x="65" y="5" width="1.800" height="12" fill="#9aa2ae"/><path d="M72 16 Q78 13 84 16Z" fill="#5a6e58"/><path d="M8 20 Q10 10 22 6 Q30 2 36 6 Q42 10 44 19 L8 20Z" fill="#2d4a31"/><path d="M-2 53 L60 53 L92 56 L92 92 L-2 92Z" fill="#b8aa97"/><path d="M-2 53 L20 53 L22 59 L-2 61Z" fill="#7e8456"/><path d="M10 66 Q30 60 56 68 L56 80 Q30 72 10 76Z" fill="#c6b9a6"/><path d="M28 84 Q50 76 72 84 L70 92 L30 92Z" fill="#857e70"/><path d="M58 58 Q56 44 68 40 Q78 30 92 32 L92 84 L70 86 Q60 76 58 58Z" fill="#50752e"/><path d="M66 46 Q74 38 86 40 Q80 48 72 52Z" fill="#668c36"/><rect x="19.500" y="37" width="4.600" height="10" rx="2" fill="#9aa08c"/><circle cx="22" cy="35" r="2.100" fill="#7a4632"/><rect x="17.500" y="40" width="3" height="6" rx="1.400" fill="#26282e"/><rect x="20" y="46.500" width="4" height="8" fill="#b5a98e"/><rect x="20.500" y="54" width="3.500" height="4" fill="#8a7e70"/></g></svg></div>
  <div class="mic" style="background:#0b3a5e"><svg viewBox="0 0 24 24" fill="#9ad0ff"><use href="#micoff"/></svg></div>
  <div class="nm">Дарія Володимирівна...</div>
</div>


<!-- BOTTOM BAR -->
<div id="bb">
<div class="abs" style="left:30px;top:30px;font-weight:bold;font-size:19.4px;line-height:24px;white-space:nowrap">09:18</div>
<div class="abs" style="left:95px;top:33px;width:1.3px;height:19px;background:#e3e3e3"></div>
<div class="abs" style="left:111px;top:30px;font-weight:bold;font-size:19.75px;line-height:24px;white-space:nowrap">Майстер-клас “Методика виконання векторно...</div>

<div class="abs" style="left:608px;top:13px;width:110px;height:60px;border-radius:17px;background:#601410"></div>
<svg class="abs" style="left:621px;top:31px" width="30" height="30" viewBox="0 0 24 24"><path d="M7.400 15.400 12 10.800l4.600 4.600L18 14l-6-6-6 6z" fill="#f9dedc" transform="scale(.8) translate(3 2)"/></svg>
<div class="abs" style="left:658px;top:13px;width:60px;height:60px;border-radius:17px;background:#f9dedc"><svg style="position:absolute;left:15px;top:15px" width="30" height="30" viewBox="0 0 24 24" fill="#601410"><use href="#micoff"/></svg></div>

<div class="abs" style="left:728px;top:13px;width:110px;height:60px;border-radius:17px;background:#601410"></div>
<svg class="abs" style="left:741px;top:31px" width="30" height="30" viewBox="0 0 24 24"><path d="M7.400 15.400 12 10.800l4.600 4.600L18 14l-6-6-6 6z" fill="#f9dedc" transform="scale(.8) translate(3 2)"/></svg>
<div class="abs" style="left:778px;top:13px;width:60px;height:60px;border-radius:17px;background:#f9dedc"><svg style="position:absolute;left:15px;top:15px" width="30" height="30" viewBox="0 0 24 24" fill="#601410"><path d="M9.560 8l-2-2-4.150-4.140L2 3.270 4.730 6H4c-.55 0-1 .45-1 1v10c0 .55.45 1 1 1h12c.21 0 .39-.08.55-.18L19.730 21l1.410-1.410-8.860-8.860L9.560 8zM5 16V8h1.730l8 8H5zm10-8v2.610l6 6V6.500l-4 4V7c0-.55-.45-1-1-1h-5.610l2 2H15z"/></svg></div>

<div class="btn" style="left:848px;width:70px"><svg viewBox="0 0 24 24" fill="#e3e3e3"><path d="M20 18c1.100 0 1.990-.9 1.990-2L22 5c0-1.100-.9-2-2-2H4c-1.100 0-2 .9-2 2v11c0 1.100.9 2 2 2H0v2h24v-2h-4zM4 16V5h16v11.010L4 16zm9-6.870 v-2.130 l4 3.740 -4 3.760 v-2.200 c0 0 -1 0 -1 0z" opacity="0"/><path d="M2 19h20v1.800H2zM4 3h16a2 2 0 0 1 2 2v10a2 2 0 0 1-2 2H4a2 2 0 0 1-2-2V5a2 2 0 0 1 2-2zm0 2v10h16V5zm7 8v-3H9l3-3.200 3 3.200h-2v3z"/></svg></div>
<div class="btn" style="left:928px;width:70px"><svg viewBox="0 0 24 24" fill="#e3e3e3"><path d="M12 2a10 10 0 1 0 0 20 10 10 0 0 0 0-20zm0 18a8 8 0 1 1 0-16 8 8 0 0 1 0 16zm3.500-9a1.500 1.500 0 1 0 0-3 1.500 1.500 0 0 0 0 3zm-7 0a1.500 1.500 0 1 0 0-3 1.500 1.500 0 0 0 0 3zM12 17.500c2.330 0 4.310-1.460 5.110-3.500H6.890c.8 2.040 2.780 3.500 5.110 3.500z"/></svg></div>
<div class="btn" style="left:1008px;width:70px"><svg viewBox="0 0 24 24" fill="#e3e3e3"><path d="M19 4H5a2 2 0 0 0-2 2v12a2 2 0 0 0 2 2h14a2 2 0 0 0 2-2V6a2 2 0 0 0-2-2zm0 14H5V6h14zM7 15h3a1 1 0 0 0 1-1v-1H9.500v.5h-2v-3h2v.5H11v-1a1 1 0 0 0-1-1H7a1 1 0 0 0-1 1v4a1 1 0 0 0 1 1zm7 0h3a1 1 0 0 0 1-1v-1h-1.500v.5h-2v-3h2v.5H18v-1a1 1 0 0 0-1-1h-3a1 1 0 0 0-1 1v4a1 1 0 0 0 1 1z"/></svg></div>
<div class="btn" style="left:1088px;width:70px"><svg viewBox="0 0 24 24" fill="#e3e3e3"><path d="M21 7c0-1.380-1.120-2.500-2.500-2.500-.17 0-.34.020-.5.050V4c0-1.380-1.120-2.500-2.500-2.500-.23 0-.46.030-.67.090C14.460.66 13.560 0 12.500 0c-1.230 0-2.250.89-2.460 2.060C9.870 2.020 9.690 2 9.500 2 8.120 2 7 3.120 7 4.500v5.890c-.34-.31-.76-.54-1.220-.66L5.010 9.520c-.83-.23-1.700.09-2.190.83-.38.570-.4 1.310-.15 1.950l2.560 6.430C6.490 21.910 9.570 24 13 24c4.420 0 8-3.580 8-8V7zm-2 9c0 3.310-2.690 6-6 6-2.610 0-4.950-1.590-5.910-4.010l-2.600-6.540 .53.140c.46.120.83.460 1 .9L7 15h2V4.500c0-.28.220-.5.500-.5s.5.220.5.500V12h2V2.500c0-.28.220-.5.500-.5s.5.220.5.500V12h2V4c0-.28.220-.5.500-.5s.5.220.5.500v8h2V7c0-.28.220-.5.500-.5s.5.220.5.500v9z"/></svg></div>
<div class="btn" style="left:1168px;width:45px"><svg viewBox="0 0 24 24" fill="#e3e3e3"><circle cx="12" cy="5.500" r="2"/><circle cx="12" cy="12" r="2"/><circle cx="12" cy="18.500" r="2"/></svg></div>
<div class="btn" style="left:1223px;width:90px;background:#dc362e"><svg viewBox="0 0 24 24" fill="#fff"><path d="M12 9c-1.600 0-3.150.25-4.600.72v3.100c0 .39-.23.740-.56.900-.98.490-1.870 1.120-2.660 1.850-.18.180-.43.280-.7.280-.28 0-.53-.11-.71-.29L.29 13.080c-.18-.17-.29-.42-.29-.7 0-.28.110-.53.290-.71C3.340 8.780 7.460 7 12 7s8.660 1.780 11.710 4.670c.18.180.29.430.29.710 0 .28-.11.530-.29.710l-2.480 2.480c-.18.180-.43.290-.71.290-.27 0-.52-.11-.7-.28-.79-.74-1.690-1.360-2.670-1.850-.33-.16-.56-.5-.56-.9v-3.100C15.150 9.250 13.600 9 12 9z"/></svg></div>

<svg class="abs" style="left:1680px;top:28px" width="30" height="30" viewBox="0 0 24 24" fill="#fff"><path d="M11 7h2v2h-2zm0 4h2v6h-2zm1-9C6.480 2 2 6.480 2 12s4.480 10 10 10 10-4.480 10-10S17.520 2 12 2zm0 18c-4.410 0-8-3.590-8-8s3.590-8 8-8 8 3.590 8 8-3.590 8-8 8z"/></svg>
<svg class="abs" style="left:1740px;top:28px" width="30" height="30" viewBox="0 0 24 24" fill="#fff"><path d="M16.670 13.130C18.040 14.060 19 15.320 19 17v3h4v-3c0-2.180-3.570-3.470-6.330-3.870zM15 12c2.210 0 4-1.790 4-4s-1.790-4-4-4c-.47 0-.91.100-1.330.24a5.980 5.980 0 0 1 0 7.520c.42.140.86.240 1.330.24zM9 12c2.210 0 4-1.790 4-4S11.210 4 9 4 5 5.790 5 8s1.790 4 4 4zm0-6c1.100 0 2 .9 2 2s-.9 2-2 2-2-.9-2-2 .9-2 2-2zm0 7c-2.670 0-8 1.340-8 4v3h16v-3c0-2.660-5.330-4-8-4zm6 5H3v-.99C3.200 16.290 6.300 15 9 15s5.800 1.290 6 2v1z"/></svg>
<svg class="abs" style="left:1800px;top:28px" width="30" height="30" viewBox="0 0 24 24" fill="#fff"><path d="M4 4h16v12H5.170L4 17.170V4m0-2c-1.100 0-1.990.9-1.990 2L2 22l4-4h14c1.100 0 2-.9 2-2V4c0-1.100-.9-2-2-2H4zm2 10h8v2H6v-2zm0-3h12v2H6V9zm0-3h12v2H6V6z"/></svg>
<svg class="abs" style="left:1860px;top:28px" width="30" height="30" viewBox="0 0 24 24" fill="#fff"><circle cx="6" cy="6" r="2"/><circle cx="12" cy="6" r="2"/><circle cx="18" cy="6" r="2"/><circle cx="6" cy="12" r="2"/><circle cx="12" cy="12" r="2"/><circle cx="18" cy="12" r="2"/><circle cx="6" cy="18" r="2"/><circle cx="12" cy="18" r="2"/><circle cx="18" cy="18" r="2"/></svg>
<div class="abs" style="left:1756px;top:2px;width:35px;height:25px;border-radius:12.5px;background:#5f6368;text-align:center;line-height:25px;font-size:14.5px;font-weight:bold;color:#fff">27</div>

</div>

</body>
</html>
